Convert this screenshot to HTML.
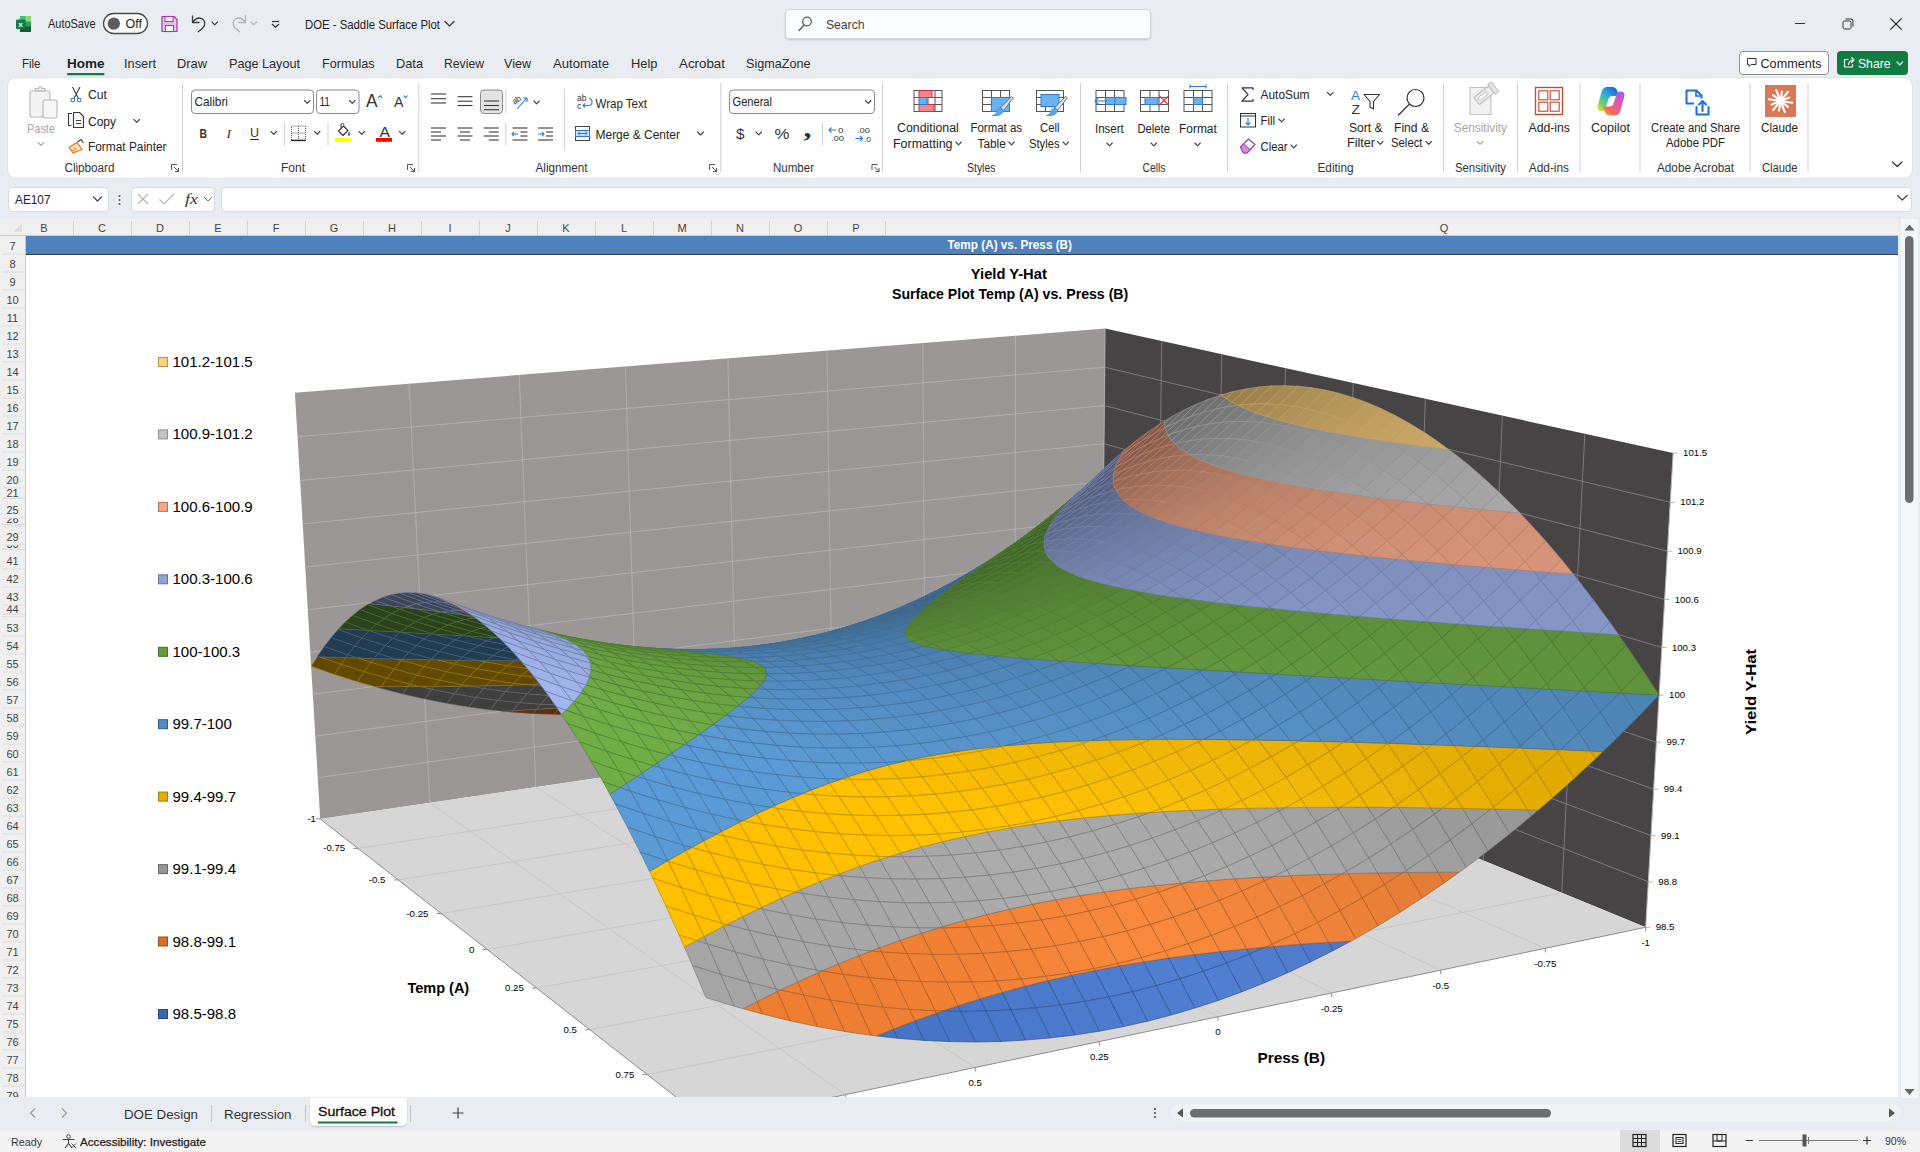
<!DOCTYPE html><html lang="en"><head><meta charset="utf-8"><title>DOE - Saddle Surface Plot - Excel</title><style>
*{box-sizing:border-box;margin:0;padding:0}
html,body{width:1920px;height:1152px;overflow:hidden}
body{background:#e9ecf1;font-family:"Liberation Sans",sans-serif;position:relative;color:#242424}
.abs{position:absolute}
#ribbon{left:8px;top:78px;width:1904px;height:100px;background:#fff;border-radius:8px;box-shadow:0 0 2px rgba(0,0,0,.12)}
#search{left:785px;top:9px;width:366px;height:30px;background:#fbfcfd;border:1px solid #d4d7db;border-radius:4px;box-shadow:0 1px 2px rgba(0,0,0,.15)}
#namebox{left:8px;top:186.5px;width:101px;height:25px;background:#fff;border:1px solid #d6d9dd;border-radius:4px}
#fxbox{left:131px;top:186.5px;width:84px;height:25px;background:#fff;border:1px solid #d6d9dd;border-radius:4px}
#formula{left:221px;top:186.5px;width:1691px;height:25px;background:#fff;border:1px solid #d6d9dd;border-radius:4px}
#colhdr{left:0;top:219px;width:1898px;height:17px;background:#f0f0f0}
#rowhdr{left:0;top:236px;width:26px;height:861px;background:#f0f0f0}
#sheet{left:26px;top:236px;width:1872px;height:861px;background:#fff;overflow:hidden}
#row7{left:26px;top:236px;width:1872px;height:18.7px;background:#4f81bd;border-bottom:1.5px solid #3b3b3b}
#vscroll{left:1898px;top:219px;width:22px;height:879px;background:#e9ecf1}
#vtrack{left:1901px;top:219px;width:17px;height:879px;background:#f5f6f7}
#tabsbar{left:0;top:1098px;width:1920px;height:31px;background:#e9ecf1}
#hscroll{left:1171px;top:1104px;width:730px;height:18px;background:#f1f2f4;border-radius:9px}
#activetab{left:310px;top:1098px;width:97px;height:28px;background:#fff;border-radius:0 0 5px 5px;box-shadow:0 1px 2px rgba(0,0,0,.18)}
#status{left:0;top:1130px;width:1920px;height:22px;background:#f3f3f3}
#viewsel{left:1620px;top:1130px;width:40px;height:22px;background:#dcdcdc}
#comments{left:1739px;top:51px;width:89.5px;height:23.5px;background:#fff;border:1px solid #8f9296;border-radius:4px}
#share{left:1837px;top:51px;width:71px;height:23.5px;background:#107c41;border-radius:4px}
svg text{font-family:"Liberation Sans",sans-serif}
svg.ov{position:absolute;left:0;top:0;pointer-events:none}
</style></head><body>
<div id="titlebar" class="abs" style="left:0;top:0;width:1920px;height:48px"></div>
<div id="search" class="abs"></div>
<div id="comments" class="abs"></div><div id="share" class="abs"></div>
<svg class="ov" width="1920" height="80" viewBox="0 0 1920 80">
<g><rect x="20" y="16" width="11" height="16" rx="1.5" fill="#21a366"/><rect x="20" y="16" width="11" height="5.5" fill="#33c481"/><rect x="20" y="26.5" width="11" height="5.5" fill="#185c37"/><rect x="25.5" y="16" width="5.5" height="5.5" fill="#9bdc6a" opacity=".9"/><rect x="16" y="19.5" width="9.5" height="9.5" rx="1.2" fill="#107c41"/>
<text x="18.3" y="27.3" font-size="8" fill="#fff" font-weight="bold">x</text></g>
<text x="48" y="28" font-size="12.3" fill="#242424" textLength="47.5" lengthAdjust="spacingAndGlyphs">AutoSave</text>
<rect x="103.5" y="13.5" width="44" height="20" rx="10" fill="#fdfdfd" stroke="#4a4a4a" stroke-width="1.3"/><circle cx="113.8" cy="23.6" r="6.2" fill="#5c5c5c"/>
<text x="125.5" y="28" font-size="12.3" fill="#242424" textLength="16.5" lengthAdjust="spacingAndGlyphs">Off</text>
<path d="M162 16.5h12l3 3v12h-15z" fill="#e8c3ea" stroke="#a03ba8" stroke-width="1.2" stroke-linejoin="round"/><rect x="165" y="16.5" width="8" height="5" fill="#fff" stroke="#a03ba8" stroke-width="1.1"/><rect x="165.5" y="25.5" width="8" height="6" fill="#fff" stroke="#a03ba8" stroke-width="1.1"/>
<path d="M192.5 16v6.5h6.5M192.8 22.3c2.5-3.8 6-5 9-3.6c3.6 1.7 4 6.5 1 9.2l-4.5 3.8" fill="none" stroke="#3a3a3a" stroke-width="1.3" stroke-linecap="round" stroke-linejoin="round"/>
<path d="M212 22l2.75 2.8l2.75 -2.8" fill="none" stroke="#3a3a3a" stroke-width="1.1" stroke-linecap="round" stroke-linejoin="round"/>
<path d="M245.5 16v6.5h-6.5M245.2 22.3c-2.5-3.8-6-5-9-3.6c-3.6 1.7-4 6.5-1 9.2l4.5 3.8" fill="none" stroke="#b3b3b3" stroke-width="1.3" stroke-linecap="round" stroke-linejoin="round"/>
<path d="M251 22l2.75 2.8l2.75 -2.8" fill="none" stroke="#b3b3b3" stroke-width="1.1" stroke-linecap="round" stroke-linejoin="round"/>
<path d="M272 21.5h7" stroke="#3a3a3a" stroke-width="1.2"/><path d="M272.3 24.3l3.2 3l3.2 -3" fill="none" stroke="#3a3a3a" stroke-width="1.2" stroke-linecap="round" stroke-linejoin="round"/>
<text x="305" y="28.5" font-size="13" fill="#242424" textLength="135" lengthAdjust="spacingAndGlyphs">DOE - Saddle Surface Plot</text>
<path d="M445 21.5l4.5 4.5l4.5 -4.5" fill="none" stroke="#3a3a3a" stroke-width="1.3" stroke-linecap="round" stroke-linejoin="round"/>
<circle cx="807" cy="21.5" r="4.3" fill="none" stroke="#555" stroke-width="1.2"/><path d="M804 25l-5 5.5" stroke="#555" stroke-width="1.3" stroke-linecap="round"/>
<text x="826" y="29" font-size="13" fill="#444" textLength="38.5" lengthAdjust="spacingAndGlyphs">Search</text>
<path d="M1795 23.5h10" stroke="#333" stroke-width="1"/>
<rect x="1843" y="21" width="8" height="8" rx="1.5" fill="none" stroke="#333" stroke-width="1"/><path d="M1845.5 19h5.5a2 2 0 0 1 2 2v5.5" fill="none" stroke="#333" stroke-width="1"/>
<path d="M1890.5 18.5l11 11m0-11l-11 11" stroke="#333" stroke-width="1.1"/>
<text x="22" y="68" font-size="13.3" fill="#2b2b2b" textLength="18.5" lengthAdjust="spacingAndGlyphs">File</text>
<text x="67" y="68" font-size="13.3" fill="#1f1f1f" textLength="37.5" lengthAdjust="spacingAndGlyphs" font-weight="bold">Home</text>
<text x="124" y="68" font-size="13.3" fill="#2b2b2b" textLength="32" lengthAdjust="spacingAndGlyphs">Insert</text>
<text x="177" y="68" font-size="13.3" fill="#2b2b2b" textLength="30" lengthAdjust="spacingAndGlyphs">Draw</text>
<text x="229" y="68" font-size="13.3" fill="#2b2b2b" textLength="71" lengthAdjust="spacingAndGlyphs">Page Layout</text>
<text x="322" y="68" font-size="13.3" fill="#2b2b2b" textLength="52.5" lengthAdjust="spacingAndGlyphs">Formulas</text>
<text x="396" y="68" font-size="13.3" fill="#2b2b2b" textLength="27" lengthAdjust="spacingAndGlyphs">Data</text>
<text x="444" y="68" font-size="13.3" fill="#2b2b2b" textLength="40" lengthAdjust="spacingAndGlyphs">Review</text>
<text x="504" y="68" font-size="13.3" fill="#2b2b2b" textLength="27" lengthAdjust="spacingAndGlyphs">View</text>
<text x="553" y="68" font-size="13.3" fill="#2b2b2b" textLength="56" lengthAdjust="spacingAndGlyphs">Automate</text>
<text x="631" y="68" font-size="13.3" fill="#2b2b2b" textLength="26.5" lengthAdjust="spacingAndGlyphs">Help</text>
<text x="679" y="68" font-size="13.3" fill="#2b2b2b" textLength="46" lengthAdjust="spacingAndGlyphs">Acrobat</text>
<text x="746" y="68" font-size="13.3" fill="#2b2b2b" textLength="64.5" lengthAdjust="spacingAndGlyphs">SigmaZone</text>
<rect x="67" y="73" width="37.5" height="2.2" rx="1" fill="#107c41"/>
<path d="M1747.5 58.5h8.5v6h-5l-2 2v-2h-1.5z" fill="none" stroke="#333" stroke-width="1" stroke-linejoin="round"/>
<text x="1760.5" y="68" font-size="12.5" fill="#1f1f1f" textLength="61" lengthAdjust="spacingAndGlyphs">Comments</text>
<path d="M1848 59.5h-3.5v7.5h8v-2.5M1848.5 64.5c.5-3 2-4.3 4.5-4.5M1851.5 57.5l2.5 2.5l-2.5 2.5" fill="none" stroke="#fff" stroke-width="1.1" stroke-linejoin="round" stroke-linecap="round"/>
<text x="1858" y="68" font-size="13" fill="#fff" textLength="32.5" lengthAdjust="spacingAndGlyphs">Share</text>
<path d="M1897 62l2.75 2.8l2.75 -2.8" fill="none" stroke="#fff" stroke-width="1.1" stroke-linecap="round" stroke-linejoin="round"/>
</svg>
<div id="ribbon" class="abs"></div>
<svg class="ov" style="top:78px" width="1920" height="106" viewBox="0 78 1920 106">
<rect x="30" y="91" width="20" height="26" rx="2" fill="#f3f3f3" stroke="#b9b9b9" stroke-width="1.2"/><path d="M35.5 91v-2.5h3a1.8 1.8 0 0 1 3.600 0h3v2.500z" fill="#e6e6e6" stroke="#b9b9b9" stroke-width="1.1"/><rect x="43" y="100" width="14" height="18" rx="1.5" fill="#f6f6f6" stroke="#b9b9b9" stroke-width="1.2"/>
<text x="27" y="133" font-size="12.3" fill="#a6a6a6" textLength="28" lengthAdjust="spacingAndGlyphs">Paste</text>
<path d="M38 142.5l3.0 3l3.0 -3" fill="none" stroke="#a6a6a6" stroke-width="1.1" stroke-linecap="round" stroke-linejoin="round"/>
<path d="M72.5 87l6 11.500M80 87l-6 11.500" stroke="#3b3b3b" stroke-width="1.1" fill="none"/><circle cx="72.800" cy="100" r="1.800" fill="none" stroke="#2b7cd3" stroke-width="1.1"/><circle cx="79.200" cy="100" r="1.800" fill="none" stroke="#2b7cd3" stroke-width="1.1"/>
<text x="88" y="99.3" font-size="12.3" fill="#242424" textLength="19" lengthAdjust="spacingAndGlyphs">Cut</text>
<path d="M72 113.500h-3.500v12h3" fill="none" stroke="#3b3b3b" stroke-width="1.100"/><path d="M73.500 112.500h6l4 4v11h-10z" fill="#fff" stroke="#3b3b3b" stroke-width="1.100" stroke-linejoin="round"/><path d="M76 120.500h5M76 123.500h5" stroke="#3b3b3b" stroke-width="1"/>
<text x="88" y="125.5" font-size="12.3" fill="#242424" textLength="28" lengthAdjust="spacingAndGlyphs">Copy</text>
<path d="M134 119.5l2.75 2.8l2.75 -2.8" fill="none" stroke="#444" stroke-width="1.1" stroke-linecap="round" stroke-linejoin="round"/>
<path d="M69 147.500l8-5l5 7l-9 3.500z" fill="#fbe3cf" stroke="#e8731c" stroke-width="1.200" stroke-linejoin="round"/><path d="M77.500 142l3.500-2.500l2.500 3.500" fill="none" stroke="#3b3b3b" stroke-width="1.100"/><path d="M71 150l4 .5M73 147.500l4 2" stroke="#e8731c" stroke-width=".9"/>
<text x="88" y="151" font-size="12.3" fill="#242424" textLength="78.5" lengthAdjust="spacingAndGlyphs">Format Painter</text>
<text x="64.5" y="171.8" font-size="12.3" fill="#333" textLength="50" lengthAdjust="spacingAndGlyphs">Clipboard</text>
<path d="M171.5 170v-5.5h5.5M174 167l4.5 4.5m0-3.5v3.5h-3.5" fill="none" stroke="#555" stroke-width="1"/>
<path d="M182.5 83L182.5 172" stroke="#d1d1d1" stroke-width="1" fill="none"/>
<rect x="191.500" y="90" width="122" height="23.500" rx="3.500" fill="#fff" stroke="#8a8a8a"/><rect x="316.500" y="90" width="42.500" height="23.500" rx="3.500" fill="#fff" stroke="#8a8a8a"/>
<text x="194.5" y="106" font-size="12.3" fill="#242424" textLength="33.5" lengthAdjust="spacingAndGlyphs">Calibri</text>
<path d="M304.5 100.5l2.75 2.8l2.75 -2.8" fill="none" stroke="#444" stroke-width="1.1" stroke-linecap="round" stroke-linejoin="round"/>
<text x="319.5" y="106" font-size="12.3" fill="#242424" textLength="10.5" lengthAdjust="spacingAndGlyphs">11</text>
<path d="M349.5 100.5l2.75 2.8l2.75 -2.8" fill="none" stroke="#444" stroke-width="1.1" stroke-linecap="round" stroke-linejoin="round"/>
<text x="366" y="107" font-size="17.5" fill="#333" textLength="11.5" lengthAdjust="spacingAndGlyphs">A</text>
<path d="M378.300 97.800l2-2.200l2 2.200" fill="none" stroke="#2b7cd3" stroke-width="1.100"/>
<text x="394" y="107" font-size="14.5" fill="#333" textLength="9.5" lengthAdjust="spacingAndGlyphs">A</text>
<path d="M403.500 95.500l2 2.200l2-2.200" fill="none" stroke="#2b7cd3" stroke-width="1.100"/>
<text x="199.5" y="138" font-size="13.5" fill="#333" textLength="7.5" lengthAdjust="spacingAndGlyphs" font-weight="bold">B</text>
<text x="226.5" y="138" font-size="13.5" fill="#333" textLength="4.5" lengthAdjust="spacingAndGlyphs" font-style="italic" style="font-family:Liberation Serif,serif">I</text>
<text x="250" y="137" font-size="12.5" fill="#333" textLength="9" lengthAdjust="spacingAndGlyphs">U</text>
<path d="M250 139.500h9" stroke="#333" stroke-width="1"/>
<path d="M271 131.5l2.75 2.8l2.75 -2.8" fill="none" stroke="#444" stroke-width="1.1" stroke-linecap="round" stroke-linejoin="round"/>
<path d="M284.5 122.5L284.5 145.5" stroke="#d1d1d1" stroke-width="1" fill="none"/>
<rect x="291.500" y="126" width="14" height="14" fill="none" stroke="#555" stroke-width="1" stroke-dasharray="1 1"/><path d="M298.500 126v14M291.500 133h14" stroke="#555" stroke-width="1" stroke-dasharray="1 1"/><path d="M291 140.500h15" stroke="#222" stroke-width="1.300"/>
<path d="M314.5 131.5l2.75 2.8l2.75 -2.8" fill="none" stroke="#444" stroke-width="1.1" stroke-linecap="round" stroke-linejoin="round"/>
<path d="M328 122.5L328 145.5" stroke="#d1d1d1" stroke-width="1" fill="none"/>
<path d="M338.500 131l5-5l4.500 4.500l-5 5z" fill="none" stroke="#333" stroke-width="1.100" stroke-linejoin="round"/><path d="M341 127.500v-2.500a1.500 1.500 0 0 1 3 0" fill="none" stroke="#333" stroke-width="1"/><path d="M349 131.500c1 1.500 1.500 2.500 1 3.500a1 1 0 0 1-2 0c-.300-1 0-2 1-3.500z" fill="#2b7cd3"/>
<rect x="335" y="138" width="16" height="3.800" fill="#ffff00"/>
<path d="M359 131.5l2.75 2.8l2.75 -2.8" fill="none" stroke="#444" stroke-width="1.1" stroke-linecap="round" stroke-linejoin="round"/>
<text x="379.5" y="136.8" font-size="14" fill="#333" textLength="10.5" lengthAdjust="spacingAndGlyphs">A</text>
<rect x="376" y="138" width="16" height="3.800" fill="#ff0000"/>
<path d="M399.5 131.5l2.75 2.8l2.75 -2.8" fill="none" stroke="#444" stroke-width="1.1" stroke-linecap="round" stroke-linejoin="round"/>
<text x="281" y="171.8" font-size="12.3" fill="#333" textLength="24" lengthAdjust="spacingAndGlyphs">Font</text>
<path d="M407.5 170v-5.5h5.5M410 167l4.5 4.5m0-3.5v3.5h-3.5" fill="none" stroke="#555" stroke-width="1"/>
<path d="M418.8 83L418.8 172" stroke="#d1d1d1" stroke-width="1" fill="none"/>
<path d="M431 94h15" stroke="#3b3b3b" stroke-width="1.1"/><path d="M431 98.7h15" stroke="#3b3b3b" stroke-width="1.1"/><path d="M431 103h15" stroke="#3b3b3b" stroke-width="1.1"/>
<path d="M457.5 96.7h15" stroke="#3b3b3b" stroke-width="1.1"/><path d="M457.5 101.2h15" stroke="#3b3b3b" stroke-width="1.1"/><path d="M457.5 105.5h15" stroke="#3b3b3b" stroke-width="1.1"/>
<rect x="480.500" y="90" width="22" height="23.500" rx="3.500" fill="#e3e3e3" stroke="#8a8a8a"/>
<path d="M484 101h15" stroke="#3b3b3b" stroke-width="1.1"/><path d="M484 105.5h15" stroke="#3b3b3b" stroke-width="1.1"/><path d="M484 109.7h15" stroke="#3b3b3b" stroke-width="1.1"/>
<path d="M505.8 90L505.8 113" stroke="#d1d1d1" stroke-width="1" fill="none"/>
<text x="512" y="103" font-size="8.5" fill="#333" textLength="9" lengthAdjust="spacingAndGlyphs" transform="rotate(-35 516 100)">ab</text>
<path d="M517 109l10-11m0 0h-4m4 0v4" fill="none" stroke="#2b7cd3" stroke-width="1.100"/>
<path d="M533.8 101l2.75 2.8l2.75 -2.8" fill="none" stroke="#444" stroke-width="1.1" stroke-linecap="round" stroke-linejoin="round"/>
<path d="M564.5 89L564.5 150.5" stroke="#d1d1d1" stroke-width="1" fill="none"/>
<text x="577" y="100.5" font-size="9.5" fill="#333" textLength="9.5" lengthAdjust="spacingAndGlyphs">ab</text>
<text x="577" y="109" font-size="9.5" fill="#333" textLength="4.5" lengthAdjust="spacingAndGlyphs">c</text>
<path d="M589 98.500c2.500 0 3 2 3 3.500s-1 3.500-3.500 3.500h-5.500m2.200-2.200l-2.200 2.200l2.200 2.200" fill="none" stroke="#2b7cd3" stroke-width="1.100"/>
<text x="595.5" y="107.5" font-size="12.3" fill="#242424" textLength="51.5" lengthAdjust="spacingAndGlyphs">Wrap Text</text>
<path d="M431 128h15" stroke="#3b3b3b" stroke-width="1.1"/><path d="M431 132h10" stroke="#3b3b3b" stroke-width="1.1"/><path d="M431 136h15" stroke="#3b3b3b" stroke-width="1.1"/><path d="M431 140h10" stroke="#3b3b3b" stroke-width="1.1"/>
<path d="M457.5 128h15" stroke="#3b3b3b" stroke-width="1.1"/><path d="M460 132h10" stroke="#3b3b3b" stroke-width="1.1"/><path d="M457.5 136h15" stroke="#3b3b3b" stroke-width="1.1"/><path d="M460 140h10" stroke="#3b3b3b" stroke-width="1.1"/>
<path d="M483.8 128h15" stroke="#3b3b3b" stroke-width="1.1"/><path d="M488.8 132h10" stroke="#3b3b3b" stroke-width="1.1"/><path d="M483.8 136h15" stroke="#3b3b3b" stroke-width="1.1"/><path d="M488.8 140h10" stroke="#3b3b3b" stroke-width="1.1"/>
<path d="M505.8 122.5L505.8 145.5" stroke="#d1d1d1" stroke-width="1" fill="none"/>
<path d="M512.5 128h15" stroke="#3b3b3b" stroke-width="1.1"/><path d="M520.5 132h7" stroke="#3b3b3b" stroke-width="1.1"/><path d="M520.5 136h7" stroke="#3b3b3b" stroke-width="1.1"/><path d="M512.5 140h15" stroke="#3b3b3b" stroke-width="1.1"/>
<path d="M518 134h-6m2-2l-2 2l2 2" fill="none" stroke="#2b7cd3" stroke-width="1.100"/>
<path d="M538 128h15" stroke="#3b3b3b" stroke-width="1.1"/><path d="M546 132h7" stroke="#3b3b3b" stroke-width="1.1"/><path d="M546 136h7" stroke="#3b3b3b" stroke-width="1.1"/><path d="M538 140h15" stroke="#3b3b3b" stroke-width="1.1"/>
<path d="M538 134h6m-2-2l2 2l-2 2" fill="none" stroke="#2b7cd3" stroke-width="1.100"/>
<rect x="575.500" y="126.500" width="14" height="14" fill="#fff" stroke="#444" stroke-width="1"/><rect x="575.500" y="130.500" width="14" height="6" fill="#cfe3f7" stroke="#2b7cd3" stroke-width="1"/><path d="M578 133.500h9m-2-2l2 2l-2 2m-5-4l-2 2l2 2" fill="none" stroke="#2b7cd3" stroke-width="1"/>
<text x="595.5" y="139.3" font-size="12.3" fill="#242424" textLength="84.5" lengthAdjust="spacingAndGlyphs">Merge &amp; Center</text>
<path d="M697.5 132l3.0 3l3.0 -3" fill="none" stroke="#444" stroke-width="1.1" stroke-linecap="round" stroke-linejoin="round"/>
<text x="535.5" y="171.8" font-size="12.3" fill="#333" textLength="52" lengthAdjust="spacingAndGlyphs">Alignment</text>
<path d="M709.5 170v-5.5h5.5M712 167l4.5 4.5m0-3.5v3.5h-3.5" fill="none" stroke="#555" stroke-width="1"/>
<path d="M720.8 83L720.8 172" stroke="#d1d1d1" stroke-width="1" fill="none"/>
<rect x="729.500" y="90" width="145" height="23.500" rx="3.500" fill="#fff" stroke="#8a8a8a"/>
<text x="732.5" y="106" font-size="12.3" fill="#242424" textLength="39.5" lengthAdjust="spacingAndGlyphs">General</text>
<path d="M865.5 100.5l2.75 2.8l2.75 -2.8" fill="none" stroke="#444" stroke-width="1.1" stroke-linecap="round" stroke-linejoin="round"/>
<text x="736" y="139" font-size="15.5" fill="#333" textLength="8.5" lengthAdjust="spacingAndGlyphs">$</text>
<path d="M756 132l2.75 2.8l2.75 -2.8" fill="none" stroke="#444" stroke-width="1.1" stroke-linecap="round" stroke-linejoin="round"/>
<text x="774.5" y="139" font-size="15.5" fill="#333" textLength="15" lengthAdjust="spacingAndGlyphs">%</text>
<text x="803.5" y="137" font-size="26" fill="#333" textLength="8" lengthAdjust="spacingAndGlyphs" font-weight="bold" style="font-family:Liberation Serif,serif">,</text>
<path d="M822.5 122.5L822.5 145.5" stroke="#d1d1d1" stroke-width="1" fill="none"/>
<path d="M836 130h-7m2.500-2.500l-2.500 2.500l2.500 2.500" fill="none" stroke="#2b7cd3" stroke-width="1.100"/><text x="838" y="133" font-size="8" fill="#333" textLength="5.5" lengthAdjust="spacingAndGlyphs">0</text><text x="831" y="141" font-size="8" fill="#333" textLength="13" lengthAdjust="spacingAndGlyphs">.00</text>
<text x="857" y="133" font-size="8" fill="#333" textLength="13" lengthAdjust="spacingAndGlyphs">.00</text><path d="M855.500 138.500h7m-2.500-2.500l2.500 2.500l-2.500 2.500" fill="none" stroke="#2b7cd3" stroke-width="1.100"/><text x="864" y="141.5" font-size="8" fill="#333" textLength="7" lengthAdjust="spacingAndGlyphs">.0</text>
<text x="773" y="171.8" font-size="12.3" fill="#333" textLength="41" lengthAdjust="spacingAndGlyphs">Number</text>
<path d="M872.0 170v-5.5h5.5M874.5 167l4.5 4.5m0-3.5v3.5h-3.5" fill="none" stroke="#555" stroke-width="1"/>
<path d="M882.5 83L882.5 172" stroke="#d1d1d1" stroke-width="1" fill="none"/>
<rect x="914" y="90.500" width="28" height="21" fill="#fff" stroke="#555"/><path d="M921 90.500v21M928 90.500v21M935 90.500v21M914 97.500h28M914 104.500h28" stroke="#555" stroke-width="1"/><rect x="919" y="90.500" width="13" height="7" fill="#f4888a" stroke="#d13438"/><rect x="919" y="104.500" width="15" height="7" fill="#f4888a" stroke="#d13438"/><rect x="919" y="97.500" width="8" height="7" fill="#6cb0ee" stroke="#2b7cd3"/>
<text x="897" y="131.8" font-size="12.3" fill="#242424" textLength="61.8" lengthAdjust="spacingAndGlyphs">Conditional</text>
<text x="893" y="148" font-size="12.3" fill="#242424" textLength="59.5" lengthAdjust="spacingAndGlyphs">Formatting</text>
<path d="M955.8 142l2.75 2.8l2.75 -2.8" fill="none" stroke="#444" stroke-width="1.1" stroke-linecap="round" stroke-linejoin="round"/>
<rect x="982.500" y="90.500" width="27" height="21" fill="#fff" stroke="#555"/><path d="M991.500 90.500v21M1000.500 90.500v21M982.500 97.500h27M982.500 104.500h27" stroke="#555" stroke-width="1"/><rect x="991.500" y="97.500" width="18" height="14" fill="#6cb0ee" stroke="#2b7cd3"/><path d="M1011.500 96.500l1.800 1.300l-9.500 12.500l-3.300-2.300z" fill="#cfe4f8" stroke="#666" stroke-width=".9" stroke-linejoin="round"/><path d="M1000.300 108l3.500 2.400c-.8 3.300-4.500 5.800-11.500 5.200c3.200-1 4.300-2.600 4.800-4.600c.4-1.600 1.400-2.600 3.200-3z" fill="#5ea6e8" stroke="#3f8edb" stroke-width=".8" stroke-linejoin="round"/>
<text x="970.5" y="131.8" font-size="12.3" fill="#242424" textLength="51.5" lengthAdjust="spacingAndGlyphs">Format as</text>
<text x="977.5" y="148" font-size="12.3" fill="#242424" textLength="28.3" lengthAdjust="spacingAndGlyphs">Table</text>
<path d="M1008.8 142l2.75 2.8l2.75 -2.8" fill="none" stroke="#444" stroke-width="1.1" stroke-linecap="round" stroke-linejoin="round"/>
<rect x="1036.500" y="90.500" width="27" height="21" fill="#fff" stroke="#555"/><path d="M1036.500 97.500h27M1036.500 104.500h27M1045.500 104.500v7M1054.500 104.500v7" stroke="#555" stroke-width="1"/><rect x="1041" y="94.500" width="18" height="12" fill="#6cb0ee" stroke="#2b7cd3"/><path d="M1065.500 96.500l1.800 1.300l-9.500 12.500l-3.300-2.300z" fill="#cfe4f8" stroke="#666" stroke-width=".9" stroke-linejoin="round"/><path d="M1054.300 108l3.500 2.400c-.8 3.300-4.500 5.800-11.500 5.200c3.200-1 4.300-2.600 4.800-4.600c.4-1.600 1.400-2.600 3.200-3z" fill="#5ea6e8" stroke="#3f8edb" stroke-width=".8" stroke-linejoin="round"/>
<text x="1040" y="131.8" font-size="12.3" fill="#242424" textLength="19.5" lengthAdjust="spacingAndGlyphs">Cell</text>
<text x="1029" y="148" font-size="12.3" fill="#242424" textLength="30.5" lengthAdjust="spacingAndGlyphs">Styles</text>
<path d="M1063 142l2.75 2.8l2.75 -2.8" fill="none" stroke="#444" stroke-width="1.1" stroke-linecap="round" stroke-linejoin="round"/>
<text x="967" y="171.8" font-size="12.3" fill="#333" textLength="28.5" lengthAdjust="spacingAndGlyphs">Styles</text>
<path d="M1080.5 83L1080.5 172" stroke="#d1d1d1" stroke-width="1" fill="none"/>
<rect x="1096" y="90.500" width="28" height="21" fill="#fff" stroke="#555"/><path d="M1105.5 90.500v21M1114.5 90.500v21M1096 97.500h28M1096 104.500h28" stroke="#555" stroke-width="1"/><rect x="1105.500" y="97.500" width="20.500" height="7" fill="#6cb0ee" stroke="#2b7cd3"/><path d="M1115 97.500v7" stroke="#2b7cd3"/><path d="M1107 101h-12m3.500-3.500l-3.500 3.500l3.500 3.500" fill="none" stroke="#2b7cd3" stroke-width="1.200"/>
<text x="1095" y="132.5" font-size="12.3" fill="#242424" textLength="28.8" lengthAdjust="spacingAndGlyphs">Insert</text>
<path d="M1106.8 143l2.75 2.8l2.75 -2.8" fill="none" stroke="#444" stroke-width="1.1" stroke-linecap="round" stroke-linejoin="round"/>
<rect x="1140.5" y="90.500" width="28" height="21" fill="#fff" stroke="#555"/><path d="M1150.0 90.500v21M1159.0 90.500v21M1140.5 97.500h28M1140.5 104.500h28" stroke="#555" stroke-width="1"/><rect x="1145" y="97.500" width="13" height="7" fill="#6cb0ee" stroke="#2b7cd3"/><path d="M1159 95.500l10 10m0-10l-10 10" stroke="#e8373d" stroke-width="1.200"/>
<text x="1137.5" y="132.5" font-size="12.3" fill="#242424" textLength="32.5" lengthAdjust="spacingAndGlyphs">Delete</text>
<path d="M1151 143l2.75 2.8l2.75 -2.8" fill="none" stroke="#444" stroke-width="1.1" stroke-linecap="round" stroke-linejoin="round"/>
<rect x="1184" y="90.500" width="28" height="21" fill="#fff" stroke="#555"/><path d="M1193.5 90.500v21M1202.5 90.500v21M1184 97.500h28M1184 104.500h28" stroke="#555" stroke-width="1"/><rect x="1193.500" y="97.500" width="9" height="7" fill="#6cb0ee" stroke="#2b7cd3"/><path d="M1190 86.500h16M1190 84.500v4M1206 84.500v4" stroke="#2b7cd3" stroke-width="1.100"/>
<text x="1179" y="132.5" font-size="12.3" fill="#242424" textLength="37.8" lengthAdjust="spacingAndGlyphs">Format</text>
<path d="M1194.8 143l2.75 2.8l2.75 -2.8" fill="none" stroke="#444" stroke-width="1.1" stroke-linecap="round" stroke-linejoin="round"/>
<text x="1142.5" y="171.8" font-size="12.3" fill="#333" textLength="23" lengthAdjust="spacingAndGlyphs">Cells</text>
<path d="M1227.5 83L1227.5 172" stroke="#d1d1d1" stroke-width="1" fill="none"/>
<path d="M1253 90v-2.200h-11l6 6.700l-6 6.700h11v-2.200" fill="none" stroke="#333" stroke-width="1.200" stroke-linejoin="round"/>
<text x="1260.5" y="99.3" font-size="12.3" fill="#242424" textLength="49" lengthAdjust="spacingAndGlyphs">AutoSum</text>
<path d="M1327.5 92.5l2.75 2.8l2.75 -2.8" fill="none" stroke="#444" stroke-width="1.1" stroke-linecap="round" stroke-linejoin="round"/>
<rect x="1240.500" y="113.500" width="15" height="13.500" fill="#fff" stroke="#333"/><path d="M1240.500 116h15" stroke="#333"/><path d="M1248 118v7m-2.500-2.500l2.500 2.500l2.500-2.500" fill="none" stroke="#2b7cd3" stroke-width="1.100"/>
<text x="1260.5" y="125" font-size="12.3" fill="#242424" textLength="14.5" lengthAdjust="spacingAndGlyphs">Fill</text>
<path d="M1278.8 119l2.75 2.8l2.75 -2.8" fill="none" stroke="#444" stroke-width="1.1" stroke-linecap="round" stroke-linejoin="round"/>
<path d="M1240.500 147l8-8l6.500 5.500l-8 8.500h-3.500z" fill="#fff" stroke="#a03ba8" stroke-width="1.200" stroke-linejoin="round"/><path d="M1240.500 147l3-3l6.500 5.500l-3 3.500h-3.500z" fill="#d68adb" stroke="#a03ba8" stroke-width="1"/>
<text x="1260.5" y="151" font-size="12.3" fill="#242424" textLength="27" lengthAdjust="spacingAndGlyphs">Clear</text>
<path d="M1291 145l2.75 2.8l2.75 -2.8" fill="none" stroke="#444" stroke-width="1.1" stroke-linecap="round" stroke-linejoin="round"/>
<text x="1351" y="100" font-size="12.5" fill="#2b7cd3" textLength="9" lengthAdjust="spacingAndGlyphs">A</text><text x="1351.5" y="113.5" font-size="12.5" fill="#333" textLength="8.5" lengthAdjust="spacingAndGlyphs">Z</text>
<path d="M1364 94.500h15.500l-6 7v7.500l-3.500-2v-5.500z" fill="none" stroke="#333" stroke-width="1.100" stroke-linejoin="round"/>
<text x="1349" y="131.8" font-size="12.3" fill="#242424" textLength="33.5" lengthAdjust="spacingAndGlyphs">Sort &amp;</text>
<text x="1347" y="147.4" font-size="12.3" fill="#242424" textLength="28" lengthAdjust="spacingAndGlyphs">Filter</text>
<path d="M1377.5 141.5l2.75 2.8l2.75 -2.8" fill="none" stroke="#444" stroke-width="1.1" stroke-linecap="round" stroke-linejoin="round"/>
<circle cx="1415.500" cy="98" r="8.500" fill="none" stroke="#333" stroke-width="1.200"/><path d="M1409.500 104l-11.500 11.500" stroke="#333" stroke-width="1.300"/>
<text x="1394" y="131.8" font-size="12.3" fill="#242424" textLength="35" lengthAdjust="spacingAndGlyphs">Find &amp;</text>
<text x="1391" y="147.4" font-size="12.3" fill="#242424" textLength="31.5" lengthAdjust="spacingAndGlyphs">Select</text>
<path d="M1426 141.5l2.75 2.8l2.75 -2.8" fill="none" stroke="#444" stroke-width="1.1" stroke-linecap="round" stroke-linejoin="round"/>
<text x="1317.5" y="171.8" font-size="12.3" fill="#333" textLength="36" lengthAdjust="spacingAndGlyphs">Editing</text>
<path d="M1443.5 83L1443.5 172" stroke="#d1d1d1" stroke-width="1" fill="none"/>
<path d="M1470 87.500h21v27h-21z" fill="#f1f1f1" stroke="#c2c2c2" stroke-width="1.100"/><g transform="rotate(-38 1485.500 94)"><rect x="1474" y="89.500" width="19" height="9" rx="1.500" fill="#ececec" stroke="#bcbcbc" stroke-width="1.100"/><rect x="1477" y="92.200" width="10" height="3.600" fill="#fff" stroke="#bcbcbc" stroke-width=".9"/><rect x="1493" y="88" width="4.500" height="12" fill="#e4e4e4" stroke="#bcbcbc" stroke-width="1"/></g>
<text x="1453.8" y="131.8" font-size="12.3" fill="#a6a6a6" textLength="53.2" lengthAdjust="spacingAndGlyphs">Sensitivity</text>
<path d="M1477.3 141.5l2.75 2.8l2.75 -2.8" fill="none" stroke="#a6a6a6" stroke-width="1.1" stroke-linecap="round" stroke-linejoin="round"/>
<text x="1455" y="171.8" font-size="12.3" fill="#333" textLength="51" lengthAdjust="spacingAndGlyphs">Sensitivity</text>
<path d="M1517.5 83L1517.5 172" stroke="#d1d1d1" stroke-width="1" fill="none"/>
<rect x="1535.500" y="87.500" width="27" height="27" fill="#fff" stroke="#c8472a" stroke-width="1.300"/><rect x="1538.800" y="90.800" width="9" height="9" fill="none" stroke="#c8472a" stroke-width="1.100"/><rect x="1550.200" y="90.800" width="9" height="9" fill="none" stroke="#c8472a" stroke-width="1.100"/><rect x="1538.800" y="102.200" width="9" height="9" fill="none" stroke="#c8472a" stroke-width="1.100"/><rect x="1550.200" y="102.200" width="9" height="9" fill="none" stroke="#c8472a" stroke-width="1.100"/>
<text x="1528.5" y="131.8" font-size="12.3" fill="#242424" textLength="41.5" lengthAdjust="spacingAndGlyphs">Add-ins</text>
<text x="1528.8" y="171.8" font-size="12.3" fill="#333" textLength="40.2" lengthAdjust="spacingAndGlyphs">Add-ins</text>
<path d="M1580 83L1580 172" stroke="#d1d1d1" stroke-width="1" fill="none"/>
<defs><linearGradient id="cp1" x1=".8" y1="0" x2=".1" y2="1"><stop offset="0" stop-color="#1b5fd0"/><stop offset=".35" stop-color="#2aa6e0"/><stop offset=".7" stop-color="#5fd07a"/><stop offset="1" stop-color="#f2d33c"/></linearGradient><linearGradient id="cp2" x1=".9" y1="0" x2=".2" y2="1"><stop offset="0" stop-color="#9b5cf0"/><stop offset=".45" stop-color="#e35bb0"/><stop offset=".8" stop-color="#f2685a"/><stop offset="1" stop-color="#f59a3c"/></linearGradient></defs>
<path d="M1603.500 87h8.500q4 0 5.300 4l1.700 5h-6.500q-3 0-4 3l-3 9q-1 3-4 3q-5 0-3.700-5.500l3.700-13.500q1.300-5 6-5z" fill="url(#cp1)"/><path d="M1618.500 115.500h-8.500q-4 0-5.300-4l-1.700-5h6.500q3 0 4-3l3-9q1-3 4-3q5 0 3.700 5.500l-3.700 13.500q-1.300 5-6 5z" fill="url(#cp2)"/>
<text x="1591" y="131.8" font-size="12.3" fill="#242424" textLength="39" lengthAdjust="spacingAndGlyphs">Copilot</text>
<path d="M1640 83L1640 172" stroke="#d1d1d1" stroke-width="1" fill="none"/>
<path d="M1694 103.500h-7.500v-13h10l5 5v3" fill="none" stroke="#1a6fe8" stroke-width="2" stroke-linejoin="round"/><path d="M1696 90.500v5.500h5.500" fill="none" stroke="#1a6fe8" stroke-width="1.600"/><path d="M1696.500 107v7.500h12v-7.500M1702.500 111v-10m-3.500 3.500l3.500-3.500l3.500 3.500" fill="none" stroke="#1a6fe8" stroke-width="2" stroke-linejoin="round" stroke-linecap="round"/>
<text x="1651" y="131.8" font-size="12.3" fill="#242424" textLength="89" lengthAdjust="spacingAndGlyphs">Create and Share</text>
<text x="1666" y="147.4" font-size="12.3" fill="#242424" textLength="59" lengthAdjust="spacingAndGlyphs">Adobe PDF</text>
<text x="1657" y="171.8" font-size="12.3" fill="#333" textLength="77" lengthAdjust="spacingAndGlyphs">Adobe Acrobat</text>
<path d="M1750 83L1750 172" stroke="#d1d1d1" stroke-width="1" fill="none"/>
<rect x="1765" y="85" width="31" height="32" fill="#d97757"/>
<path d="M1780.500 101l11.7 1.8M1780.500 101l7.4 5.9M1780.500 101l4.3 11.0M1780.500 101l-1.4 9.4M1780.500 101l-7.4 9.2M1780.500 101l-8.8 3.5M1780.500 101l-11.7 -1.8M1780.500 101l-7.4 -5.9M1780.500 101l-4.3 -11.0M1780.500 101l1.4 -9.4M1780.500 101l7.4 -9.2M1780.500 101l8.8 -3.5" stroke="#fff" stroke-width="2.100" stroke-linecap="round"/>
<text x="1761" y="131.8" font-size="12.3" fill="#242424" textLength="37" lengthAdjust="spacingAndGlyphs">Claude</text>
<text x="1762" y="171.8" font-size="12.3" fill="#333" textLength="35.5" lengthAdjust="spacingAndGlyphs">Claude</text>
<path d="M1808 83L1808 172" stroke="#d1d1d1" stroke-width="1" fill="none"/>
<path d="M1892.5 162l4.75 4.5l4.75 -4.5" fill="none" stroke="#333" stroke-width="1.2" stroke-linecap="round" stroke-linejoin="round"/>
</svg>
<div id="namebox" class="abs"></div><div id="fxbox" class="abs"></div><div id="formula" class="abs"></div>
<div id="colhdr" class="abs"></div><div id="rowhdr" class="abs"></div><div id="vscroll" class="abs"></div><div id="vtrack" class="abs"></div>
<div id="sheet" class="abs"></div><div id="row7" class="abs"></div>
<svg class="chart" width="1872" height="861" viewBox="26 236 1872 861" style="position:absolute;left:26px;top:236px">
<path d="M320.2 818.9L294.9 392.7L1105.1 328.6L1101.6 703.7Z" fill="#9b9796"/>
<path d="M1101.6 703.7L1105.1 328.6L1673.1 453.1L1645.7 927.3Z" fill="#464445"/>
<path d="M320.2 818.9L1101.6 703.7L1645.7 927.3L709.3 1123.1Z" fill="#d6d6d6"/>
<path d="M317.8 777.7L1102 667.2M315.3 736.2L1102.3 630.6M312.8 694.3L1102.6 593.7M310.3 652.2L1103 556.5M307.8 609.7L1103.3 519.1M305.3 567L1103.7 481.5M302.7 523.9L1104 443.7M300.1 480.5L1104.4 405.6M297.5 436.8L1104.8 367.2M1014.8 716.5L1015.5 335.7M925.1 729.7L922.8 343M832.6 743.4L827 350.6M736.9 757.5L727.9 358.4M638 772L625.4 366.6M535.8 787.1L519.2 375M429.9 802.8L409.1 383.7M1101.6 703.7L1105.1 328.6" stroke="#b7b5b4" stroke-width=".8" fill="none"/>
<path d="M1102 667.2L1648.3 881.7M1102.3 630.6L1651 835.6M1102.6 593.7L1653.7 789.2M1103 556.5L1656.4 742.3M1103.3 519.1L1659.1 695.1M1103.7 481.5L1661.9 647.5M1104 443.7L1664.7 599.5M1104.4 405.6L1667.5 551.2M1104.8 367.2L1670.3 502.3M1156.3 726.2L1161.8 341M1214.2 749.9L1221.8 354.2M1275.5 775.1L1285.5 368.1M1340.5 801.9L1353.2 383M1409.6 830.3L1425.4 398.8M1483.2 860.5L1502.4 415.7M1561.7 892.8L1584.8 433.8" stroke="#8a8989" stroke-width=".8" fill="none"/>
<path d="M1156.3 726.2L358 848.4M1014.8 716.5L1545.3 948.3M1214.2 749.9L398.2 879.9M925.1 729.7L1440.7 970.2M1275.5 775.1L441.2 913.5M832.6 743.4L1331.7 993M1340.5 801.9L487.2 949.5M736.9 757.5L1218 1016.8M1409.6 830.3L536.6 988.1M638 772L1099.3 1041.6M1483.2 860.5L589.7 1029.7M535.8 787.1L975.2 1067.5M1561.7 892.8L647.1 1074.6M429.9 802.8L845.3 1094.7" stroke="#c6c6c6" stroke-width=".9" fill="none"/>
<path d="M320.2 818.9L709.3 1123.1L1645.7 927.3M320.2 818.9h-4.5M1645.7 927.3v4M358 848.4h-4.5M1545.3 948.3v4M398.2 879.9h-4.5M1440.7 970.2v4M441.2 913.5h-4.5M1331.7 993v4M487.2 949.5h-4.5M1218 1016.8v4M536.6 988.1h-4.5M1099.3 1041.6v4M589.7 1029.7h-4.5M975.2 1067.5v4M647.1 1074.6h-4.5M845.3 1094.7v4M709.3 1123.1h-4.5M709.3 1123.1v4" stroke="#8c8c8c" stroke-width="1" fill="none"/>
<path d="M1645.7 927.3L1673.1 453.1M1645.7 927.3h4.5M1648.3 881.7h4.5M1651 835.6h4.5M1653.7 789.2h4.5M1656.4 742.3h4.5M1659.1 695.1h4.5M1661.9 647.5h4.5M1664.7 599.5h4.5M1667.5 551.2h4.5M1670.3 502.3h4.5M1673.1 453.1h4.5" stroke="#b5b5b5" stroke-width="1" fill="none"/>
<style>.sf path{stroke-width:.65;stroke-linejoin:round}.s0{stroke:#30518b}.s1{stroke:#a85923}.s2{stroke:#757575}.s3{stroke:#b58800}.s4{stroke:#416e97}.s5{stroke:#507b32}.s6{stroke:#7281a9}.s7{stroke:#be846c}.s8{stroke:#9a9a9a}.s9{stroke:#c8a565}.sf .k{stroke-opacity:.6}</style>
<g class="sf">
<path class="s5" fill="#2e481d" d="M1088 483.9L1086.2 485.6L1088.8 483.1Z"/>
<path class="s6" fill="#434b63" d="M1103.8 468.9L1114.9 458.5L1097.2 475.3L1088 483.9L1088.8 483.1Z"/>
<path class="s5 k" fill="#2b421b" d="M1086.2 485.6L1088 483.9L1083 488.2L1079.4 491.5L1068.5 501.7Z"/>
<path class="s6 k" fill="#3d455a" d="M1088 483.9L1097.2 475.3L1083 488.2Z"/>
<path class="s5 k" fill="#2b421b" d="M1068.5 501.7L1079.4 491.5L1061.6 507.1L1050.8 517.3Z"/>
<path class="s4 k" fill="#233b51" d="M1036.9 528.5L1033 532.2L1039.9 526.4Z"/>
<path class="s5 k" fill="#2b421b" d="M1050.8 517.3L1061.6 507.1L1043.7 522.2L1036.9 528.5L1039.9 526.4Z"/>
<path class="s4 k" fill="#233b51" d="M1033 532.2L1036.9 528.5L1031.3 532.1L1025.7 536.6L1015.1 546.6Z"/>
<path class="s5 k" fill="#2b421b" d="M1036.9 528.5L1043.7 522.2L1031.3 532.1Z"/>
<path class="s4 k" fill="#233b51" d="M1015.1 546.6L1025.7 536.6L1007.6 550.5L997.1 560.4Z"/>
<path class="s3 k" fill="#614900" d="M980.8 572.1L979.1 573.7L982.7 571Z"/>
<path class="s4 k" fill="#233b51" d="M997.1 560.4L1007.6 550.5L989.5 563.9L980.8 572.1L982.7 571Z"/>
<path class="s3 k" fill="#614900" d="M979.1 573.7L980.8 572.1L970.6 577.3L960.9 586.4Z"/>
<path class="s4 k" fill="#233b51" d="M980.8 572.1L989.5 563.9L971.2 576.6L970.6 577.3Z"/>
<path class="s3 k" fill="#614900" d="M960.9 586.4L970.6 577.3L969.6 577.7L952.9 588.8L942.7 598.5Z"/>
<path class="s4 k" fill="#233b51" d="M970.6 577.3L971.2 576.6L969.6 577.7Z"/>
<path class="s3 k" fill="#614900" d="M942.7 598.5L952.9 588.8L934.5 600.4L924.4 610Z"/>
<path class="s2 k" fill="#3f3f3f" d="M907.6 619.4L906 621L910.8 618.1Z"/>
<path class="s3 k" fill="#614900" d="M924.4 610L934.5 600.4L916 611.4L907.6 619.4L910.8 618.1Z"/>
<path class="s2 k" fill="#3f3f3f" d="M906 621L907.6 619.4L894.9 624.2L887.5 631.3Z"/>
<path class="s3 k" fill="#614900" d="M907.6 619.4L916 611.4L897.4 621.8L894.9 624.2Z"/>
<path class="s2 k" fill="#3f3f3f" d="M887.5 631.3L894.9 624.2L888.6 626.4L878.7 631.6L868.9 641.1Z"/>
<path class="s3 k" fill="#614900" d="M894.9 624.2L897.4 621.8L888.6 626.4Z"/>
<path class="s2 k" fill="#3f3f3f" d="M868.9 641.1L878.7 631.6L859.9 640.8L850.2 650.3Z"/>
<path class="s2 k" fill="#3f3f3f" d="M850.2 650.3L859.9 640.8L841 649.4L831.4 658.9Z"/>
<path class="s2 k" fill="#3f3f3f" d="M831.4 658.9L841 649.4L821.9 657.5L812.4 666.9Z"/>
<path class="s1 k" fill="#5a3013" d="M794.9 672.8L793.4 674.3L802.3 670.8Z"/>
<path class="s2 k" fill="#3f3f3f" d="M812.4 666.9L821.9 657.5L802.7 664.9L794.9 672.8L802.3 670.8Z"/>
<path class="s1 k" fill="#5a3013" d="M793.4 674.3L794.9 672.8L778.5 676.7L774.2 681.1Z"/>
<path class="s2 k" fill="#3f3f3f" d="M794.9 672.8L802.7 664.9L783.5 671.7L778.5 676.7Z"/>
<path class="s1 k" fill="#5a3013" d="M774.2 681.1L778.5 676.7L761.5 680.5L754.9 687.3Z"/>
<path class="s2 k" fill="#3f3f3f" d="M778.5 676.7L783.5 671.7L764.1 677.9L761.5 680.5Z"/>
<path class="s1 k" fill="#5a3013" d="M754.9 687.3L761.5 680.5L743.9 684.1L735.5 692.8Z"/>
<path class="s2 k" fill="#3f3f3f" d="M761.5 680.5L764.1 677.9L744.5 683.5L743.9 684.1Z"/>
<path class="s1 k" fill="#5a3013" d="M735.5 692.8L743.9 684.1L736.6 685.5L724.8 688.5L715.9 697.8Z"/>
<path class="s2 k" fill="#3f3f3f" d="M743.9 684.1L744.5 683.5L736.6 685.5Z"/>
<path class="s1 k" fill="#5a3013" d="M715.9 697.8L724.8 688.5L705 692.8L696.2 702.1Z"/>
<path class="s1 k" fill="#5a3013" d="M696.2 702.1L705 692.8L685 696.5L676.3 705.8Z"/>
<path class="s1 k" fill="#5a3013" d="M676.3 705.8L685 696.5L664.9 699.6L656.3 708.9Z"/>
<path class="s1 k" fill="#5a3013" d="M656.3 708.9L664.9 699.6L644.6 702L636.1 711.4Z"/>
<path class="s1 k" fill="#5a3013" d="M636.1 711.4L644.6 702L624.2 703.8L615.8 713.2Z"/>
<path class="s1 k" fill="#5a3013" d="M615.8 713.2L624.2 703.8L603.6 704.9L595.3 714.3Z"/>
<path class="s1 k" fill="#5a3013" d="M595.3 714.3L603.6 704.9L591.1 705.2L582.2 706L574.7 714.8Z"/>
<path class="s2 k" fill="#3f3f3f" d="M591.1 705.2L582.8 705.3L582.2 706Z"/>
<path class="s1 k" fill="#5a3013" d="M574.7 714.8L582.2 706L559.6 707.7L553.8 714.6Z"/>
<path class="s2 k" fill="#3f3f3f" d="M582.2 706L582.8 705.3L561.8 705.1L559.6 707.7Z"/>
<path class="s1 k" fill="#5a3013" d="M553.8 714.6L559.6 707.7L536.5 709.3L532.8 713.7Z"/>
<path class="s2 k" fill="#3f3f3f" d="M559.6 707.7L561.8 705.1L540.7 704.2L536.5 709.3Z"/>
<path class="s1 k" fill="#5a3013" d="M532.8 713.7L536.5 709.3L512.8 710.7L511.6 712.2Z"/>
<path class="s2 k" fill="#3f3f3f" d="M536.5 709.3L540.7 704.2L519.3 702.6L512.8 710.7Z"/>
<path class="s1 k" fill="#5a3013" d="M511.6 712.2L512.8 710.7L501.6 711.2Z"/>
<path class="s2 k" fill="#3f3f3f" d="M512.8 710.7L519.3 702.6L497.8 700.4L490.2 710L501.6 711.2Z"/>
<path class="s2 k" fill="#3f3f3f" d="M490.2 710L497.8 700.4L476.1 697.4L468.6 707.1Z"/>
<path class="s2 k" fill="#3f3f3f" d="M468.6 707.1L476.1 697.4L454.1 693.7L446.8 703.4Z"/>
<path class="s2 k" fill="#3f3f3f" d="M446.8 703.4L454.1 693.7L432 689.3L424.7 699.1Z"/>
<path class="s2 k" fill="#3f3f3f" d="M424.7 699.1L432 689.3L420.1 686.5L407.8 686.6L402.5 694Z"/>
<path class="s3 k" fill="#614900" d="M420.1 686.5L409.6 684.1L407.8 686.6Z"/>
<path class="s2 k" fill="#3f3f3f" d="M402.5 694L407.8 686.6L381.2 686.6L380 688.2Z"/>
<path class="s3 k" fill="#614900" d="M407.8 686.6L409.6 684.1L387 678.2L381.2 686.6Z"/>
<path class="s2 k" fill="#3f3f3f" d="M380 688.2L381.2 686.6L374.2 686.5Z"/>
<path class="s3 k" fill="#614900" d="M381.2 686.6L387 678.2L364.1 671.6L357.3 681.7L374.2 686.5Z"/>
<path class="s3 k" fill="#614900" d="M357.3 681.7L364.1 671.6L341 664.2L334.4 674.4Z"/>
<path class="s3 k" fill="#614900" d="M334.4 674.4L341 664.2L319.8 656.7L317.3 656.7L311.2 666.3Z"/>
<path class="s4 k" fill="#233b51" d="M319.8 656.7L317.7 656L317.3 656.7Z"/>
<path class="s6" fill="#444d65" d="M1114.9 458.5L1125.2 449.6L1124.9 449.9L1108.3 465.6L1097.2 475.3Z"/>
<path class="s7" fill="#724f41" d="M1125.2 449.6L1126.1 448.8L1124.9 449.9Z"/>
<path class="s5" fill="#304a1e" d="M1081.9 489.3L1079.4 491.5L1083 488.2Z"/>
<path class="s6" fill="#454e66" d="M1097.2 475.3L1108.3 465.6L1090.4 481.9L1081.9 489.3L1083 488.2Z"/>
<path class="s5" fill="#314b1f" d="M1079.4 491.5L1081.9 489.3L1077.4 493.3L1072.5 497.6L1061.6 507.1Z"/>
<path class="s6" fill="#464e67" d="M1081.9 489.3L1090.4 481.9L1077.4 493.3Z"/>
<path class="s5 k" fill="#2b421b" d="M1061.6 507.1L1072.5 497.6L1054.5 512.8L1043.7 522.2Z"/>
<path class="s4 k" fill="#233b51" d="M1028.9 533.8L1025.7 536.6L1031.3 532.1Z"/>
<path class="s5 k" fill="#2b421b" d="M1043.7 522.2L1054.5 512.8L1036.4 527.3L1028.9 533.8L1031.3 532.1Z"/>
<path class="s4 k" fill="#233b51" d="M1025.7 536.6L1028.9 533.8L1022.6 538L1018.2 541.3L1007.6 550.5Z"/>
<path class="s5 k" fill="#2b421b" d="M1028.9 533.8L1036.4 527.3L1022.6 538Z"/>
<path class="s4 k" fill="#233b51" d="M1007.6 550.5L1018.2 541.3L1000 554.7L989.5 563.9Z"/>
<path class="s4 k" fill="#233b51" d="M989.5 563.9L1000 554.7L981.7 567.5L971.2 576.6Z"/>
<path class="s3 k" fill="#614900" d="M960.1 582.5L952.9 588.8L969.6 577.7Z"/>
<path class="s4 k" fill="#233b51" d="M971.2 576.6L981.7 567.5L963.2 579.7L960.1 582.5L969.6 577.7Z"/>
<path class="s3 k" fill="#614900" d="M952.9 588.8L960.1 582.5L955.5 584.6L944.7 591.3L934.5 600.4Z"/>
<path class="s4 k" fill="#233b51" d="M960.1 582.5L963.2 579.7L955.5 584.6Z"/>
<path class="s3 k" fill="#614900" d="M934.5 600.4L944.7 591.3L926.1 602.4L916 611.4Z"/>
<path class="s3 k" fill="#614900" d="M916 611.4L926.1 602.4L907.4 612.9L897.4 621.8Z"/>
<path class="s2 k" fill="#3f3f3f" d="M881.7 628.9L878.7 631.6L888.6 626.4Z"/>
<path class="s3 k" fill="#614900" d="M897.4 621.8L907.4 612.9L888.6 622.7L881.7 628.9L888.6 626.4Z"/>
<path class="s2 k" fill="#3f3f3f" d="M878.7 631.6L881.7 628.9L867.9 633.6L859.9 640.8Z"/>
<path class="s3 k" fill="#614900" d="M881.7 628.9L888.6 622.7L869.7 632L867.9 633.6Z"/>
<path class="s2 k" fill="#3f3f3f" d="M859.9 640.8L867.9 633.6L862.5 635.3L850.7 640.6L841 649.4Z"/>
<path class="s3 k" fill="#614900" d="M867.9 633.6L869.7 632L862.5 635.3Z"/>
<path class="s2 k" fill="#3f3f3f" d="M841 649.4L850.7 640.6L831.5 648.7L821.9 657.5Z"/>
<path class="s2 k" fill="#3f3f3f" d="M821.9 657.5L831.5 648.7L812.3 656.2L802.7 664.9Z"/>
<path class="s2 k" fill="#3f3f3f" d="M802.7 664.9L812.3 656.2L792.9 663L783.5 671.7Z"/>
<path class="s2 k" fill="#3f3f3f" d="M783.5 671.7L792.9 663L773.3 669.2L764.1 677.9Z"/>
<path class="s2 k" fill="#3f3f3f" d="M764.1 677.9L773.3 669.2L753.7 674.8L744.5 683.5Z"/>
<path class="s1 k" fill="#5a3013" d="M725.8 687.6L724.8 688.5L736.6 685.5Z"/>
<path class="s2 k" fill="#3f3f3f" d="M744.5 683.5L753.7 674.8L733.9 679.8L725.8 687.6L736.6 685.5Z"/>
<path class="s1 k" fill="#5a3013" d="M724.8 688.5L725.8 687.6L707 690.8L705 692.8Z"/>
<path class="s2 k" fill="#3f3f3f" d="M725.8 687.6L733.9 679.8L714 684.1L707 690.8Z"/>
<path class="s1 k" fill="#5a3013" d="M705 692.8L707 690.8L687.7 693.9L685 696.5Z"/>
<path class="s2 k" fill="#3f3f3f" d="M707 690.8L714 684.1L693.9 687.8L687.7 693.9Z"/>
<path class="s1 k" fill="#5a3013" d="M685 696.5L687.7 693.9L667.7 696.8L664.9 699.6Z"/>
<path class="s2 k" fill="#3f3f3f" d="M687.7 693.9L693.9 687.8L673.6 690.9L667.7 696.8Z"/>
<path class="s1 k" fill="#5a3013" d="M664.9 699.6L667.7 696.8L647.2 699.4L644.6 702Z"/>
<path class="s2 k" fill="#3f3f3f" d="M667.7 696.8L673.6 690.9L653.2 693.3L647.2 699.4Z"/>
<path class="s1 k" fill="#5a3013" d="M644.6 702L647.2 699.4L626.1 701.8L624.2 703.8Z"/>
<path class="s2 k" fill="#3f3f3f" d="M647.2 699.4L653.2 693.3L632.7 695.1L626.1 701.8Z"/>
<path class="s1 k" fill="#5a3013" d="M624.2 703.8L626.1 701.8L604.4 704L603.6 704.9Z"/>
<path class="s2 k" fill="#3f3f3f" d="M626.1 701.8L632.7 695.1L611.9 696.1L604.4 704Z"/>
<path class="s1 k" fill="#5a3013" d="M603.6 704.9L604.4 704L591.1 705.2Z"/>
<path class="s2 k" fill="#3f3f3f" d="M604.4 704L611.9 696.1L591 696.6L582.8 705.3L591.1 705.2Z"/>
<path class="s2 k" fill="#3f3f3f" d="M582.8 705.3L591 696.6L570 696.3L561.8 705.1Z"/>
<path class="s2 k" fill="#3f3f3f" d="M561.8 705.1L570 696.3L548.7 695.4L540.7 704.2Z"/>
<path class="s2 k" fill="#3f3f3f" d="M540.7 704.2L548.7 695.4L527.2 693.8L519.3 702.6Z"/>
<path class="s2 k" fill="#3f3f3f" d="M519.3 702.6L527.2 693.8L505.6 691.4L497.8 700.4Z"/>
<path class="s2 k" fill="#3f3f3f" d="M497.8 700.4L505.6 691.4L483.7 688.4L476.1 697.4Z"/>
<path class="s2 k" fill="#3f3f3f" d="M476.1 697.4L483.7 688.4L470 686L460.3 686.2L454.1 693.7Z"/>
<path class="s3 k" fill="#614900" d="M470 686L461.6 684.6L460.3 686.2Z"/>
<path class="s2 k" fill="#3f3f3f" d="M454.1 693.7L460.3 686.2L434.2 686.5L432 689.3Z"/>
<path class="s3 k" fill="#614900" d="M460.3 686.2L461.6 684.6L439.3 680.1L434.2 686.5Z"/>
<path class="s2 k" fill="#3f3f3f" d="M432 689.3L434.2 686.5L420.1 686.5Z"/>
<path class="s3 k" fill="#614900" d="M434.2 686.5L439.3 680.1L416.8 674.9L409.6 684.1L420.1 686.5Z"/>
<path class="s3 k" fill="#614900" d="M409.6 684.1L416.8 674.9L394.1 668.9L387 678.2Z"/>
<path class="s3 k" fill="#614900" d="M387 678.2L394.1 668.9L371.1 662.2L364.1 671.6Z"/>
<path class="s3 k" fill="#614900" d="M364.1 671.6L371.1 662.2L357.6 657.8L345.8 657.6L341 664.2Z"/>
<path class="s4 k" fill="#233b51" d="M357.6 657.8L347.8 654.7L345.8 657.6Z"/>
<path class="s3 k" fill="#614900" d="M341 664.2L345.8 657.6L319.8 656.7Z"/>
<path class="s4 k" fill="#233b51" d="M345.8 657.6L347.8 654.7L324.3 646.4L317.7 656L319.8 656.7Z"/>
<path class="s6" fill="#464f68" d="M1121.8 454.5L1119.6 456.6L1108.3 465.6L1124.9 449.9Z"/>
<path class="s7" fill="#755142" d="M1126.1 448.8L1137.5 439.6L1121.8 454.5L1124.9 449.9Z"/>
<path class="s6" fill="#475069" d="M1108.3 465.6L1119.6 456.6L1101.6 473L1090.4 481.9Z"/>
<path class="s5" fill="#324d20" d="M1075.9 494.9L1072.5 497.6L1077.4 493.3Z"/>
<path class="s6" fill="#48506a" d="M1090.4 481.9L1101.6 473L1083.6 488.8L1075.9 494.9L1077.4 493.3Z"/>
<path class="s5" fill="#324e20" d="M1072.5 497.6L1075.9 494.9L1072 498.5L1065.4 504L1054.5 512.8Z"/>
<path class="s6" fill="#48516b" d="M1075.9 494.9L1083.6 488.8L1072 498.5Z"/>
<path class="s5" fill="#334f20" d="M1054.5 512.8L1065.4 504L1047.3 518.6L1036.4 527.3Z"/>
<path class="s4 k" fill="#233b51" d="M1020.7 539.3L1018.2 541.3L1022.6 538Z"/>
<path class="s5 k" fill="#2b421b" d="M1036.4 527.3L1047.3 518.6L1029 532.7L1020.7 539.3L1022.6 538Z"/>
<path class="s4 k" fill="#233b51" d="M1018.2 541.3L1020.7 539.3L1013.7 543.9L1010.7 546.1L1000 554.7Z"/>
<path class="s5 k" fill="#2b421b" d="M1020.7 539.3L1029 532.7L1013.7 543.9Z"/>
<path class="s4 k" fill="#233b51" d="M1000 554.7L1010.7 546.1L992.2 559L981.7 567.5Z"/>
<path class="s4 k" fill="#233b51" d="M981.7 567.5L992.2 559L973.7 571.3L963.2 579.7Z"/>
<path class="s3 k" fill="#614900" d="M949.3 587.7L944.7 591.3L955.5 584.6Z"/>
<path class="s4 k" fill="#233b51" d="M963.2 579.7L973.7 571.3L955.1 583L949.3 587.7L955.5 584.6Z"/>
<path class="s3 k" fill="#614900" d="M944.7 591.3L949.3 587.7L940.4 591.7L936.4 594.1L926.1 602.4Z"/>
<path class="s4 k" fill="#233b51" d="M949.3 587.7L955.1 583L940.4 591.7Z"/>
<path class="s3 k" fill="#614900" d="M926.1 602.4L936.4 594.1L917.6 604.6L907.4 612.9Z"/>
<path class="s3 k" fill="#614900" d="M907.4 612.9L917.6 604.6L898.7 614.5L888.6 622.7Z"/>
<path class="s3 k" fill="#614900" d="M888.6 622.7L898.7 614.5L879.7 623.8L869.7 632Z"/>
<path class="s2 k" fill="#3f3f3f" d="M853.7 638.1L850.7 640.6L862.5 635.3Z"/>
<path class="s3 k" fill="#614900" d="M869.7 632L879.7 623.8L860.5 632.5L853.7 638.1L862.5 635.3Z"/>
<path class="s2 k" fill="#3f3f3f" d="M850.7 640.6L853.7 638.1L838.9 642.6L831.5 648.7Z"/>
<path class="s3 k" fill="#614900" d="M853.7 638.1L860.5 632.5L841.3 640.6L838.9 642.6Z"/>
<path class="s2 k" fill="#3f3f3f" d="M831.5 648.7L838.9 642.6L829.4 645.2L821.9 648.1L812.3 656.2Z"/>
<path class="s3 k" fill="#614900" d="M838.9 642.6L841.3 640.6L829.4 645.2Z"/>
<path class="s2 k" fill="#3f3f3f" d="M812.3 656.2L821.9 648.1L802.4 655L792.9 663Z"/>
<path class="s2 k" fill="#3f3f3f" d="M792.9 663L802.4 655L782.8 661.2L773.3 669.2Z"/>
<path class="s2 k" fill="#3f3f3f" d="M773.3 669.2L782.8 661.2L763 666.8L753.7 674.8Z"/>
<path class="s2 k" fill="#3f3f3f" d="M753.7 674.8L763 666.8L743.1 671.8L733.9 679.8Z"/>
<path class="s2 k" fill="#3f3f3f" d="M733.9 679.8L743.1 671.8L723.1 676.1L714 684.1Z"/>
<path class="s2 k" fill="#3f3f3f" d="M714 684.1L723.1 676.1L702.9 679.8L693.9 687.8Z"/>
<path class="s2 k" fill="#3f3f3f" d="M693.9 687.8L702.9 679.8L682.5 682.9L673.6 690.9Z"/>
<path class="s2 k" fill="#3f3f3f" d="M673.6 690.9L682.5 682.9L662 685.3L653.2 693.3Z"/>
<path class="s2 k" fill="#3f3f3f" d="M653.2 693.3L662 685.3L641.3 687L632.7 695.1Z"/>
<path class="s2 k" fill="#3f3f3f" d="M632.7 695.1L641.3 687L620.5 688.1L611.9 696.1Z"/>
<path class="s2 k" fill="#3f3f3f" d="M611.9 696.1L620.5 688.1L599.4 688.5L591 696.6Z"/>
<path class="s2 k" fill="#3f3f3f" d="M591 696.6L599.4 688.5L578.2 688.2L570 696.3Z"/>
<path class="s2 k" fill="#3f3f3f" d="M570 696.3L578.2 688.2L556.8 687.2L548.7 695.4Z"/>
<path class="s2 k" fill="#3f3f3f" d="M548.7 695.4L556.8 687.2L535.3 685.6L527.2 693.8Z"/>
<path class="s2 k" fill="#3f3f3f" d="M527.2 693.8L535.3 685.6L526.9 684.6L511.5 685.2L505.6 691.4Z"/>
<path class="s3 k" fill="#614900" d="M526.9 684.6L513.5 683.2L511.5 685.2Z"/>
<path class="s2 k" fill="#3f3f3f" d="M505.6 691.4L511.5 685.2L486.1 685.8L483.7 688.4Z"/>
<path class="s3 k" fill="#614900" d="M511.5 685.2L513.5 683.2L491.5 680.1L486.1 685.8Z"/>
<path class="s2 k" fill="#3f3f3f" d="M483.7 688.4L486.1 685.8L470 686Z"/>
<path class="s3 k" fill="#614900" d="M486.1 685.8L491.5 680.1L469.3 676.3L461.6 684.6L470 686Z"/>
<path class="s3 k" fill="#614900" d="M461.6 684.6L469.3 676.3L446.8 671.7L439.3 680.1Z"/>
<path class="s3 k" fill="#614900" d="M439.3 680.1L446.8 671.7L424.2 666.4L416.8 674.9Z"/>
<path class="s3 k" fill="#614900" d="M416.8 674.9L424.2 666.4L401.3 660.3L394.1 668.9Z"/>
<path class="s3 k" fill="#614900" d="M394.1 668.9L401.3 660.3L396.3 658.9L374.2 658.4L371.1 662.2Z"/>
<path class="s4 k" fill="#233b51" d="M396.3 658.9L378.2 653.5L374.2 658.4Z"/>
<path class="s3 k" fill="#614900" d="M371.1 662.2L374.2 658.4L357.6 657.8Z"/>
<path class="s4 k" fill="#233b51" d="M374.2 658.4L378.2 653.5L354.8 645.9L347.8 654.7L357.6 657.8Z"/>
<path class="s4 k" fill="#233b51" d="M347.8 654.7L354.8 645.9L331.2 637.5L324.3 646.4Z"/>
<path class="s6" fill="#48516a" d="M1121.4 455.2L1119.6 456.6L1121.8 454.5Z"/>
<path class="s7" fill="#785344" d="M1137.5 439.6L1149 431.2L1131 448.2L1121.4 455.2L1121.8 454.5Z"/>
<path class="s6" fill="#49526b" d="M1119.6 456.6L1121.4 455.2L1119 459.1L1112.9 464.7L1101.6 473Z"/>
<path class="s7" fill="#795444" d="M1121.4 455.2L1131 448.2L1119 459.1Z"/>
<path class="s6" fill="#49526c" d="M1101.6 473L1112.9 464.7L1094.8 480.6L1083.6 488.8Z"/>
<path class="s5" fill="#345021" d="M1070 500.6L1065.4 504L1072 498.5Z"/>
<path class="s6" fill="#4a536d" d="M1083.6 488.8L1094.8 480.6L1076.6 495.9L1070 500.6L1072 498.5Z"/>
<path class="s5" fill="#345021" d="M1065.4 504L1070 500.6L1066.8 503.7L1058.3 510.6L1047.3 518.6Z"/>
<path class="s6" fill="#4b546f" d="M1070 500.6L1076.6 495.9L1066.8 503.7Z"/>
<path class="s5" fill="#355121" d="M1047.3 518.6L1058.3 510.6L1039.9 524.7L1029 532.7Z"/>
<path class="s4" fill="#2b4a65" d="M1012.4 544.9L1010.7 546.1L1013.7 543.9Z"/>
<path class="s5" fill="#355222" d="M1029 532.7L1039.9 524.7L1021.5 538.3L1012.4 544.9L1013.7 543.9Z"/>
<path class="s4 k" fill="#233b51" d="M1010.7 546.1L1012.4 544.9L1004.7 549.9L1002.9 551.2L992.2 559Z"/>
<path class="s5 k" fill="#2b421b" d="M1012.4 544.9L1021.5 538.3L1004.7 549.9Z"/>
<path class="s4 k" fill="#233b51" d="M992.2 559L1002.9 551.2L984.3 563.6L973.7 571.3Z"/>
<path class="s4 k" fill="#233b51" d="M973.7 571.3L984.3 563.6L965.6 575.3L955.1 583Z"/>
<path class="s3 k" fill="#614900" d="M938.1 592.9L936.4 594.1L940.4 591.7Z"/>
<path class="s4 k" fill="#233b51" d="M955.1 583L965.6 575.3L946.8 586.5L938.1 592.9L940.4 591.7Z"/>
<path class="s3 k" fill="#614900" d="M936.4 594.1L938.1 592.9L926.5 598.1L917.6 604.6Z"/>
<path class="s4 k" fill="#233b51" d="M938.1 592.9L946.8 586.5L927.9 597L926.5 598.1Z"/>
<path class="s3 k" fill="#614900" d="M917.6 604.6L926.5 598.1L923.9 599.1L908.9 607L898.7 614.5Z"/>
<path class="s4 k" fill="#233b51" d="M926.5 598.1L927.9 597L923.9 599.1Z"/>
<path class="s3 k" fill="#614900" d="M898.7 614.5L908.9 607L889.8 616.3L879.7 623.8Z"/>
<path class="s3 k" fill="#614900" d="M879.7 623.8L889.8 616.3L870.5 625.1L860.5 632.5Z"/>
<path class="s3 k" fill="#614900" d="M860.5 632.5L870.5 625.1L851.2 633.2L841.3 640.6Z"/>
<path class="s2 k" fill="#3f3f3f" d="M823.5 646.9L821.9 648.1L829.4 645.2Z"/>
<path class="s3 k" fill="#614900" d="M841.3 640.6L851.2 633.2L831.7 640.7L823.5 646.9L829.4 645.2Z"/>
<path class="s2 k" fill="#3f3f3f" d="M821.9 648.1L823.5 646.9L807.5 651.1L802.4 655Z"/>
<path class="s3 k" fill="#614900" d="M823.5 646.9L831.7 640.7L812.1 647.6L807.5 651.1Z"/>
<path class="s2 k" fill="#3f3f3f" d="M802.4 655L807.5 651.1L790.8 655.1L782.8 661.2Z"/>
<path class="s3 k" fill="#614900" d="M807.5 651.1L812.1 647.6L792.4 653.9L790.8 655.1Z"/>
<path class="s2 k" fill="#3f3f3f" d="M782.8 661.2L790.8 655.1L779.6 657.5L772.5 659.5L763 666.8Z"/>
<path class="s3 k" fill="#614900" d="M790.8 655.1L792.4 653.9L779.6 657.5Z"/>
<path class="s2 k" fill="#3f3f3f" d="M763 666.8L772.5 659.5L752.5 664.5L743.1 671.8Z"/>
<path class="s2 k" fill="#3f3f3f" d="M743.1 671.8L752.5 664.5L732.3 668.8L723.1 676.1Z"/>
<path class="s2 k" fill="#3f3f3f" d="M723.1 676.1L732.3 668.8L712 672.5L702.9 679.8Z"/>
<path class="s2 k" fill="#3f3f3f" d="M702.9 679.8L712 672.5L691.5 675.6L682.5 682.9Z"/>
<path class="s2 k" fill="#3f3f3f" d="M682.5 682.9L691.5 675.6L670.9 678L662 685.3Z"/>
<path class="s2 k" fill="#3f3f3f" d="M662 685.3L670.9 678L650.1 679.7L641.3 687Z"/>
<path class="s2 k" fill="#3f3f3f" d="M641.3 687L650.1 679.7L629.1 680.8L620.5 688.1Z"/>
<path class="s2 k" fill="#3f3f3f" d="M620.5 688.1L629.1 680.8L608 681.1L599.4 688.5Z"/>
<path class="s2 k" fill="#3f3f3f" d="M599.4 688.5L608 681.1L600.4 681L585.3 682L578.2 688.2Z"/>
<path class="s3 k" fill="#614900" d="M600.4 681L586.7 680.8L585.3 682Z"/>
<path class="s2 k" fill="#3f3f3f" d="M578.2 688.2L585.3 682L561.2 683.3L556.8 687.2Z"/>
<path class="s3 k" fill="#614900" d="M585.3 682L586.7 680.8L565.2 679.8L561.2 683.3Z"/>
<path class="s2 k" fill="#3f3f3f" d="M556.8 687.2L561.2 683.3L536.6 684.3L535.3 685.6Z"/>
<path class="s3 k" fill="#614900" d="M561.2 683.3L565.2 679.8L543.4 678.1L536.6 684.3Z"/>
<path class="s2 k" fill="#3f3f3f" d="M535.3 685.6L536.6 684.3L526.9 684.6Z"/>
<path class="s3 k" fill="#614900" d="M536.6 684.3L543.4 678.1L521.5 675.7L513.5 683.2L526.9 684.6Z"/>
<path class="s3 k" fill="#614900" d="M513.5 683.2L521.5 675.7L499.4 672.5L491.5 680.1Z"/>
<path class="s3 k" fill="#614900" d="M491.5 680.1L499.4 672.5L477.1 668.6L469.3 676.3Z"/>
<path class="s3 k" fill="#614900" d="M469.3 676.3L477.1 668.6L454.5 664L446.8 671.7Z"/>
<path class="s3 k" fill="#614900" d="M446.8 671.7L454.5 664L436.5 659.7L430.7 659.7L424.2 666.4Z"/>
<path class="s4 k" fill="#233b51" d="M436.5 659.7L431.7 658.6L430.7 659.7Z"/>
<path class="s3 k" fill="#614900" d="M424.2 666.4L430.7 659.7L402.5 659.1L401.3 660.3Z"/>
<path class="s4 k" fill="#233b51" d="M430.7 659.7L431.7 658.6L408.7 652.5L402.5 659.1Z"/>
<path class="s3 k" fill="#614900" d="M401.3 660.3L402.5 659.1L396.3 658.9Z"/>
<path class="s4 k" fill="#233b51" d="M402.5 659.1L408.7 652.5L385.4 645.6L378.2 653.5L396.3 658.9Z"/>
<path class="s4 k" fill="#233b51" d="M378.2 653.5L385.4 645.6L361.9 637.9L354.8 645.9Z"/>
<path class="s4 k" fill="#233b51" d="M354.8 645.9L361.9 637.9L338.1 629.4L331.2 637.5Z"/>
<path class="s7" fill="#7a5545" d="M1149 431.2L1160.6 423.4L1142.5 440.5L1131 448.2Z"/>
<path class="s6" fill="#4a546e" d="M1118.1 461.2L1112.9 464.7L1119 459.1Z"/>
<path class="s7" fill="#7c5646" d="M1131 448.2L1142.5 440.5L1124.3 457.1L1118.1 461.2L1119 459.1Z"/>
<path class="s6" fill="#4b546f" d="M1112.9 464.7L1118.1 461.2L1116.7 463.8L1106.1 473.1L1094.8 480.6Z"/>
<path class="s7" fill="#7d5747" d="M1118.1 461.2L1124.3 457.1L1116.7 463.8Z"/>
<path class="s6" fill="#4c5570" d="M1094.8 480.6L1106.1 473.1L1087.8 488.4L1076.6 495.9Z"/>
<path class="s5" fill="#355222" d="M1064.4 506.6L1058.3 510.6L1066.8 503.7Z"/>
<path class="s6" fill="#4d5671" d="M1076.6 495.9L1087.8 488.4L1069.4 503.2L1064.4 506.6L1066.8 503.7Z"/>
<path class="s5" fill="#365322" d="M1058.3 510.6L1064.4 506.6L1062 509L1051 517.4L1039.9 524.7Z"/>
<path class="s6" fill="#4e5773" d="M1064.4 506.6L1069.4 503.2L1062 509Z"/>
<path class="s5" fill="#375423" d="M1039.9 524.7L1051 517.4L1032.4 531.1L1021.5 538.3Z"/>
<path class="s4" fill="#2d4c69" d="M1004 550.5L1002.9 551.2L1004.7 549.9Z"/>
<path class="s5" fill="#375523" d="M1021.5 538.3L1032.4 531.1L1013.8 544.1L1004 550.5L1004.7 549.9Z"/>
<path class="s4" fill="#2d4d6a" d="M1002.9 551.2L1004 550.5L995.7 556.1L995.1 556.5L984.3 563.6Z"/>
<path class="s5" fill="#385623" d="M1004 550.5L1013.8 544.1L995.7 556.1Z"/>
<path class="s4 k" fill="#233b51" d="M984.3 563.6L995.1 556.5L976.3 568.3L965.6 575.3Z"/>
<path class="s4 k" fill="#233b51" d="M965.6 575.3L976.3 568.3L957.4 579.5L946.8 586.5Z"/>
<path class="s4 k" fill="#233b51" d="M946.8 586.5L957.4 579.5L938.4 590.1L927.9 597Z"/>
<path class="s3 k" fill="#614900" d="M914.6 603.3L908.9 607L923.9 599.1Z"/>
<path class="s4 k" fill="#233b51" d="M927.9 597L938.4 590.1L919.2 600.2L914.6 603.3L923.9 599.1Z"/>
<path class="s3 k" fill="#614900" d="M908.9 607L914.6 603.3L905.5 606.9L900 609.5L889.8 616.3Z"/>
<path class="s4 k" fill="#233b51" d="M914.6 603.3L919.2 600.2L905.5 606.9Z"/>
<path class="s3 k" fill="#614900" d="M889.8 616.3L900 609.5L880.7 618.3L870.5 625.1Z"/>
<path class="s3 k" fill="#614900" d="M870.5 625.1L880.7 618.3L861.2 626.5L851.2 633.2Z"/>
<path class="s3 k" fill="#614900" d="M851.2 633.2L861.2 626.5L841.6 634L831.7 640.7Z"/>
<path class="s3 k" fill="#614900" d="M831.7 640.7L841.6 634L821.9 640.9L812.1 647.6Z"/>
<path class="s3 k" fill="#614900" d="M812.1 647.6L821.9 640.9L802.1 647.2L792.4 653.9Z"/>
<path class="s2 k" fill="#3f3f3f" d="M773.4 658.9L772.5 659.5L779.6 657.5Z"/>
<path class="s3 k" fill="#614900" d="M792.4 653.9L802.1 647.2L782.1 652.9L773.4 658.9L779.6 657.5Z"/>
<path class="s2 k" fill="#3f3f3f" d="M772.5 659.5L773.4 658.9L755.4 662.5L752.5 664.5Z"/>
<path class="s3 k" fill="#614900" d="M773.4 658.9L782.1 652.9L762 657.9L755.4 662.5Z"/>
<path class="s2 k" fill="#3f3f3f" d="M752.5 664.5L755.4 662.5L736.6 665.8L732.3 668.8Z"/>
<path class="s3 k" fill="#614900" d="M755.4 662.5L762 657.9L741.7 662.2L736.6 665.8Z"/>
<path class="s2 k" fill="#3f3f3f" d="M732.3 668.8L736.6 665.8L717.1 668.9L712 672.5Z"/>
<path class="s3 k" fill="#614900" d="M736.6 665.8L741.7 662.2L721.3 666L717.1 668.9Z"/>
<path class="s2 k" fill="#3f3f3f" d="M712 672.5L717.1 668.9L696.8 671.8L691.5 675.6Z"/>
<path class="s3 k" fill="#614900" d="M717.1 668.9L721.3 666L700.7 669L696.8 671.8Z"/>
<path class="s2 k" fill="#3f3f3f" d="M691.5 675.6L696.8 671.8L675.9 674.4L670.9 678Z"/>
<path class="s3 k" fill="#614900" d="M696.8 671.8L700.7 669L680 671.4L675.9 674.4Z"/>
<path class="s2 k" fill="#3f3f3f" d="M670.9 678L675.9 674.4L654.2 676.7L650.1 679.7Z"/>
<path class="s3 k" fill="#614900" d="M675.9 674.4L680 671.4L659.1 673.1L654.2 676.7Z"/>
<path class="s2 k" fill="#3f3f3f" d="M650.1 679.7L654.2 676.7L631.8 678.7L629.1 680.8Z"/>
<path class="s3 k" fill="#614900" d="M654.2 676.7L659.1 673.1L638 674.1L631.8 678.7Z"/>
<path class="s2 k" fill="#3f3f3f" d="M629.1 680.8L631.8 678.7L608.8 680.5L608 681.1Z"/>
<path class="s3 k" fill="#614900" d="M631.8 678.7L638 674.1L616.7 674.5L608.8 680.5Z"/>
<path class="s2 k" fill="#3f3f3f" d="M608 681.1L608.8 680.5L600.4 681Z"/>
<path class="s3 k" fill="#614900" d="M608.8 680.5L616.7 674.5L595.3 674.1L586.7 680.8L600.4 681Z"/>
<path class="s3 k" fill="#614900" d="M586.7 680.8L595.3 674.1L573.6 673.1L565.2 679.8Z"/>
<path class="s3 k" fill="#614900" d="M565.2 679.8L573.6 673.1L551.8 671.3L543.4 678.1Z"/>
<path class="s3 k" fill="#614900" d="M543.4 678.1L551.8 671.3L529.7 668.9L521.5 675.7Z"/>
<path class="s3 k" fill="#614900" d="M521.5 675.7L529.7 668.9L507.5 665.7L499.4 672.5Z"/>
<path class="s3 k" fill="#614900" d="M499.4 672.5L507.5 665.7L485 661.7L477.1 668.6Z"/>
<path class="s3 k" fill="#614900" d="M477.1 668.6L485 661.7L478.6 660.4L458.8 660.2L454.5 664Z"/>
<path class="s4 k" fill="#233b51" d="M478.6 660.4L462.3 657L458.8 660.2Z"/>
<path class="s3 k" fill="#614900" d="M454.5 664L458.8 660.2L436.5 659.7Z"/>
<path class="s4 k" fill="#233b51" d="M458.8 660.2L462.3 657L439.4 651.6L431.7 658.6L436.5 659.7Z"/>
<path class="s4 k" fill="#233b51" d="M431.7 658.6L439.4 651.6L416.2 645.4L408.7 652.5Z"/>
<path class="s4 k" fill="#233b51" d="M408.7 652.5L416.2 645.4L392.8 638.4L385.4 645.6Z"/>
<path class="s4 k" fill="#233b51" d="M385.4 645.6L392.8 638.4L369.2 630.6L361.9 637.9Z"/>
<path class="s4 k" fill="#233b51" d="M361.9 637.9L369.2 630.6L368.4 630.3L338.8 628.7L338.1 629.4Z"/>
<path class="s5 k" fill="#2b421b" d="M368.4 630.3L345.2 622L338.8 628.7Z"/>
<path class="s7" fill="#7d5747" d="M1160.6 423.4L1164.4 421.1L1164.4 423.9L1154.2 433.5L1142.5 440.5Z"/>
<path class="s8" fill="#666666" d="M1164.4 421.1L1172.4 416.3L1164.4 423.9Z"/>
<path class="s7" fill="#7f5848" d="M1142.5 440.5L1154.2 433.5L1135.9 450.2L1124.3 457.1Z"/>
<path class="s6" fill="#4d5772" d="M1115.4 467.5L1106.1 473.1L1116.7 463.8Z"/>
<path class="s7" fill="#805949" d="M1124.3 457.1L1135.9 450.2L1117.6 466.2L1115.4 467.5L1116.7 463.8Z"/>
<path class="s6" fill="#4e5773" d="M1106.1 473.1L1115.4 467.5L1115 468.4L1099.2 481.7L1087.8 488.4Z"/>
<path class="s7" fill="#815a49" d="M1115.4 467.5L1117.6 466.2L1115 468.4Z"/>
<path class="s6" fill="#4f5874" d="M1087.8 488.4L1099.2 481.7L1080.7 496.6L1069.4 503.2Z"/>
<path class="s5" fill="#375523" d="M1059 512.8L1051 517.4L1062 509Z"/>
<path class="s6" fill="#505976" d="M1069.4 503.2L1080.7 496.6L1062.2 510.9L1059 512.8L1062 509Z"/>
<path class="s5" fill="#385623" d="M1051 517.4L1059 512.8L1057.5 514.3L1043.5 524.6L1032.4 531.1Z"/>
<path class="s6" fill="#505a77" d="M1059 512.8L1062.2 510.9L1057.5 514.3Z"/>
<path class="s5" fill="#395724" d="M1032.4 531.1L1043.5 524.6L1024.8 537.7L1013.8 544.1Z"/>
<path class="s4" fill="#2f4f6d" d="M995.4 556.3L995.1 556.5L995.7 556.1Z"/>
<path class="s5" fill="#395824" d="M1013.8 544.1L1024.8 537.7L1006 550.1L995.4 556.3L995.7 556.1Z"/>
<path class="s4" fill="#2f506e" d="M995.1 556.5L995.4 556.3L986.8 562.2L976.3 568.3Z"/>
<path class="s5" fill="#3a5a25" d="M995.4 556.3L1006 550.1L987.1 562L986.8 562.2Z"/>
<path class="s4" fill="#305170" d="M976.3 568.3L986.8 562.2L986.5 562.4L968.1 573.3L957.4 579.5Z"/>
<path class="s5" fill="#3b5b25" d="M986.8 562.2L987.1 562L986.5 562.4Z"/>
<path class="s4 k" fill="#233b51" d="M957.4 579.5L968.1 573.3L949 584L938.4 590.1Z"/>
<path class="s4 k" fill="#233b51" d="M938.4 590.1L949 584L929.8 594L919.2 600.2Z"/>
<path class="s3 k" fill="#614900" d="M902 608.4L900 609.5L905.5 606.9Z"/>
<path class="s4 k" fill="#233b51" d="M919.2 600.2L929.8 594L910.4 603.5L902 608.4L905.5 606.9Z"/>
<path class="s3 k" fill="#614900" d="M900 609.5L902 608.4L889 613.4L880.7 618.3Z"/>
<path class="s4 k" fill="#233b51" d="M902 608.4L910.4 603.5L891 612.3L889 613.4Z"/>
<path class="s3 k" fill="#614900" d="M880.7 618.3L889 613.4L884.3 615.1L871.4 620.5L861.2 626.5Z"/>
<path class="s4 k" fill="#233b51" d="M889 613.4L891 612.3L884.3 615.1Z"/>
<path class="s3 k" fill="#614900" d="M861.2 626.5L871.4 620.5L851.7 628.1L841.6 634Z"/>
<path class="s3 k" fill="#614900" d="M841.6 634L851.7 628.1L831.9 635L821.9 640.9Z"/>
<path class="s3 k" fill="#614900" d="M821.9 640.9L831.9 635L812 641.3L802.1 647.2Z"/>
<path class="s3 k" fill="#614900" d="M802.1 647.2L812 641.3L791.9 647L782.1 652.9Z"/>
<path class="s3 k" fill="#614900" d="M782.1 652.9L791.9 647L771.6 652L762 657.9Z"/>
<path class="s3 k" fill="#614900" d="M762 657.9L771.6 652L751.3 656.4L741.7 662.2Z"/>
<path class="s3 k" fill="#614900" d="M741.7 662.2L751.3 656.4L730.7 660.1L721.3 666Z"/>
<path class="s3 k" fill="#614900" d="M721.3 666L730.7 660.1L710 663.1L700.7 669Z"/>
<path class="s3 k" fill="#614900" d="M700.7 669L710 663.1L689.2 665.5L680 671.4Z"/>
<path class="s3 k" fill="#614900" d="M680 671.4L689.2 665.5L668.2 667.2L659.1 673.1Z"/>
<path class="s3 k" fill="#614900" d="M659.1 673.1L668.2 667.2L647 668.3L638 674.1Z"/>
<path class="s3 k" fill="#614900" d="M638 674.1L647 668.3L625.6 668.6L616.7 674.5Z"/>
<path class="s3 k" fill="#614900" d="M616.7 674.5L625.6 668.6L604 668.2L595.3 674.1Z"/>
<path class="s3 k" fill="#614900" d="M595.3 674.1L604 668.2L582.2 667.1L573.6 673.1Z"/>
<path class="s3 k" fill="#614900" d="M573.6 673.1L582.2 667.1L560.3 665.3L551.8 671.3Z"/>
<path class="s3 k" fill="#614900" d="M551.8 671.3L560.3 665.3L538.1 662.8L529.7 668.9Z"/>
<path class="s3 k" fill="#614900" d="M529.7 668.9L538.1 662.8L523.4 660.7L514.2 660.7L507.5 665.7Z"/>
<path class="s4 k" fill="#233b51" d="M523.4 660.7L515.7 659.6L514.2 660.7Z"/>
<path class="s3 k" fill="#614900" d="M507.5 665.7L514.2 660.7L486.6 660.5L485 661.7Z"/>
<path class="s4 k" fill="#233b51" d="M514.2 660.7L515.7 659.6L493.1 655.6L486.6 660.5Z"/>
<path class="s3 k" fill="#614900" d="M485 661.7L486.6 660.5L478.6 660.4Z"/>
<path class="s4 k" fill="#233b51" d="M486.6 660.5L493.1 655.6L470.3 650.8L462.3 657L478.6 660.4Z"/>
<path class="s4 k" fill="#233b51" d="M462.3 657L470.3 650.8L447.2 645.3L439.4 651.6Z"/>
<path class="s4 k" fill="#233b51" d="M439.4 651.6L447.2 645.3L423.9 639L416.2 645.4Z"/>
<path class="s4 k" fill="#233b51" d="M416.2 645.4L423.9 639L401.1 632.2L400.2 632.1L392.8 638.4Z"/>
<path class="s5 k" fill="#2b421b" d="M401.1 632.2L400.4 631.9L400.2 632.1Z"/>
<path class="s4 k" fill="#233b51" d="M392.8 638.4L400.2 632.1L369.4 630.4L369.2 630.6Z"/>
<path class="s5 k" fill="#2b421b" d="M400.2 632.1L400.4 631.9L376.6 624.1L369.4 630.4Z"/>
<path class="s4 k" fill="#233b51" d="M369.2 630.6L369.4 630.4L368.4 630.3Z"/>
<path class="s5 k" fill="#2b421b" d="M369.4 630.4L376.6 624.1L352.5 615.4L345.2 622L368.4 630.3Z"/>
<path class="s7" fill="#805949" d="M1165.1 427.7L1154.2 433.5L1164.4 423.9Z"/>
<path class="s8" fill="#686868" d="M1172.4 416.3L1184.3 409.9L1166 427.2L1165.1 427.7L1164.4 423.9Z"/>
<path class="s7" fill="#825a4a" d="M1154.2 433.5L1165.1 427.7L1165.1 428L1147.7 444L1135.9 450.2Z"/>
<path class="s8" fill="#696969" d="M1165.1 427.7L1166 427.2L1165.1 428Z"/>
<path class="s7" fill="#835b4a" d="M1135.9 450.2L1147.7 444L1129.3 460.1L1117.6 466.2Z"/>
<path class="s6" fill="#505a76" d="M1113.8 473.1L1110.8 475.7L1099.2 481.7L1115 468.4Z"/>
<path class="s7" fill="#855c4b" d="M1117.6 466.2L1129.3 460.1L1113.8 473.1L1115 468.4Z"/>
<path class="s6" fill="#515b77" d="M1099.2 481.7L1110.8 475.7L1092.2 490.6L1080.7 496.6Z"/>
<path class="s6" fill="#525c79" d="M1080.7 496.6L1092.2 490.6L1073.5 505L1062.2 510.9Z"/>
<path class="s5" fill="#395924" d="M1053.9 519.2L1043.5 524.6L1057.5 514.3Z"/>
<path class="s6" fill="#525d7a" d="M1062.2 510.9L1073.5 505L1054.8 518.8L1053.9 519.2L1057.5 514.3Z"/>
<path class="s5" fill="#3a5a25" d="M1043.5 524.6L1053.9 519.2L1053.5 519.7L1036 531.9L1024.8 537.7Z"/>
<path class="s6" fill="#535e7b" d="M1053.9 519.2L1054.8 518.8L1053.5 519.7Z"/>
<path class="s5" fill="#3b5b25" d="M1024.8 537.7L1036 531.9L1017.1 544.5L1006 550.1Z"/>
<path class="s5" fill="#3b5c26" d="M1006 550.1L1017.1 544.5L998.1 556.4L987.1 562Z"/>
<path class="s4" fill="#315372" d="M978.1 568.2L968.1 573.3L986.5 562.4Z"/>
<path class="s5" fill="#3c5d26" d="M987.1 562L998.1 556.4L978.9 567.8L978.1 568.2L986.5 562.4Z"/>
<path class="s4" fill="#315474" d="M968.1 573.3L978.1 568.2L977.3 568.7L959.7 578.5L949 584Z"/>
<path class="s5" fill="#3d5e27" d="M978.1 568.2L978.9 567.8L977.3 568.7Z"/>
<path class="s4" fill="#325575" d="M949 584L959.7 578.5L940.4 588.6L929.8 594Z"/>
<path class="s4 k" fill="#233b51" d="M929.8 594L940.4 588.6L921 598.1L910.4 603.5Z"/>
<path class="s4 k" fill="#233b51" d="M910.4 603.5L921 598.1L901.4 607L891 612.3Z"/>
<path class="s3 k" fill="#614900" d="M875.5 618.4L871.4 620.5L884.3 615.1Z"/>
<path class="s4 k" fill="#233b51" d="M891 612.3L901.4 607L881.8 615.2L875.5 618.4L884.3 615.1Z"/>
<path class="s3 k" fill="#614900" d="M871.4 620.5L875.5 618.4L861.2 623.3L851.7 628.1Z"/>
<path class="s4 k" fill="#233b51" d="M875.5 618.4L881.8 615.2L862 622.8L861.2 623.3Z"/>
<path class="s3 k" fill="#614900" d="M851.7 628.1L861.2 623.3L858.6 624L842.1 629.8L831.9 635Z"/>
<path class="s4 k" fill="#233b51" d="M861.2 623.3L862 622.8L858.6 624Z"/>
<path class="s3 k" fill="#614900" d="M831.9 635L842.1 629.8L822 636.2L812 641.3Z"/>
<path class="s3 k" fill="#614900" d="M812 641.3L822 636.2L801.8 641.8L791.9 647Z"/>
<path class="s3 k" fill="#614900" d="M791.9 647L801.8 641.8L781.5 646.9L771.6 652Z"/>
<path class="s3 k" fill="#614900" d="M771.6 652L781.5 646.9L761 651.3L751.3 656.4Z"/>
<path class="s3 k" fill="#614900" d="M751.3 656.4L761 651.3L740.3 655L730.7 660.1Z"/>
<path class="s3 k" fill="#614900" d="M730.7 660.1L740.3 655L719.5 658L710 663.1Z"/>
<path class="s3 k" fill="#614900" d="M710 663.1L719.5 658L698.6 660.4L689.2 665.5Z"/>
<path class="s3 k" fill="#614900" d="M689.2 665.5L698.6 660.4L677.4 662.1L668.2 667.2Z"/>
<path class="s3 k" fill="#614900" d="M668.2 667.2L677.4 662.1L656.1 663.1L647 668.3Z"/>
<path class="s3 k" fill="#614900" d="M647 668.3L656.1 663.1L634.6 663.4L625.6 668.6Z"/>
<path class="s3 k" fill="#614900" d="M625.6 668.6L634.6 663.4L612.9 663L604 668.2Z"/>
<path class="s3 k" fill="#614900" d="M604 668.2L612.9 663L591 661.9L582.2 667.1Z"/>
<path class="s3 k" fill="#614900" d="M582.2 667.1L591 661.9L572.7 660.4L568.3 660.5L560.3 665.3Z"/>
<path class="s4 k" fill="#233b51" d="M572.7 660.4L568.9 660.1L568.3 660.5Z"/>
<path class="s3 k" fill="#614900" d="M560.3 665.3L568.3 660.5L541.5 660.8L538.1 662.8Z"/>
<path class="s4 k" fill="#233b51" d="M568.3 660.5L568.9 660.1L546.6 657.6L541.5 660.8Z"/>
<path class="s3 k" fill="#614900" d="M538.1 662.8L541.5 660.8L523.4 660.7Z"/>
<path class="s4 k" fill="#233b51" d="M541.5 660.8L546.6 657.6L524.1 654.3L515.7 659.6L523.4 660.7Z"/>
<path class="s4 k" fill="#233b51" d="M515.7 659.6L524.1 654.3L501.4 650.2L493.1 655.6Z"/>
<path class="s4 k" fill="#233b51" d="M493.1 655.6L501.4 650.2L478.4 645.4L470.3 650.8Z"/>
<path class="s4 k" fill="#233b51" d="M470.3 650.8L478.4 645.4L455.3 639.8L447.2 645.3Z"/>
<path class="s4 k" fill="#233b51" d="M447.2 645.3L455.3 639.8L433.9 634L431.2 633.9L423.9 639Z"/>
<path class="s5 k" fill="#2b421b" d="M433.9 634L431.8 633.5L431.2 633.9Z"/>
<path class="s4 k" fill="#233b51" d="M423.9 639L431.2 633.9L401.1 632.2Z"/>
<path class="s5 k" fill="#2b421b" d="M431.2 633.9L431.8 633.5L408.1 626.3L400.4 631.9L401.1 632.2Z"/>
<path class="s5 k" fill="#2b421b" d="M400.4 631.9L408.1 626.3L384.2 618.3L376.6 624.1Z"/>
<path class="s5 k" fill="#2b421b" d="M376.6 624.1L384.2 618.3L360 609.6L352.5 615.4Z"/>
<path class="s8" fill="#6b6b6b" d="M1184.3 409.9L1196.4 404.2L1178 421.6L1166 427.2Z"/>
<path class="s7" fill="#855c4b" d="M1166.5 432.2L1159.6 438.5L1147.7 444L1165.1 428Z"/>
<path class="s8" fill="#6c6c6c" d="M1166 427.2L1178 421.6L1166.5 432.2L1165.1 428Z"/>
<path class="s7" fill="#865d4c" d="M1147.7 444L1159.6 438.5L1141.1 454.7L1129.3 460.1Z"/>
<path class="s6" fill="#525c79" d="M1113.8 474.3L1110.8 475.7L1113.8 473.1Z"/>
<path class="s7" fill="#885e4d" d="M1129.3 460.1L1141.1 454.7L1122.5 470.4L1113.8 474.3L1113.8 473.1Z"/>
<path class="s6" fill="#535d7a" d="M1110.8 475.7L1113.8 474.3L1113.3 477.8L1103.8 485.4L1092.2 490.6Z"/>
<path class="s7" fill="#8a5f4e" d="M1113.8 474.3L1122.5 470.4L1113.3 477.8Z"/>
<path class="s6" fill="#545e7c" d="M1092.2 490.6L1103.8 485.4L1085 499.9L1073.5 505Z"/>
<path class="s6" fill="#555f7d" d="M1073.5 505L1085 499.9L1066.2 513.7L1054.8 518.8Z"/>
<path class="s5" fill="#3c5c26" d="M1050 525L1047.3 527L1036 531.9L1053.5 519.7Z"/>
<path class="s6" fill="#56607e" d="M1054.8 518.8L1066.2 513.7L1050 525L1053.5 519.7Z"/>
<path class="s5" fill="#3c5d26" d="M1036 531.9L1047.3 527L1028.3 539.6L1017.1 544.5Z"/>
<path class="s5" fill="#3d5e27" d="M1017.1 544.5L1028.3 539.6L1009.2 551.6L998.1 556.4Z"/>
<path class="s5" fill="#3e5f27" d="M998.1 556.4L1009.2 551.6L989.9 563L978.9 567.8Z"/>
<path class="s4" fill="#335677" d="M969.3 574.4L959.7 578.5L977.3 568.7Z"/>
<path class="s5" fill="#3e6028" d="M978.9 567.8L989.9 563L970.6 573.8L969.3 574.4L977.3 568.7Z"/>
<path class="s4" fill="#335778" d="M959.7 578.5L969.3 574.4L967.9 575.2L951.2 584L940.4 588.6Z"/>
<path class="s5" fill="#3f6228" d="M969.3 574.4L970.6 573.8L967.9 575.2Z"/>
<path class="s4" fill="#34597a" d="M940.4 588.6L951.2 584L931.7 593.5L921 598.1Z"/>
<path class="s4" fill="#355a7b" d="M921 598.1L931.7 593.5L912 602.4L901.4 607Z"/>
<path class="s4 k" fill="#233b51" d="M901.4 607L912 602.4L892.3 610.7L881.8 615.2Z"/>
<path class="s4 k" fill="#233b51" d="M881.8 615.2L892.3 610.7L872.4 618.4L862 622.8Z"/>
<path class="s3 k" fill="#614900" d="M846.3 628L842.1 629.8L858.6 624Z"/>
<path class="s4 k" fill="#233b51" d="M862 622.8L872.4 618.4L852.3 625.4L846.3 628L858.6 624Z"/>
<path class="s3 k" fill="#614900" d="M842.1 629.8L846.3 628L830.5 632.5L822 636.2Z"/>
<path class="s4 k" fill="#233b51" d="M846.3 628L852.3 625.4L832.2 631.7L830.5 632.5Z"/>
<path class="s3 k" fill="#614900" d="M822 636.2L830.5 632.5L822.7 634.4L811.9 637.5L801.8 641.8Z"/>
<path class="s4 k" fill="#233b51" d="M830.5 632.5L832.2 631.7L822.7 634.4Z"/>
<path class="s3 k" fill="#614900" d="M801.8 641.8L811.9 637.5L791.4 642.5L781.5 646.9Z"/>
<path class="s3 k" fill="#614900" d="M781.5 646.9L791.4 642.5L770.8 646.9L761 651.3Z"/>
<path class="s3 k" fill="#614900" d="M761 651.3L770.8 646.9L750.1 650.6L740.3 655Z"/>
<path class="s3 k" fill="#614900" d="M740.3 655L750.1 650.6L729.2 653.7L719.5 658Z"/>
<path class="s3 k" fill="#614900" d="M719.5 658L729.2 653.7L708.1 656.1L698.6 660.4Z"/>
<path class="s3 k" fill="#614900" d="M698.6 660.4L708.1 656.1L686.8 657.8L677.4 662.1Z"/>
<path class="s3 k" fill="#614900" d="M677.4 662.1L686.8 657.8L665.4 658.8L656.1 663.1Z"/>
<path class="s3 k" fill="#614900" d="M656.1 663.1L665.4 658.8L643.8 659.1L634.6 663.4Z"/>
<path class="s3 k" fill="#614900" d="M634.6 663.4L643.8 659.1L632.2 658.9L620.5 659.4L612.9 663Z"/>
<path class="s4 k" fill="#233b51" d="M632.2 658.9L622 658.7L620.5 659.4Z"/>
<path class="s3 k" fill="#614900" d="M612.9 663L620.5 659.4L594.7 660.1L591 661.9Z"/>
<path class="s4 k" fill="#233b51" d="M620.5 659.4L622 658.7L600 657.5L594.7 660.1Z"/>
<path class="s3 k" fill="#614900" d="M591 661.9L594.7 660.1L572.7 660.4Z"/>
<path class="s4 k" fill="#233b51" d="M594.7 660.1L600 657.5L577.7 655.7L568.9 660.1L572.7 660.4Z"/>
<path class="s4 k" fill="#233b51" d="M568.9 660.1L577.7 655.7L555.3 653.1L546.6 657.6Z"/>
<path class="s4 k" fill="#233b51" d="M546.6 657.6L555.3 653.1L532.7 649.7L524.1 654.3Z"/>
<path class="s4 k" fill="#233b51" d="M524.1 654.3L532.7 649.7L509.8 645.6L501.4 650.2Z"/>
<path class="s4 k" fill="#233b51" d="M501.4 650.2L509.8 645.6L486.7 640.8L478.4 645.4Z"/>
<path class="s4 k" fill="#233b51" d="M478.4 645.4L486.7 640.8L466.7 635.9L462.4 635.7L455.3 639.8Z"/>
<path class="s5 k" fill="#2b421b" d="M466.7 635.9L463.4 635.1L462.4 635.7Z"/>
<path class="s4 k" fill="#233b51" d="M455.3 639.8L462.4 635.7L433.9 634Z"/>
<path class="s5 k" fill="#2b421b" d="M462.4 635.7L463.4 635.1L439.8 628.7L431.8 633.5L433.9 634Z"/>
<path class="s5 k" fill="#2b421b" d="M431.8 633.5L439.8 628.7L416 621.5L408.1 626.3Z"/>
<path class="s5 k" fill="#2b421b" d="M408.1 626.3L416 621.5L391.9 613.4L384.2 618.3Z"/>
<path class="s5 k" fill="#2b421b" d="M384.2 618.3L391.9 613.4L367.6 604.5L360 609.6Z"/>
<path class="s8" fill="#6d6d6d" d="M1196.4 404.2L1208.6 399.2L1190.2 416.8L1178 421.6Z"/>
<path class="s7" fill="#885f4d" d="M1168.1 435.1L1159.6 438.5L1166.5 432.2Z"/>
<path class="s8" fill="#6e6e6e" d="M1178 421.6L1190.2 416.8L1171.6 433.7L1168.1 435.1L1166.5 432.2Z"/>
<path class="s7" fill="#8a604e" d="M1159.6 438.5L1168.1 435.1L1168.7 436.3L1153 450.1L1141.1 454.7Z"/>
<path class="s8" fill="#707070" d="M1168.1 435.1L1171.6 433.7L1168.7 436.3Z"/>
<path class="s7" fill="#8b614f" d="M1141.1 454.7L1153 450.1L1134.3 465.8L1122.5 470.4Z"/>
<path class="s6" fill="#555f7d" d="M1113.6 481.7L1103.8 485.4L1113.3 477.8Z"/>
<path class="s7" fill="#8d6250" d="M1122.5 470.4L1134.3 465.8L1115.5 481L1113.6 481.7L1113.3 477.8Z"/>
<path class="s6" fill="#56607f" d="M1103.8 485.4L1113.6 481.7L1113.6 482.4L1096.7 495.5L1085 499.9Z"/>
<path class="s7" fill="#8f6351" d="M1113.6 481.7L1115.5 481L1113.6 482.4Z"/>
<path class="s6" fill="#576180" d="M1085 499.9L1096.7 495.5L1077.8 509.4L1066.2 513.7Z"/>
<path class="s5" fill="#3d5e27" d="M1049.6 526.1L1047.3 527L1050 525Z"/>
<path class="s6" fill="#586382" d="M1066.2 513.7L1077.8 509.4L1058.7 522.7L1049.6 526.1L1050 525Z"/>
<path class="s5" fill="#3e5f27" d="M1047.3 527L1049.6 526.1L1047.2 530.4L1039.6 535.4L1028.3 539.6Z"/>
<path class="s6" fill="#596483" d="M1049.6 526.1L1058.7 522.7L1047.2 530.4Z"/>
<path class="s5" fill="#3f6128" d="M1028.3 539.6L1039.6 535.4L1020.4 547.5L1009.2 551.6Z"/>
<path class="s5" fill="#3f6228" d="M1009.2 551.6L1020.4 547.5L1001.1 559L989.9 563Z"/>
<path class="s5" fill="#406329" d="M989.9 563L1001.1 559L981.7 569.8L970.6 573.8Z"/>
<path class="s4" fill="#355a7b" d="M960.4 580.7L951.2 584L967.9 575.2Z"/>
<path class="s5" fill="#416429" d="M970.6 573.8L981.7 569.8L962.2 580.1L960.4 580.7L967.9 575.2Z"/>
<path class="s4" fill="#355b7d" d="M951.2 584L960.4 580.7L958.6 581.8L942.5 589.7L931.7 593.5Z"/>
<path class="s5" fill="#42652a" d="M960.4 580.7L962.2 580.1L958.6 581.8Z"/>
<path class="s4" fill="#365c7e" d="M931.7 593.5L942.5 589.7L922.8 598.6L912 602.4Z"/>
<path class="s4" fill="#375d80" d="M912 602.4L922.8 598.6L902.9 607L892.3 610.7Z"/>
<path class="s4" fill="#375e81" d="M892.3 610.7L902.9 607L882.9 614.6L872.4 618.4Z"/>
<path class="s4 k" fill="#233b51" d="M872.4 618.4L882.9 614.6L862.8 621.7L852.3 625.4Z"/>
<path class="s4 k" fill="#233b51" d="M852.3 625.4L862.8 621.7L842.5 628.1L832.2 631.7Z"/>
<path class="s3 k" fill="#614900" d="M813.9 636.7L811.9 637.5L822.7 634.4Z"/>
<path class="s4 k" fill="#233b51" d="M832.2 631.7L842.5 628.1L822.1 633.8L813.9 636.7L822.7 634.4Z"/>
<path class="s3 k" fill="#614900" d="M811.9 637.5L813.9 636.7L796.5 640.7L791.4 642.5Z"/>
<path class="s4 k" fill="#233b51" d="M813.9 636.7L822.1 633.8L801.5 638.9L796.5 640.7Z"/>
<path class="s3 k" fill="#614900" d="M791.4 642.5L796.5 640.7L777.9 644.4L770.8 646.9Z"/>
<path class="s4 k" fill="#233b51" d="M796.5 640.7L801.5 638.9L780.8 643.3L777.9 644.4Z"/>
<path class="s3 k" fill="#614900" d="M770.8 646.9L777.9 644.4L758.4 647.7L750.1 650.6Z"/>
<path class="s4 k" fill="#233b51" d="M777.9 644.4L780.8 643.3L760 647.1L758.4 647.7Z"/>
<path class="s3 k" fill="#614900" d="M750.1 650.6L758.4 647.7L737.8 650.6L729.2 653.7Z"/>
<path class="s4 k" fill="#233b51" d="M758.4 647.7L760 647.1L738.9 650.2L737.8 650.6Z"/>
<path class="s3 k" fill="#614900" d="M729.2 653.7L737.8 650.6L716.2 653.1L708.1 656.1Z"/>
<path class="s4 k" fill="#233b51" d="M737.8 650.6L738.9 650.2L717.8 652.5L716.2 653.1Z"/>
<path class="s3 k" fill="#614900" d="M708.1 656.1L716.2 653.1L693.6 655.3L686.8 657.8Z"/>
<path class="s4 k" fill="#233b51" d="M716.2 653.1L717.8 652.5L696.4 654.2L693.6 655.3Z"/>
<path class="s3 k" fill="#614900" d="M686.8 657.8L693.6 655.3L670.1 657L665.4 658.8Z"/>
<path class="s4 k" fill="#233b51" d="M693.6 655.3L696.4 654.2L674.8 655.2L670.1 657Z"/>
<path class="s3 k" fill="#614900" d="M665.4 658.8L670.1 657L645.7 658.4L643.8 659.1Z"/>
<path class="s4 k" fill="#233b51" d="M670.1 657L674.8 655.2L653.1 655.5L645.7 658.4Z"/>
<path class="s3 k" fill="#614900" d="M643.8 659.1L645.7 658.4L632.2 658.9Z"/>
<path class="s4 k" fill="#233b51" d="M645.7 658.4L653.1 655.5L631.2 655.1L622 658.7L632.2 658.9Z"/>
<path class="s4 k" fill="#233b51" d="M622 658.7L631.2 655.1L609 653.9L600 657.5Z"/>
<path class="s4 k" fill="#233b51" d="M600 657.5L609 653.9L586.7 652L577.7 655.7Z"/>
<path class="s4 k" fill="#233b51" d="M577.7 655.7L586.7 652L564.2 649.4L555.3 653.1Z"/>
<path class="s4 k" fill="#233b51" d="M555.3 653.1L564.2 649.4L541.4 646L532.7 649.7Z"/>
<path class="s4 k" fill="#233b51" d="M532.7 649.7L541.4 646L518.4 641.9L509.8 645.6Z"/>
<path class="s4 k" fill="#233b51" d="M509.8 645.6L518.4 641.9L499.4 637.9L493.8 637.6L486.7 640.8Z"/>
<path class="s5 k" fill="#2b421b" d="M499.4 637.9L495.2 637L493.8 637.6Z"/>
<path class="s4 k" fill="#233b51" d="M486.7 640.8L493.8 637.6L466.7 635.9Z"/>
<path class="s5 k" fill="#2b421b" d="M493.8 637.6L495.2 637L471.7 631.3L463.4 635.1L466.7 635.9Z"/>
<path class="s5 k" fill="#2b421b" d="M463.4 635.1L471.7 631.3L448 624.8L439.8 628.7Z"/>
<path class="s5 k" fill="#2b421b" d="M439.8 628.7L448 624.8L424.1 617.5L416 621.5Z"/>
<path class="s5 k" fill="#2b421b" d="M416 621.5L424.1 617.5L399.8 609.3L391.9 613.4Z"/>
<path class="s5 k" fill="#2b421b" d="M391.9 613.4L399.8 609.3L390.2 605.8L369.1 603.7L367.6 604.5Z"/>
<path class="s6 k" fill="#3d455a" d="M390.2 605.8L375.3 600.4L369.1 603.7Z"/>
<path class="s8" fill="#707070" d="M1208.6 399.2L1221 395L1202.4 412.6L1190.2 416.8Z"/>
<path class="s9" fill="#917849" d="M1221 395L1221 395L1221 395Z"/>
<path class="s8" fill="#717171" d="M1190.2 416.8L1202.4 412.6L1183.8 429.7L1171.6 433.7Z"/>
<path class="s7" fill="#8d6250" d="M1171.6 440.4L1165.1 446.2L1153 450.1L1168.7 436.3Z"/>
<path class="s8" fill="#727272" d="M1171.6 433.7L1183.8 429.7L1171.6 440.4L1168.7 436.3Z"/>
<path class="s7" fill="#8f6351" d="M1153 450.1L1165.1 446.2L1146.3 462L1134.3 465.8Z"/>
<path class="s7" fill="#906452" d="M1134.3 465.8L1146.3 462L1127.4 477.2L1115.5 481Z"/>
<path class="s6" fill="#586382" d="M1114.6 487.1L1108.5 491.9L1096.7 495.5L1113.6 482.4Z"/>
<path class="s7" fill="#926553" d="M1115.5 481L1127.4 477.2L1114.6 487.1L1113.6 482.4Z"/>
<path class="s6" fill="#596483" d="M1096.7 495.5L1108.5 491.9L1089.4 505.9L1077.8 509.4Z"/>
<path class="s6" fill="#5a6585" d="M1077.8 509.4L1089.4 505.9L1070.3 519.3L1058.7 522.7Z"/>
<path class="s5" fill="#3f6228" d="M1046.2 533.5L1039.6 535.4L1047.2 530.4Z"/>
<path class="s6" fill="#5b6687" d="M1058.7 522.7L1070.3 519.3L1051.1 532L1046.2 533.5L1047.2 530.4Z"/>
<path class="s5" fill="#406329" d="M1039.6 535.4L1046.2 533.5L1045.1 535.8L1031.8 544.2L1020.4 547.5Z"/>
<path class="s6" fill="#5c6888" d="M1046.2 533.5L1051.1 532L1045.1 535.8Z"/>
<path class="s5" fill="#416429" d="M1020.4 547.5L1031.8 544.2L1012.4 555.7L1001.1 559Z"/>
<path class="s5" fill="#42652a" d="M1001.1 559L1012.4 555.7L992.9 566.7L981.7 569.8Z"/>
<path class="s5" fill="#42672a" d="M981.7 569.8L992.9 566.7L973.3 576.9L962.2 580.1Z"/>
<path class="s4" fill="#375d80" d="M951.5 587.2L942.5 589.7L958.6 581.8Z"/>
<path class="s5" fill="#43682b" d="M962.2 580.1L973.3 576.9L953.5 586.6L951.5 587.2L958.6 581.8Z"/>
<path class="s4" fill="#375e82" d="M942.5 589.7L951.5 587.2L949.4 588.5L933.7 595.6L922.8 598.6Z"/>
<path class="s5" fill="#44692b" d="M951.5 587.2L953.5 586.6L949.4 588.5Z"/>
<path class="s4" fill="#385f83" d="M922.8 598.6L933.7 595.6L913.7 604L902.9 607Z"/>
<path class="s4" fill="#396185" d="M902.9 607L913.7 604L893.6 611.7L882.9 614.6Z"/>
<path class="s4" fill="#396286" d="M882.9 614.6L893.6 611.7L873.4 618.8L862.8 621.7Z"/>
<path class="s4" fill="#3a6388" d="M862.8 621.7L873.4 618.8L853 625.2L842.5 628.1Z"/>
<path class="s4" fill="#3b648a" d="M842.5 628.1L853 625.2L832.5 631L822.1 633.8Z"/>
<path class="s4 k" fill="#233b51" d="M822.1 633.8L832.5 631L811.8 636.1L801.5 638.9Z"/>
<path class="s4 k" fill="#233b51" d="M801.5 638.9L811.8 636.1L791 640.6L780.8 643.3Z"/>
<path class="s4 k" fill="#233b51" d="M780.8 643.3L791 640.6L770 644.3L760 647.1Z"/>
<path class="s4 k" fill="#233b51" d="M760 647.1L770 644.3L748.9 647.4L738.9 650.2Z"/>
<path class="s4 k" fill="#233b51" d="M738.9 650.2L748.9 647.4L727.6 649.8L717.8 652.5Z"/>
<path class="s4 k" fill="#233b51" d="M717.8 652.5L727.6 649.8L706.1 651.5L696.4 654.2Z"/>
<path class="s4 k" fill="#233b51" d="M696.4 654.2L706.1 651.5L684.4 652.5L674.8 655.2Z"/>
<path class="s4 k" fill="#233b51" d="M674.8 655.2L684.4 652.5L662.6 652.7L653.1 655.5Z"/>
<path class="s4 k" fill="#233b51" d="M653.1 655.5L662.6 652.7L640.5 652.3L631.2 655.1Z"/>
<path class="s4 k" fill="#233b51" d="M631.2 655.1L640.5 652.3L618.3 651.1L609 653.9Z"/>
<path class="s4 k" fill="#233b51" d="M609 653.9L618.3 651.1L595.8 649.2L586.7 652Z"/>
<path class="s4 k" fill="#233b51" d="M586.7 652L595.8 649.2L573.2 646.6L564.2 649.4Z"/>
<path class="s4 k" fill="#233b51" d="M564.2 649.4L573.2 646.6L550.3 643.1L541.4 646Z"/>
<path class="s4 k" fill="#233b51" d="M541.4 646L550.3 643.1L532.1 639.8L525.5 639.5L518.4 641.9Z"/>
<path class="s5 k" fill="#2b421b" d="M532.1 639.8L527.2 639L525.5 639.5Z"/>
<path class="s4 k" fill="#233b51" d="M518.4 641.9L525.5 639.5L499.4 637.9Z"/>
<path class="s5 k" fill="#2b421b" d="M525.5 639.5L527.2 639L503.8 634L495.2 637L499.4 637.9Z"/>
<path class="s5 k" fill="#2b421b" d="M495.2 637L503.8 634L480.2 628.2L471.7 631.3Z"/>
<path class="s5 k" fill="#2b421b" d="M471.7 631.3L480.2 628.2L456.4 621.7L448 624.8Z"/>
<path class="s5 k" fill="#2b421b" d="M448 624.8L456.4 621.7L432.3 614.3L424.1 617.5Z"/>
<path class="s5 k" fill="#2b421b" d="M424.1 617.5L432.3 614.3L415.5 608.7L404.5 607.5L399.8 609.3Z"/>
<path class="s6 k" fill="#3d455a" d="M415.5 608.7L407.9 606.1L404.5 607.5Z"/>
<path class="s5 k" fill="#2b421b" d="M399.8 609.3L404.5 607.5L390.2 605.8Z"/>
<path class="s6 k" fill="#3d455a" d="M404.5 607.5L407.9 606.1L383.2 597.1L375.3 600.4L390.2 605.8Z"/>
<path class="s8" fill="#727272" d="M1221 395L1221 395L1226.1 398.6L1214.9 409.3L1202.4 412.6Z"/>
<path class="s9" fill="#957b4b" d="M1221 395L1233.5 391.5L1226.1 398.6L1221 395Z"/>
<path class="s8" fill="#747474" d="M1202.4 412.6L1214.9 409.3L1196.1 426.5L1183.8 429.7Z"/>
<path class="s7" fill="#916452" d="M1174.8 443.7L1165.1 446.2L1171.6 440.4Z"/>
<path class="s8" fill="#757575" d="M1183.8 429.7L1196.1 426.5L1177.3 443L1174.8 443.7L1171.6 440.4Z"/>
<path class="s7" fill="#926553" d="M1165.1 446.2L1174.8 443.7L1175.6 444.5L1158.4 459L1146.3 462Z"/>
<path class="s8" fill="#767676" d="M1174.8 443.7L1177.3 443L1175.6 444.5Z"/>
<path class="s7" fill="#946754" d="M1146.3 462L1158.4 459L1139.5 474.3L1127.4 477.2Z"/>
<path class="s6" fill="#5a6585" d="M1116.1 490L1108.5 491.9L1114.6 487.1Z"/>
<path class="s7" fill="#966855" d="M1127.4 477.2L1139.5 474.3L1120.4 489L1116.1 490L1114.6 487.1Z"/>
<path class="s6" fill="#5b6687" d="M1108.5 491.9L1116.1 490L1116.7 491.7L1101.3 503.1L1089.4 505.9Z"/>
<path class="s7" fill="#986956" d="M1116.1 490L1120.4 489L1116.7 491.7Z"/>
<path class="s6" fill="#5c6888" d="M1089.4 505.9L1101.3 503.1L1082.1 516.6L1070.3 519.3Z"/>
<path class="s6" fill="#5d698a" d="M1070.3 519.3L1082.1 516.6L1062.8 529.4L1051.1 532Z"/>
<path class="s5" fill="#42652a" d="M1044.2 541.2L1043.4 541.7L1031.8 544.2L1045.1 535.8Z"/>
<path class="s6" fill="#5e6a8c" d="M1051.1 532L1062.8 529.4L1044.2 541.2L1045.1 535.8Z"/>
<path class="s5" fill="#42672a" d="M1031.8 544.2L1043.4 541.7L1023.9 553.3L1012.4 555.7Z"/>
<path class="s5" fill="#43682b" d="M1012.4 555.7L1023.9 553.3L1004.3 564.3L992.9 566.7Z"/>
<path class="s5" fill="#44692b" d="M992.9 566.7L1004.3 564.3L984.5 574.6L973.3 576.9Z"/>
<path class="s5" fill="#456b2c" d="M973.3 576.9L984.5 574.6L964.7 584.3L953.5 586.6Z"/>
<path class="s4" fill="#396185" d="M942.5 593.8L933.7 595.6L949.4 588.5Z"/>
<path class="s5" fill="#466c2c" d="M953.5 586.6L964.7 584.3L944.7 593.4L942.5 593.8L949.4 588.5Z"/>
<path class="s4" fill="#396286" d="M933.7 595.6L942.5 593.8L940.3 595.3L924.7 601.8L913.7 604Z"/>
<path class="s5" fill="#476d2d" d="M942.5 593.8L944.7 593.4L940.3 595.3Z"/>
<path class="s4" fill="#3a6388" d="M913.7 604L924.7 601.8L904.5 609.6L893.6 611.7Z"/>
<path class="s4" fill="#3b648a" d="M893.6 611.7L904.5 609.6L884.1 616.7L873.4 618.8Z"/>
<path class="s4" fill="#3c658b" d="M873.4 618.8L884.1 616.7L863.6 623.2L853 625.2Z"/>
<path class="s4" fill="#3c678d" d="M853 625.2L863.6 623.2L843 629L832.5 631Z"/>
<path class="s4" fill="#3d688f" d="M832.5 631L843 629L822.3 634.1L811.8 636.1Z"/>
<path class="s4" fill="#3e6990" d="M811.8 636.1L822.3 634.1L801.3 638.6L791 640.6Z"/>
<path class="s4 k" fill="#233b51" d="M791 640.6L801.3 638.6L780.3 642.4L770 644.3Z"/>
<path class="s4 k" fill="#233b51" d="M770 644.3L780.3 642.4L759 645.5L748.9 647.4Z"/>
<path class="s4 k" fill="#233b51" d="M748.9 647.4L759 645.5L737.6 647.9L727.6 649.8Z"/>
<path class="s4 k" fill="#233b51" d="M727.6 649.8L737.6 647.9L716 649.6L706.1 651.5Z"/>
<path class="s4 k" fill="#233b51" d="M706.1 651.5L716 649.6L694.2 650.6L684.4 652.5Z"/>
<path class="s4 k" fill="#233b51" d="M684.4 652.5L694.2 650.6L672.2 650.8L662.6 652.7Z"/>
<path class="s4 k" fill="#233b51" d="M662.6 652.7L672.2 650.8L650.1 650.4L640.5 652.3Z"/>
<path class="s4 k" fill="#233b51" d="M640.5 652.3L650.1 650.4L627.7 649.2L618.3 651.1Z"/>
<path class="s4 k" fill="#233b51" d="M618.3 651.1L627.7 649.2L605.1 647.2L595.8 649.2Z"/>
<path class="s4 k" fill="#233b51" d="M595.8 649.2L605.1 647.2L582.3 644.6L573.2 646.6Z"/>
<path class="s4 k" fill="#233b51" d="M573.2 646.6L582.3 644.6L564.5 641.9L557.5 641.5L550.3 643.1Z"/>
<path class="s5 k" fill="#2b421b" d="M564.5 641.9L559.3 641.1L557.5 641.5Z"/>
<path class="s4 k" fill="#233b51" d="M550.3 643.1L557.5 641.5L532.1 639.8Z"/>
<path class="s5 k" fill="#2b421b" d="M557.5 641.5L559.3 641.1L536.1 636.9L527.2 639L532.1 639.8Z"/>
<path class="s5 k" fill="#2b421b" d="M527.2 639L536.1 636.9L512.6 631.9L503.8 634Z"/>
<path class="s5 k" fill="#2b421b" d="M503.8 634L512.6 631.9L488.9 626.1L480.2 628.2Z"/>
<path class="s5 k" fill="#2b421b" d="M480.2 628.2L488.9 626.1L464.9 619.4L456.4 621.7Z"/>
<path class="s5 k" fill="#2b421b" d="M456.4 621.7L464.9 619.4L440.7 612L432.3 614.3Z"/>
<path class="s5 k" fill="#2b421b" d="M432.3 614.3L440.7 612L439.6 611.7L415.5 608.7Z"/>
<path class="s6 k" fill="#3d455a" d="M439.6 611.7L416.1 603.7L407.9 606.1L415.5 608.7Z"/>
<path class="s6 k" fill="#3d455a" d="M407.9 606.1L416.1 603.7L391.3 594.6L383.2 597.1Z"/>
<path class="s8" fill="#757575" d="M1232.1 402.2L1227.4 406.7L1214.9 409.3L1226.1 398.6Z"/>
<path class="s9" fill="#987e4d" d="M1233.5 391.5L1246.2 388.9L1232.1 402.2L1226.1 398.6Z"/>
<path class="s8" fill="#767676" d="M1214.9 409.3L1227.4 406.7L1208.6 424L1196.1 426.5Z"/>
<path class="s8" fill="#787878" d="M1196.1 426.5L1208.6 424L1189.7 440.7L1177.3 443Z"/>
<path class="s7" fill="#966855" d="M1180.3 448.6L1170.7 456.7L1158.4 459L1175.6 444.5Z"/>
<path class="s8" fill="#797979" d="M1177.3 443L1189.7 440.7L1180.3 448.6L1175.6 444.5Z"/>
<path class="s7" fill="#986956" d="M1158.4 459L1170.7 456.7L1151.6 472.1L1139.5 474.3Z"/>
<path class="s7" fill="#996a57" d="M1139.5 474.3L1151.6 472.1L1132.5 486.9L1120.4 489Z"/>
<path class="s6" fill="#5d698a" d="M1119.8 496.3L1113.3 501.1L1101.3 503.1L1116.7 491.7Z"/>
<path class="s7" fill="#9b6c58" d="M1120.4 489L1132.5 486.9L1119.8 496.3L1116.7 491.7Z"/>
<path class="s6" fill="#5e6a8c" d="M1101.3 503.1L1113.3 501.1L1094 514.7L1082.1 516.6Z"/>
<path class="s6" fill="#606b8d" d="M1082.1 516.6L1094 514.7L1074.6 527.6L1062.8 529.4Z"/>
<path class="s5" fill="#43682b" d="M1044.2 541.5L1043.4 541.7L1044.2 541.2Z"/>
<path class="s6" fill="#616d8f" d="M1062.8 529.4L1074.6 527.6L1055.1 539.9L1044.2 541.5L1044.2 541.2Z"/>
<path class="s5" fill="#44692b" d="M1043.4 541.7L1044.2 541.5L1044.1 546.5L1035.5 551.6L1023.9 553.3Z"/>
<path class="s6" fill="#626e91" d="M1044.2 541.5L1055.1 539.9L1044.1 546.5Z"/>
<path class="s5" fill="#456b2c" d="M1023.9 553.3L1035.5 551.6L1015.8 562.7L1004.3 564.3Z"/>
<path class="s5" fill="#466c2c" d="M1004.3 564.3L1015.8 562.7L995.9 573.1L984.5 574.6Z"/>
<path class="s5" fill="#476d2d" d="M984.5 574.6L995.9 573.1L976 582.8L964.7 584.3Z"/>
<path class="s5" fill="#486f2d" d="M964.7 584.3L976 582.8L956 592L944.7 593.4Z"/>
<path class="s4" fill="#3b648a" d="M933.6 600.7L924.7 601.8L940.3 595.3Z"/>
<path class="s5" fill="#48702e" d="M944.7 593.4L956 592L935.8 600.4L933.6 600.7L940.3 595.3Z"/>
<path class="s4" fill="#3c668c" d="M924.7 601.8L933.6 600.7L931.5 602.1L915.5 608.3L904.5 609.6Z"/>
<path class="s5" fill="#49712f" d="M933.6 600.7L935.8 600.4L931.5 602.1Z"/>
<path class="s4" fill="#3c678d" d="M904.5 609.6L915.5 608.3L895 615.4L884.1 616.7Z"/>
<path class="s4" fill="#3d688f" d="M884.1 616.7L895 615.4L874.4 622L863.6 623.2Z"/>
<path class="s4" fill="#3e6991" d="M863.6 623.2L874.4 622L853.7 627.8L843 629Z"/>
<path class="s4" fill="#3e6a92" d="M843 629L853.7 627.8L832.8 633L822.3 634.1Z"/>
<path class="s4" fill="#3f6c94" d="M822.3 634.1L832.8 633L811.8 637.5L801.3 638.6Z"/>
<path class="s4" fill="#406d95" d="M801.3 638.6L811.8 637.5L790.6 641.3L780.3 642.4Z"/>
<path class="s4" fill="#406e97" d="M780.3 642.4L790.6 641.3L769.3 644.4L759 645.5Z"/>
<path class="s4" fill="#416f99" d="M759 645.5L769.3 644.4L747.7 646.8L737.6 647.9Z"/>
<path class="s4 k" fill="#233b51" d="M737.6 647.9L747.7 646.8L726 648.5L716 649.6Z"/>
<path class="s4 k" fill="#233b51" d="M716 649.6L726 648.5L704.1 649.5L694.2 650.6Z"/>
<path class="s4 k" fill="#233b51" d="M694.2 650.6L704.1 649.5L682.1 649.7L672.2 650.8Z"/>
<path class="s4 k" fill="#233b51" d="M672.2 650.8L682.1 649.7L659.8 649.3L650.1 650.4Z"/>
<path class="s4 k" fill="#233b51" d="M650.1 650.4L659.8 649.3L637.3 648.1L627.7 649.2Z"/>
<path class="s4 k" fill="#233b51" d="M627.7 649.2L637.3 648.1L614.6 646.1L605.1 647.2Z"/>
<path class="s4 k" fill="#233b51" d="M605.1 647.2L614.6 646.1L596.6 644L589.9 643.6L582.3 644.6Z"/>
<path class="s5 k" fill="#2b421b" d="M596.6 644L591.7 643.4L589.9 643.6Z"/>
<path class="s4 k" fill="#233b51" d="M582.3 644.6L589.9 643.6L564.5 641.9Z"/>
<path class="s5 k" fill="#2b421b" d="M589.9 643.6L591.7 643.4L568.5 639.9L559.3 641.1L564.5 641.9Z"/>
<path class="s5 k" fill="#2b421b" d="M559.3 641.1L568.5 639.9L545.2 635.7L536.1 636.9Z"/>
<path class="s5 k" fill="#2b421b" d="M536.1 636.9L545.2 635.7L521.6 630.6L512.6 631.9Z"/>
<path class="s5 k" fill="#2b421b" d="M512.6 631.9L521.6 630.6L497.7 624.8L488.9 626.1Z"/>
<path class="s5 k" fill="#2b421b" d="M488.9 626.1L497.7 624.8L473.6 618.1L464.9 619.4Z"/>
<path class="s5 k" fill="#2b421b" d="M464.9 619.4L473.6 618.1L463 614.8L441.3 611.9L440.7 612Z"/>
<path class="s6 k" fill="#3d455a" d="M463 614.8L449.2 610.6L441.3 611.9Z"/>
<path class="s5 k" fill="#2b421b" d="M440.7 612L441.3 611.9L439.6 611.7Z"/>
<path class="s6 k" fill="#3d455a" d="M441.3 611.9L449.2 610.6L424.6 602.3L416.1 603.7L439.6 611.7Z"/>
<path class="s6 k" fill="#3d455a" d="M416.1 603.7L424.6 602.3L399.6 593L391.3 594.6Z"/>
<path class="s8" fill="#787878" d="M1238.1 405.3L1227.4 406.7L1232.1 402.2Z"/>
<path class="s9" fill="#9c814e" d="M1246.2 388.9L1259 387L1240.1 405L1238.1 405.3L1232.1 402.2Z"/>
<path class="s8" fill="#797979" d="M1227.4 406.7L1238.1 405.3L1239.2 405.8L1221.2 422.4L1208.6 424Z"/>
<path class="s9" fill="#9e824f" d="M1238.1 405.3L1240.1 405L1239.2 405.8Z"/>
<path class="s8" fill="#7b7b7b" d="M1208.6 424L1221.2 422.4L1202.2 439.1L1189.7 440.7Z"/>
<path class="s7" fill="#996a57" d="M1186.3 452.6L1183.1 455.3L1170.7 456.7L1180.3 448.6Z"/>
<path class="s8" fill="#7c7c7c" d="M1189.7 440.7L1202.2 439.1L1186.3 452.6L1180.3 448.6Z"/>
<path class="s7" fill="#9b6c58" d="M1170.7 456.7L1183.1 455.3L1164 470.8L1151.6 472.1Z"/>
<path class="s7" fill="#9d6d59" d="M1151.6 472.1L1164 470.8L1144.8 485.7L1132.5 486.9Z"/>
<path class="s6" fill="#5f6b8d" d="M1123.5 500.1L1113.3 501.1L1119.8 496.3Z"/>
<path class="s7" fill="#9f6e5a" d="M1132.5 486.9L1144.8 485.7L1125.4 499.9L1123.5 500.1L1119.8 496.3Z"/>
<path class="s6" fill="#616d8f" d="M1113.3 501.1L1123.5 500.1L1124.1 500.9L1106 513.6L1094 514.7Z"/>
<path class="s7" fill="#a1705b" d="M1123.5 500.1L1125.4 499.9L1124.1 500.9Z"/>
<path class="s6" fill="#626e91" d="M1094 514.7L1106 513.6L1086.5 526.6L1074.6 527.6Z"/>
<path class="s6" fill="#636f93" d="M1074.6 527.6L1086.5 526.6L1066.9 539L1055.1 539.9Z"/>
<path class="s5" fill="#466c2c" d="M1045.4 550.9L1035.5 551.6L1044.1 546.5Z"/>
<path class="s6" fill="#647194" d="M1055.1 539.9L1066.9 539L1047.2 550.8L1045.4 550.9L1044.1 546.5Z"/>
<path class="s5" fill="#476d2d" d="M1035.5 551.6L1045.4 550.9L1045.5 551.7L1027.4 561.9L1015.8 562.7Z"/>
<path class="s6" fill="#667296" d="M1045.4 550.9L1047.2 550.8L1045.5 551.7Z"/>
<path class="s5" fill="#486f2d" d="M1015.8 562.7L1027.4 561.9L1007.5 572.4L995.9 573.1Z"/>
<path class="s5" fill="#48702e" d="M995.9 573.1L1007.5 572.4L987.5 582.2L976 582.8Z"/>
<path class="s5" fill="#49712f" d="M976 582.8L987.5 582.2L967.3 591.4L956 592Z"/>
<path class="s5" fill="#4a732f" d="M956 592L967.3 591.4L947 599.9L935.8 600.4Z"/>
<path class="s4" fill="#3d688f" d="M924.9 607.9L915.5 608.3L931.5 602.1Z"/>
<path class="s5" fill="#4b7430" d="M935.8 600.4L947 599.9L926.6 607.8L924.9 607.9L931.5 602.1Z"/>
<path class="s4" fill="#3e6991" d="M915.5 608.3L924.9 607.9L923.2 609L906.1 615L895 615.4Z"/>
<path class="s5" fill="#4c7530" d="M924.9 607.9L926.6 607.8L923.2 609Z"/>
<path class="s4" fill="#3f6a92" d="M895 615.4L906.1 615L885.4 621.6L874.4 622Z"/>
<path class="s4" fill="#3f6c94" d="M874.4 622L885.4 621.6L864.6 627.4L853.7 627.8Z"/>
<path class="s4" fill="#406d96" d="M853.7 627.8L864.6 627.4L843.6 632.6L832.8 633Z"/>
<path class="s4" fill="#416e97" d="M832.8 633L843.6 632.6L822.5 637.2L811.8 637.5Z"/>
<path class="s4" fill="#416f99" d="M811.8 637.5L822.5 637.2L801.2 641L790.6 641.3Z"/>
<path class="s4" fill="#42709b" d="M790.6 641.3L801.2 641L779.7 644.1L769.3 644.4Z"/>
<path class="s4" fill="#43729c" d="M769.3 644.4L779.7 644.1L758.1 646.6L747.7 646.8Z"/>
<path class="s4" fill="#43739e" d="M747.7 646.8L758.1 646.6L736.2 648.3L726 648.5Z"/>
<path class="s4" fill="#44749f" d="M726 648.5L736.2 648.3L714.2 649.3L704.1 649.5Z"/>
<path class="s4 k" fill="#233b51" d="M704.1 649.5L714.2 649.3L692 649.5L682.1 649.7Z"/>
<path class="s4 k" fill="#233b51" d="M682.1 649.7L692 649.5L669.6 649.1L659.8 649.3Z"/>
<path class="s4 k" fill="#233b51" d="M659.8 649.3L669.6 649.1L647 647.9L637.3 648.1Z"/>
<path class="s4 k" fill="#233b51" d="M637.3 648.1L647 647.9L628.1 646.2L622.7 645.9L614.6 646.1Z"/>
<path class="s5 k" fill="#2b421b" d="M628.1 646.2L624.2 645.9L622.7 645.9Z"/>
<path class="s4 k" fill="#233b51" d="M614.6 646.1L622.7 645.9L596.6 644Z"/>
<path class="s5 k" fill="#2b421b" d="M622.7 645.9L624.2 645.9L601.2 643.2L591.7 643.4L596.6 644Z"/>
<path class="s5 k" fill="#2b421b" d="M591.7 643.4L601.2 643.2L577.9 639.7L568.5 639.9Z"/>
<path class="s5 k" fill="#2b421b" d="M568.5 639.9L577.9 639.7L554.4 635.4L545.2 635.7Z"/>
<path class="s5 k" fill="#2b421b" d="M545.2 635.7L554.4 635.4L530.7 630.3L521.6 630.6Z"/>
<path class="s5 k" fill="#2b421b" d="M521.6 630.6L530.7 630.3L506.7 624.4L497.7 624.8Z"/>
<path class="s5 k" fill="#2b421b" d="M497.7 624.8L506.7 624.4L484.6 618.2L481 617.7L473.6 618.1Z"/>
<path class="s6 k" fill="#3d455a" d="M484.6 618.2L482.4 617.6L481 617.7Z"/>
<path class="s5 k" fill="#2b421b" d="M473.6 618.1L481 617.7L463 614.8Z"/>
<path class="s6 k" fill="#3d455a" d="M481 617.7L482.4 617.6L457.9 610.1L449.2 610.6L463 614.8Z"/>
<path class="s6 k" fill="#3d455a" d="M449.2 610.6L457.9 610.1L433.1 601.7L424.6 602.3Z"/>
<path class="s6 k" fill="#3d455a" d="M424.6 602.3L433.1 601.7L408.1 592.4L399.6 593Z"/>
<path class="s9" fill="#9f8450" d="M1259 387L1272 385.9L1253 404L1240.1 405Z"/>
<path class="s8" fill="#7c7c7c" d="M1247.2 409.4L1234 421.5L1221.2 422.4L1239.2 405.8Z"/>
<path class="s9" fill="#a18551" d="M1240.1 405L1253 404L1247.2 409.4L1239.2 405.8Z"/>
<path class="s8" fill="#7e7e7e" d="M1221.2 422.4L1234 421.5L1214.9 438.4L1202.2 439.1Z"/>
<path class="s7" fill="#9d6d59" d="M1190.5 454.9L1183.1 455.3L1186.3 452.6Z"/>
<path class="s8" fill="#7f7f7f" d="M1202.2 439.1L1214.9 438.4L1195.7 454.6L1190.5 454.9L1186.3 452.6Z"/>
<path class="s7" fill="#9f6e5a" d="M1183.1 455.3L1190.5 454.9L1193.3 456.5L1176.5 470.2L1164 470.8Z"/>
<path class="s8" fill="#818181" d="M1190.5 454.9L1195.7 454.6L1193.3 456.5Z"/>
<path class="s7" fill="#a1705b" d="M1164 470.8L1176.5 470.2L1157.1 485.2L1144.8 485.7Z"/>
<path class="s7" fill="#a3715c" d="M1144.8 485.7L1157.1 485.2L1137.7 499.6L1125.4 499.9Z"/>
<path class="s6" fill="#636f92" d="M1129.6 505.3L1118.2 513.3L1106 513.6L1124.1 500.9Z"/>
<path class="s7" fill="#a5725d" d="M1125.4 499.9L1137.7 499.6L1129.6 505.3L1124.1 500.9Z"/>
<path class="s6" fill="#647194" d="M1106 513.6L1118.2 513.3L1098.6 526.4L1086.5 526.6Z"/>
<path class="s6" fill="#657296" d="M1086.5 526.6L1098.6 526.4L1078.9 538.9L1066.9 539Z"/>
<path class="s6" fill="#677498" d="M1066.9 539L1078.9 538.9L1059.1 550.7L1047.2 550.8Z"/>
<path class="s5" fill="#48702e" d="M1048.2 556.9L1039.2 561.9L1027.4 561.9L1045.5 551.7Z"/>
<path class="s6" fill="#68759a" d="M1047.2 550.8L1059.1 550.7L1048.2 556.9L1045.5 551.7Z"/>
<path class="s5" fill="#49712e" d="M1027.4 561.9L1039.2 561.9L1019.2 572.5L1007.5 572.4Z"/>
<path class="s5" fill="#4a732f" d="M1007.5 572.4L1019.2 572.5L999.1 582.4L987.5 582.2Z"/>
<path class="s5" fill="#4b7430" d="M987.5 582.2L999.1 582.4L978.8 591.6L967.3 591.4Z"/>
<path class="s5" fill="#4c7530" d="M967.3 591.4L978.8 591.6L958.5 600.2L947 599.9Z"/>
<path class="s5" fill="#4d7731" d="M947 599.9L958.5 600.2L937.9 608.2L926.6 607.8Z"/>
<path class="s4" fill="#3f6c94" d="M916.5 615.4L906.1 615L923.2 609Z"/>
<path class="s5" fill="#4e7831" d="M926.6 607.8L937.9 608.2L917.3 615.4L916.5 615.4L923.2 609Z"/>
<path class="s4" fill="#406d96" d="M906.1 615L916.5 615.4L915.8 615.9L896.5 622L885.4 621.6Z"/>
<path class="s5" fill="#4f7a32" d="M916.5 615.4L917.3 615.4L915.8 615.9Z"/>
<path class="s4" fill="#416e98" d="M885.4 621.6L896.5 622L875.6 627.9L864.6 627.4Z"/>
<path class="s4" fill="#417099" d="M864.6 627.4L875.6 627.9L854.5 633.2L843.6 632.6Z"/>
<path class="s4" fill="#42719b" d="M843.6 632.6L854.5 633.2L833.3 637.7L822.5 637.2Z"/>
<path class="s4" fill="#43729d" d="M822.5 637.2L833.3 637.7L811.9 641.6L801.2 641Z"/>
<path class="s4" fill="#44739e" d="M801.2 641L811.9 641.6L790.3 644.7L779.7 644.1Z"/>
<path class="s4" fill="#4474a0" d="M779.7 644.1L790.3 644.7L768.5 647.2L758.1 646.6Z"/>
<path class="s4" fill="#4575a1" d="M758.1 646.6L768.5 647.2L746.6 648.9L736.2 648.3Z"/>
<path class="s4" fill="#4676a3" d="M736.2 648.3L746.6 648.9L724.5 649.9L714.2 649.3Z"/>
<path class="s4" fill="#4677a4" d="M714.2 649.3L724.5 649.9L702.2 650.2L692 649.5Z"/>
<path class="s4" fill="#4778a5" d="M692 649.5L702.2 650.2L679.7 649.7L669.6 649.1Z"/>
<path class="s4" fill="#4779a7" d="M669.6 649.1L679.7 649.7L658.6 648.6L656.2 648.5L647 647.9Z"/>
<path class="s5" fill="#588738" d="M658.6 648.6L656.9 648.5L656.2 648.5Z"/>
<path class="s4 k" fill="#233b51" d="M647 647.9L656.2 648.5L628.1 646.2Z"/>
<path class="s5 k" fill="#2b421b" d="M656.2 648.5L656.9 648.5L634 646.6L624.2 645.9L628.1 646.2Z"/>
<path class="s5 k" fill="#2b421b" d="M624.2 645.9L634 646.6L610.8 643.8L601.2 643.2Z"/>
<path class="s5 k" fill="#2b421b" d="M601.2 643.2L610.8 643.8L587.5 640.3L577.9 639.7Z"/>
<path class="s5 k" fill="#2b421b" d="M577.9 639.7L587.5 640.3L563.8 636L554.4 635.4Z"/>
<path class="s5 k" fill="#2b421b" d="M554.4 635.4L563.8 636L540 630.8L530.7 630.3Z"/>
<path class="s5 k" fill="#2b421b" d="M530.7 630.3L540 630.8L515.9 624.9L506.7 624.4Z"/>
<path class="s5 k" fill="#2b421b" d="M506.7 624.4L515.9 624.9L505 621.9L484.6 618.2Z"/>
<path class="s6 k" fill="#3d455a" d="M505 621.9L491.5 618.1L482.4 617.6L484.6 618.2Z"/>
<path class="s6 k" fill="#3d455a" d="M482.4 617.6L491.5 618.1L466.8 610.5L457.9 610.1Z"/>
<path class="s6 k" fill="#3d455a" d="M457.9 610.1L466.8 610.5L441.9 602L433.1 601.7Z"/>
<path class="s6 k" fill="#3d455a" d="M433.1 601.7L441.9 602L416.7 592.7L408.1 592.4Z"/>
<path class="s9" fill="#a38752" d="M1272 385.9L1285.1 385.7L1266 403.9L1253 404Z"/>
<path class="s8" fill="#7f7f7f" d="M1256.2 412.9L1246.9 421.5L1234 421.5L1247.2 409.4Z"/>
<path class="s9" fill="#a58853" d="M1253 404L1266 403.9L1256.2 412.9L1247.2 409.4Z"/>
<path class="s8" fill="#808080" d="M1234 421.5L1246.9 421.5L1227.7 438.5L1214.9 438.4Z"/>
<path class="s8" fill="#828282" d="M1214.9 438.4L1227.7 438.5L1208.4 454.8L1195.7 454.6Z"/>
<path class="s7" fill="#a2715c" d="M1201.5 460.5L1189.1 470.5L1176.5 470.2L1193.3 456.5Z"/>
<path class="s8" fill="#848484" d="M1195.7 454.6L1208.4 454.8L1201.5 460.5L1193.3 456.5Z"/>
<path class="s7" fill="#a4725d" d="M1176.5 470.2L1189.1 470.5L1169.7 485.6L1157.1 485.2Z"/>
<path class="s7" fill="#a7745e" d="M1157.1 485.2L1169.7 485.6L1150.2 500.1L1137.7 499.6Z"/>
<path class="s6" fill="#657296" d="M1136.5 509.7L1130.6 513.9L1118.2 513.3L1129.6 505.3Z"/>
<path class="s7" fill="#a97560" d="M1137.7 499.6L1150.2 500.1L1136.5 509.7L1129.6 505.3Z"/>
<path class="s6" fill="#677398" d="M1118.2 513.3L1130.6 513.9L1110.9 527.1L1098.6 526.4Z"/>
<path class="s6" fill="#68759a" d="M1098.6 526.4L1110.9 527.1L1091.1 539.7L1078.9 538.9Z"/>
<path class="s6" fill="#69769b" d="M1078.9 538.9L1091.1 539.7L1071.2 551.6L1059.1 550.7Z"/>
<path class="s5" fill="#4a722f" d="M1052.8 561.9L1051.2 562.8L1039.2 561.9L1048.2 556.9Z"/>
<path class="s6" fill="#6a789d" d="M1059.1 550.7L1071.2 551.6L1052.8 561.9L1048.2 556.9Z"/>
<path class="s5" fill="#4b7430" d="M1039.2 561.9L1051.2 562.8L1031.1 573.5L1019.2 572.5Z"/>
<path class="s5" fill="#4c7530" d="M1019.2 572.5L1031.1 573.5L1010.9 583.4L999.1 582.4Z"/>
<path class="s5" fill="#4d7731" d="M999.1 582.4L1010.9 583.4L990.5 592.8L978.8 591.6Z"/>
<path class="s5" fill="#4e7831" d="M978.8 591.6L990.5 592.8L970 601.4L958.5 600.2Z"/>
<path class="s5" fill="#4f7a32" d="M958.5 600.2L970 601.4L949.4 609.4L937.9 608.2Z"/>
<path class="s5" fill="#507b33" d="M937.9 608.2L949.4 609.4L928.7 616.7L917.3 615.4Z"/>
<path class="s4" fill="#427099" d="M909.7 622.8L907.8 623.4L896.5 622L915.8 615.9Z"/>
<path class="s5" fill="#517d33" d="M917.3 615.4L928.7 616.7L909.7 622.8L915.8 615.9Z"/>
<path class="s4" fill="#42719b" d="M896.5 622L907.8 623.4L886.8 629.3L875.6 627.9Z"/>
<path class="s4" fill="#43729d" d="M875.6 627.9L886.8 629.3L865.6 634.6L854.5 633.2Z"/>
<path class="s4" fill="#44739e" d="M854.5 633.2L865.6 634.6L844.2 639.2L833.3 637.7Z"/>
<path class="s4" fill="#4475a0" d="M833.3 637.7L844.2 639.2L822.7 643.1L811.9 641.6Z"/>
<path class="s4" fill="#4576a2" d="M811.9 641.6L822.7 643.1L801 646.3L790.3 644.7Z"/>
<path class="s4" fill="#4677a3" d="M790.3 644.7L801 646.3L779.2 648.7L768.5 647.2Z"/>
<path class="s4" fill="#4678a5" d="M768.5 647.2L779.2 648.7L757.1 650.5L746.6 648.9Z"/>
<path class="s4" fill="#4779a6" d="M746.6 648.9L757.1 650.5L734.9 651.5L724.5 649.9Z"/>
<path class="s4" fill="#487aa8" d="M724.5 649.9L734.9 651.5L712.5 651.8L702.2 650.2Z"/>
<path class="s4" fill="#487ba9" d="M702.2 650.2L712.5 651.8L689.8 651.3L679.7 649.7Z"/>
<path class="s4" fill="#497caa" d="M679.7 649.7L689.8 651.3L687.8 651.2L658.6 648.6Z"/>
<path class="s5" fill="#5a8a39" d="M687.8 651.2L667 650.1L656.9 648.5L658.6 648.6Z"/>
<path class="s5" fill="#5a8b39" d="M656.9 648.5L667 650.1L644 648.1L634 646.6Z"/>
<path class="s5" fill="#5b8c3a" d="M634 646.6L644 648.1L620.7 645.4L610.8 643.8Z"/>
<path class="s5" fill="#5b8d3a" d="M610.8 643.8L620.7 645.4L597.2 641.8L587.5 640.3Z"/>
<path class="s5 k" fill="#2b421b" d="M587.5 640.3L597.2 641.8L573.4 637.5L563.8 636Z"/>
<path class="s5 k" fill="#2b421b" d="M563.8 636L573.4 637.5L549.4 632.3L540 630.8Z"/>
<path class="s5 k" fill="#2b421b" d="M540 630.8L549.4 632.3L525.2 626.3L515.9 624.9Z"/>
<path class="s5 k" fill="#2b421b" d="M515.9 624.9L525.2 626.3L523.2 625.8L505 621.9Z"/>
<path class="s6 k" fill="#3d455a" d="M523.2 625.8L500.7 619.5L491.5 618.1L505 621.9Z"/>
<path class="s6 k" fill="#3d455a" d="M491.5 618.1L500.7 619.5L475.9 611.9L466.8 610.5Z"/>
<path class="s6 k" fill="#3d455a" d="M466.8 610.5L475.9 611.9L450.8 603.3L441.9 602Z"/>
<path class="s6 k" fill="#3d455a" d="M441.9 602L450.8 603.3L425.5 593.9L416.7 592.7Z"/>
<path class="s9" fill="#a78a54" d="M1285.1 385.7L1298.3 386.3L1279.2 404.6L1266 403.9Z"/>
<path class="s8" fill="#828282" d="M1266.5 416.3L1260 422.3L1246.9 421.5L1256.2 412.9Z"/>
<path class="s9" fill="#a98b55" d="M1266 403.9L1279.2 404.6L1266.5 416.3L1256.2 412.9Z"/>
<path class="s8" fill="#838383" d="M1246.9 421.5L1260 422.3L1240.7 439.4L1227.7 438.5Z"/>
<path class="s8" fill="#858585" d="M1227.7 438.5L1240.7 439.4L1221.3 455.9L1208.4 454.8Z"/>
<path class="s7" fill="#a6735e" d="M1211 464.3L1201.9 471.7L1189.1 470.5L1201.5 460.5Z"/>
<path class="s8" fill="#878787" d="M1208.4 454.8L1221.3 455.9L1211 464.3L1201.5 460.5Z"/>
<path class="s7" fill="#a8755f" d="M1189.1 470.5L1201.9 471.7L1182.4 486.9L1169.7 485.6Z"/>
<path class="s7" fill="#aa7661" d="M1169.7 485.6L1182.4 486.9L1162.8 501.4L1150.2 500.1Z"/>
<path class="s6" fill="#687499" d="M1145 514L1143.1 515.4L1130.6 513.9L1136.5 509.7Z"/>
<path class="s7" fill="#ac7862" d="M1150.2 500.1L1162.8 501.4L1145 514L1136.5 509.7Z"/>
<path class="s6" fill="#69769b" d="M1130.6 513.9L1143.1 515.4L1123.3 528.6L1110.9 527.1Z"/>
<path class="s6" fill="#6a779d" d="M1110.9 527.1L1123.3 528.6L1103.4 541.3L1091.1 539.7Z"/>
<path class="s6" fill="#6c799f" d="M1091.1 539.7L1103.4 541.3L1083.4 553.3L1071.2 551.6Z"/>
<path class="s5" fill="#4c7530" d="M1054.8 563.4L1051.2 562.8L1052.8 561.9Z"/>
<path class="s6" fill="#6d7aa1" d="M1071.2 551.6L1083.4 553.3L1063.3 564.6L1054.8 563.4L1052.8 561.9Z"/>
<path class="s5" fill="#4d7731" d="M1051.2 562.8L1054.8 563.4L1059.1 566.9L1043.1 575.3L1031.1 573.5Z"/>
<path class="s6" fill="#6e7ca3" d="M1054.8 563.4L1063.3 564.6L1059.1 566.9Z"/>
<path class="s5" fill="#4e7831" d="M1031.1 573.5L1043.1 575.3L1022.8 585.4L1010.9 583.4Z"/>
<path class="s5" fill="#4f7932" d="M1010.9 583.4L1022.8 585.4L1002.3 594.7L990.5 592.8Z"/>
<path class="s5" fill="#507b32" d="M990.5 592.8L1002.3 594.7L981.8 603.5L970 601.4Z"/>
<path class="s5" fill="#517c33" d="M970 601.4L981.8 603.5L961.1 611.5L949.4 609.4Z"/>
<path class="s5" fill="#527e34" d="M949.4 609.4L961.1 611.5L940.2 618.9L928.7 616.7Z"/>
<path class="s4" fill="#43729d" d="M909.5 623.7L907.8 623.4L909.7 622.8Z"/>
<path class="s5" fill="#527f34" d="M928.7 616.7L940.2 618.9L919.2 625.6L909.5 623.7L909.7 622.8Z"/>
<path class="s4" fill="#44739f" d="M907.8 623.4L909.5 623.7L905.6 629.5L898.1 631.6L886.8 629.3Z"/>
<path class="s5" fill="#538135" d="M909.5 623.7L919.2 625.6L905.6 629.5Z"/>
<path class="s4" fill="#4475a0" d="M886.8 629.3L898.1 631.6L876.8 636.9L865.6 634.6Z"/>
<path class="s4" fill="#4576a2" d="M865.6 634.6L876.8 636.9L855.3 641.6L844.2 639.2Z"/>
<path class="s4" fill="#4677a4" d="M844.2 639.2L855.3 641.6L833.7 645.5L822.7 643.1Z"/>
<path class="s4" fill="#4778a5" d="M822.7 643.1L833.7 645.5L811.9 648.7L801 646.3Z"/>
<path class="s4" fill="#4779a7" d="M801 646.3L811.9 648.7L790 651.2L779.2 648.7Z"/>
<path class="s4" fill="#487ba8" d="M779.2 648.7L790 651.2L767.8 653L757.1 650.5Z"/>
<path class="s4" fill="#497caa" d="M757.1 650.5L767.8 653L745.5 654L734.9 651.5Z"/>
<path class="s4" fill="#497dab" d="M734.9 651.5L745.5 654L722.9 654.3L712.5 651.8Z"/>
<path class="s4" fill="#4a7ead" d="M712.5 651.8L722.9 654.3L714.9 654.1L691.4 651.7L689.8 651.3Z"/>
<path class="s5" fill="#5b8c3a" d="M714.9 654.1L700.2 653.8L691.4 651.7Z"/>
<path class="s4" fill="#4a7fae" d="M689.8 651.3L691.4 651.7L687.8 651.2Z"/>
<path class="s5" fill="#5b8d3a" d="M691.4 651.7L700.2 653.8L677.2 652.6L667 650.1L687.8 651.2Z"/>
<path class="s5" fill="#5c8e3a" d="M667 650.1L677.2 652.6L654.1 650.6L644 648.1Z"/>
<path class="s5" fill="#5d8f3b" d="M644 648.1L654.1 650.6L630.7 647.9L620.7 645.4Z"/>
<path class="s5" fill="#5d903b" d="M620.7 645.4L630.7 647.9L607.1 644.3L597.2 641.8Z"/>
<path class="s5" fill="#5e913b" d="M597.2 641.8L607.1 644.3L583.2 639.9L573.4 637.5Z"/>
<path class="s5" fill="#5e923c" d="M573.4 637.5L583.2 639.9L559.1 634.8L549.4 632.3Z"/>
<path class="s5" fill="#5f923c" d="M549.4 632.3L559.1 634.8L539.8 630L528 627L525.2 626.3Z"/>
<path class="s6" fill="#8899c9" d="M539.8 630L534.7 628.8L528 627Z"/>
<path class="s5 k" fill="#2b421b" d="M525.2 626.3L528 627L523.2 625.8Z"/>
<path class="s6 k" fill="#3d455a" d="M528 627L534.7 628.8L510 621.9L500.7 619.5L523.2 625.8Z"/>
<path class="s6 k" fill="#3d455a" d="M500.7 619.5L510 621.9L485.1 614.2L475.9 611.9Z"/>
<path class="s6 k" fill="#3d455a" d="M475.9 611.9L485.1 614.2L459.9 605.6L450.8 603.3Z"/>
<path class="s6 k" fill="#3d455a" d="M450.8 603.3L459.9 605.6L434.4 596.2L425.5 593.9Z"/>
<path class="s9" fill="#aa8d56" d="M1298.3 386.3L1311.7 387.7L1292.5 406.2L1279.2 404.6Z"/>
<path class="s8" fill="#858585" d="M1277.8 419.8L1273.2 424L1260 422.3L1266.5 416.3Z"/>
<path class="s9" fill="#ac8e57" d="M1279.2 404.6L1292.5 406.2L1277.8 419.8L1266.5 416.3Z"/>
<path class="s8" fill="#868686" d="M1260 422.3L1273.2 424L1253.8 441.2L1240.7 439.4Z"/>
<path class="s8" fill="#888888" d="M1240.7 439.4L1253.8 441.2L1234.3 457.8L1221.3 455.9Z"/>
<path class="s7" fill="#aa7660" d="M1221.7 468.1L1214.8 473.7L1201.9 471.7L1211 464.3Z"/>
<path class="s8" fill="#898989" d="M1221.3 455.9L1234.3 457.8L1221.7 468.1L1211 464.3Z"/>
<path class="s7" fill="#ac7762" d="M1201.9 471.7L1214.8 473.7L1195.2 489L1182.4 486.9Z"/>
<path class="s7" fill="#ae7963" d="M1182.4 486.9L1195.2 489L1175.5 503.7L1162.8 501.4Z"/>
<path class="s6" fill="#6a779d" d="M1152.3 517.1L1143.1 515.4L1145 514Z"/>
<path class="s7" fill="#b07a64" d="M1162.8 501.4L1175.5 503.7L1155.7 517.7L1152.3 517.1L1145 514Z"/>
<path class="s6" fill="#6b799f" d="M1143.1 515.4L1152.3 517.1L1155 518.2L1135.9 531.1L1123.3 528.6Z"/>
<path class="s7" fill="#b37c65" d="M1152.3 517.1L1155.7 517.7L1155 518.2Z"/>
<path class="s6" fill="#6d7aa1" d="M1123.3 528.6L1135.9 531.1L1115.9 543.8L1103.4 541.3Z"/>
<path class="s6" fill="#6e7ca3" d="M1103.4 541.3L1115.9 543.8L1095.8 555.9L1083.4 553.3Z"/>
<path class="s6" fill="#6f7da5" d="M1083.4 553.3L1095.8 555.9L1075.6 567.3L1063.3 564.6Z"/>
<path class="s5" fill="#4e7932" d="M1067.5 571.6L1055.3 578.1L1043.1 575.3L1059.1 566.9Z"/>
<path class="s6" fill="#717fa7" d="M1063.3 564.6L1075.6 567.3L1067.5 571.6L1059.1 566.9Z"/>
<path class="s5" fill="#4f7b32" d="M1043.1 575.3L1055.3 578.1L1034.9 588.2L1022.8 585.4Z"/>
<path class="s5" fill="#507c33" d="M1022.8 585.4L1034.9 588.2L1014.3 597.6L1002.3 594.7Z"/>
<path class="s5" fill="#517e34" d="M1002.3 594.7L1014.3 597.6L993.6 606.4L981.8 603.5Z"/>
<path class="s5" fill="#527f34" d="M981.8 603.5L993.6 606.4L972.8 614.5L961.1 611.5Z"/>
<path class="s5" fill="#538135" d="M961.1 611.5L972.8 614.5L951.9 622L940.2 618.9Z"/>
<path class="s5" fill="#548235" d="M940.2 618.9L951.9 622L930.8 628.7L919.2 625.6Z"/>
<path class="s4" fill="#4576a2" d="M906.4 633.9L898.1 631.6L905.6 629.5Z"/>
<path class="s5" fill="#558436" d="M919.2 625.6L930.8 628.7L909.6 634.8L906.4 633.9L905.6 629.5Z"/>
<path class="s4" fill="#4677a4" d="M898.1 631.6L906.4 633.9L905.9 635.7L888.2 640.2L876.8 636.9Z"/>
<path class="s5" fill="#568537" d="M906.4 633.9L909.6 634.8L905.9 635.7Z"/>
<path class="s4" fill="#4778a6" d="M876.8 636.9L888.2 640.2L866.6 644.8L855.3 641.6Z"/>
<path class="s4" fill="#477aa7" d="M855.3 641.6L866.6 644.8L844.9 648.8L833.7 645.5Z"/>
<path class="s4" fill="#487ba9" d="M833.7 645.5L844.9 648.8L823 652L811.9 648.7Z"/>
<path class="s4" fill="#497caa" d="M811.9 648.7L823 652L800.9 654.6L790 651.2Z"/>
<path class="s4" fill="#497dac" d="M790 651.2L800.9 654.6L778.7 656.4L767.8 653Z"/>
<path class="s4" fill="#4a7ead" d="M767.8 653L778.7 656.4L756.2 657.4L745.5 654Z"/>
<path class="s4" fill="#4b7faf" d="M745.5 654L756.2 657.4L737.5 657.7L730.7 656.8L722.9 654.3Z"/>
<path class="s5" fill="#5c8e3a" d="M737.5 657.7L733.6 657.7L730.7 656.8Z"/>
<path class="s4" fill="#4b80b0" d="M722.9 654.3L730.7 656.8L714.9 654.1Z"/>
<path class="s5" fill="#5d8f3b" d="M730.7 656.8L733.6 657.7L710.7 657.3L700.2 653.8L714.9 654.1Z"/>
<path class="s5" fill="#5d903b" d="M700.2 653.8L710.7 657.3L687.7 656.1L677.2 652.6Z"/>
<path class="s5" fill="#5e913c" d="M677.2 652.6L687.7 656.1L664.4 654.1L654.1 650.6Z"/>
<path class="s5" fill="#5f923c" d="M654.1 650.6L664.4 654.1L640.9 651.3L630.7 647.9Z"/>
<path class="s5" fill="#5f933c" d="M630.7 647.9L640.9 651.3L617.1 647.8L607.1 644.3Z"/>
<path class="s5" fill="#60943d" d="M607.1 644.3L617.1 647.8L593.1 643.4L583.2 639.9Z"/>
<path class="s5" fill="#60943d" d="M583.2 639.9L593.1 643.4L568.9 638.2L559.1 634.8Z"/>
<path class="s5" fill="#60953d" d="M559.1 634.8L568.9 638.2L554.2 634.6L539.8 630Z"/>
<path class="s6" fill="#8b9ccd" d="M554.2 634.6L544.4 632.1L534.7 628.8L539.8 630Z"/>
<path class="s6" fill="#8b9dce" d="M534.7 628.8L544.4 632.1L519.6 625.3L510 621.9Z"/>
<path class="s6" fill="#8c9dcf" d="M510 621.9L519.6 625.3L494.5 617.5L485.1 614.2Z"/>
<path class="s6" fill="#8c9ecf" d="M485.1 614.2L494.5 617.5L469.2 608.9L459.9 605.6Z"/>
<path class="s6 k" fill="#3d455a" d="M459.9 605.6L469.2 608.9L444.6 599.8L441.1 598.5L434.4 596.2Z"/>
<path class="s7 k" fill="#66473a" d="M444.6 599.8L443.6 599.4L441.1 598.5Z"/>
<path class="s9" fill="#ae9058" d="M1311.7 387.7L1325.3 390.1L1305.9 408.7L1292.5 406.2Z"/>
<path class="s8" fill="#878787" d="M1290.3 423.1L1286.5 426.6L1273.2 424L1277.8 419.8Z"/>
<path class="s9" fill="#b09159" d="M1292.5 406.2L1305.9 408.7L1290.3 423.1L1277.8 419.8Z"/>
<path class="s8" fill="#898989" d="M1273.2 424L1286.5 426.6L1267.1 443.9L1253.8 441.2Z"/>
<path class="s8" fill="#8b8b8b" d="M1253.8 441.2L1267.1 443.9L1247.5 460.6L1234.3 457.8Z"/>
<path class="s7" fill="#ad7862" d="M1233.8 471.8L1227.9 476.6L1214.8 473.7L1221.7 468.1Z"/>
<path class="s8" fill="#8c8c8c" d="M1234.3 457.8L1247.5 460.6L1233.8 471.8L1221.7 468.1Z"/>
<path class="s7" fill="#b07a64" d="M1214.8 473.7L1227.9 476.6L1208.2 492L1195.2 489Z"/>
<path class="s7" fill="#b27b65" d="M1195.2 489L1208.2 492L1188.4 506.8L1175.5 503.7Z"/>
<path class="s7" fill="#b47d66" d="M1175.5 503.7L1188.4 506.8L1168.5 520.9L1155.7 517.7Z"/>
<path class="s6" fill="#6e7ba2" d="M1166.5 522.3L1148.6 534.4L1135.9 531.1L1155 518.2Z"/>
<path class="s7" fill="#b67f67" d="M1155.7 517.7L1168.5 520.9L1166.5 522.3L1155 518.2Z"/>
<path class="s6" fill="#6f7da4" d="M1135.9 531.1L1148.6 534.4L1128.5 547.2L1115.9 543.8Z"/>
<path class="s6" fill="#707ea6" d="M1115.9 543.8L1128.5 547.2L1108.3 559.4L1095.8 555.9Z"/>
<path class="s6" fill="#7280a8" d="M1095.8 555.9L1108.3 559.4L1088 570.9L1075.6 567.3Z"/>
<path class="s5" fill="#507c33" d="M1078.1 576.2L1067.6 581.7L1055.3 578.1L1067.5 571.6Z"/>
<path class="s6" fill="#7381aa" d="M1075.6 567.3L1088 570.9L1078.1 576.2L1067.5 571.6Z"/>
<path class="s5" fill="#517d33" d="M1055.3 578.1L1067.6 581.7L1047.1 591.9L1034.9 588.2Z"/>
<path class="s5" fill="#527f34" d="M1034.9 588.2L1047.1 591.9L1026.5 601.4L1014.3 597.6Z"/>
<path class="s5" fill="#538035" d="M1014.3 597.6L1026.5 601.4L1005.7 610.3L993.6 606.4Z"/>
<path class="s5" fill="#548235" d="M993.6 606.4L1005.7 610.3L984.8 618.5L972.8 614.5Z"/>
<path class="s5" fill="#558336" d="M972.8 614.5L984.8 618.5L963.7 626L951.9 622Z"/>
<path class="s5" fill="#568537" d="M951.9 622L963.7 626L942.6 632.8L930.8 628.7Z"/>
<path class="s5" fill="#578637" d="M930.8 628.7L942.6 632.8L921.2 638.9L909.6 634.8Z"/>
<path class="s4" fill="#477aa7" d="M911.4 641.4L899.7 644.3L888.2 640.2L905.9 635.7Z"/>
<path class="s5" fill="#588838" d="M909.6 634.8L921.2 638.9L911.4 641.4L905.9 635.7Z"/>
<path class="s4" fill="#487ba9" d="M888.2 640.2L899.7 644.3L878.1 649.1L866.6 644.8Z"/>
<path class="s4" fill="#497cab" d="M866.6 644.8L878.1 649.1L856.2 653.1L844.9 648.8Z"/>
<path class="s4" fill="#4a7dac" d="M844.9 648.8L856.2 653.1L834.2 656.3L823 652Z"/>
<path class="s4" fill="#4a7fae" d="M823 652L834.2 656.3L812.1 658.9L800.9 654.6Z"/>
<path class="s4" fill="#4b80af" d="M800.9 654.6L812.1 658.9L789.7 660.7L778.7 656.4Z"/>
<path class="s4" fill="#4c81b1" d="M778.7 656.4L789.7 660.7L767.1 661.8L756.2 657.4Z"/>
<path class="s4" fill="#4c82b2" d="M756.2 657.4L767.1 661.8L754.8 662L737.5 657.7Z"/>
<path class="s5" fill="#5e913b" d="M754.8 662L744.4 662.1L733.6 657.7L737.5 657.7Z"/>
<path class="s5" fill="#5e923c" d="M733.6 657.7L744.4 662.1L721.4 661.7L710.7 657.3Z"/>
<path class="s5" fill="#5f933c" d="M710.7 657.3L721.4 661.7L698.2 660.5L687.7 656.1Z"/>
<path class="s5" fill="#60943d" d="M687.7 656.1L698.2 660.5L674.8 658.5L664.4 654.1Z"/>
<path class="s5" fill="#60953d" d="M664.4 654.1L674.8 658.5L651.2 655.8L640.9 651.3Z"/>
<path class="s5" fill="#61963d" d="M640.9 651.3L651.2 655.8L627.3 652.2L617.1 647.8Z"/>
<path class="s5" fill="#61963e" d="M617.1 647.8L627.3 652.2L603.2 647.8L593.1 643.4Z"/>
<path class="s5" fill="#62973e" d="M593.1 643.4L603.2 647.8L578.8 642.6L568.9 638.2Z"/>
<path class="s5" fill="#62983e" d="M568.9 638.2L578.8 642.6L566.2 639.5L554.2 634.6Z"/>
<path class="s6" fill="#8d9fd1" d="M566.2 639.5L554.2 636.5L544.4 632.1L554.2 634.6Z"/>
<path class="s6" fill="#8e9fd1" d="M544.4 632.1L554.2 636.5L529.3 629.6L519.6 625.3Z"/>
<path class="s6" fill="#8ea0d2" d="M519.6 625.3L529.3 629.6L504.1 621.8L494.5 617.5Z"/>
<path class="s6" fill="#8fa0d3" d="M494.5 617.5L504.1 621.8L478.7 613.2L469.2 608.9Z"/>
<path class="s6" fill="#8fa1d3" d="M469.2 608.9L478.7 613.2L455.6 604.6L444.6 599.8Z"/>
<path class="s7" fill="#eea587" d="M455.6 604.6L452.9 603.6L443.6 599.4L444.6 599.8Z"/>
<path class="s9" fill="#b19359" d="M1325.3 390.1L1338.9 393.3L1319.5 412L1305.9 408.7Z"/>
<path class="s8" fill="#8a8a8a" d="M1304 426.4L1300 430.1L1286.5 426.6L1290.3 423.1Z"/>
<path class="s9" fill="#b4945a" d="M1305.9 408.7L1319.5 412L1304 426.4L1290.3 423.1Z"/>
<path class="s8" fill="#8c8c8c" d="M1286.5 426.6L1300 430.1L1280.5 447.5L1267.1 443.9Z"/>
<path class="s8" fill="#8e8e8e" d="M1267.1 443.9L1280.5 447.5L1260.8 464.3L1247.5 460.6Z"/>
<path class="s7" fill="#b17b64" d="M1247.3 475.4L1241.1 480.5L1227.9 476.6L1233.8 471.8Z"/>
<path class="s8" fill="#8f8f8f" d="M1247.5 460.6L1260.8 464.3L1247.3 475.4L1233.8 471.8Z"/>
<path class="s7" fill="#b37c66" d="M1227.9 476.6L1241.1 480.5L1221.3 496L1208.2 492Z"/>
<path class="s7" fill="#b67e67" d="M1208.2 492L1221.3 496L1201.5 510.8L1188.4 506.8Z"/>
<path class="s7" fill="#b88068" d="M1188.4 506.8L1201.5 510.8L1181.5 525L1168.5 520.9Z"/>
<path class="s6" fill="#707ea5" d="M1179.7 526.3L1161.4 538.6L1148.6 534.4L1166.5 522.3Z"/>
<path class="s7" fill="#ba816a" d="M1168.5 520.9L1181.5 525L1179.7 526.3L1166.5 522.3Z"/>
<path class="s6" fill="#717fa7" d="M1148.6 534.4L1161.4 538.6L1141.3 551.5L1128.5 547.2Z"/>
<path class="s6" fill="#7381aa" d="M1128.5 547.2L1141.3 551.5L1121 563.8L1108.3 559.4Z"/>
<path class="s6" fill="#7483ac" d="M1108.3 559.4L1121 563.8L1100.6 575.4L1088 570.9Z"/>
<path class="s5" fill="#527e34" d="M1091 580.5L1080.1 586.3L1067.6 581.7L1078.1 576.2Z"/>
<path class="s6" fill="#7684ae" d="M1088 570.9L1100.6 575.4L1091 580.5L1078.1 576.2Z"/>
<path class="s5" fill="#538035" d="M1067.6 581.7L1080.1 586.3L1059.5 596.6L1047.1 591.9Z"/>
<path class="s5" fill="#548135" d="M1047.1 591.9L1059.5 596.6L1038.8 606.2L1026.5 601.4Z"/>
<path class="s5" fill="#558336" d="M1026.5 601.4L1038.8 606.2L1017.9 615.1L1005.7 610.3Z"/>
<path class="s5" fill="#568536" d="M1005.7 610.3L1017.9 615.1L996.9 623.4L984.8 618.5Z"/>
<path class="s5" fill="#578637" d="M984.8 618.5L996.9 623.4L975.8 630.9L963.7 626Z"/>
<path class="s5" fill="#588838" d="M963.7 626L975.8 630.9L954.5 637.8L942.6 632.8Z"/>
<path class="s5" fill="#598938" d="M942.6 632.8L954.5 637.8L933 644L921.2 638.9Z"/>
<path class="s4" fill="#497cab" d="M924.4 646.2L911.4 649.5L899.7 644.3L911.4 641.4Z"/>
<path class="s5" fill="#5a8b39" d="M921.2 638.9L933 644L924.4 646.2L911.4 641.4Z"/>
<path class="s4" fill="#4a7dac" d="M899.7 644.3L911.4 649.5L889.7 654.2L878.1 649.1Z"/>
<path class="s4" fill="#4a7fae" d="M878.1 649.1L889.7 654.2L867.7 658.3L856.2 653.1Z"/>
<path class="s4" fill="#4b80b0" d="M856.2 653.1L867.7 658.3L845.6 661.6L834.2 656.3Z"/>
<path class="s4" fill="#4c81b1" d="M834.2 656.3L845.6 661.6L823.4 664.2L812.1 658.9Z"/>
<path class="s4" fill="#4c82b3" d="M812.1 658.9L823.4 664.2L800.9 666.1L789.7 660.7Z"/>
<path class="s4" fill="#4d83b4" d="M789.7 660.7L800.9 666.1L778.2 667.2L767.1 661.8Z"/>
<path class="s4" fill="#4e84b6" d="M767.1 661.8L778.2 667.2L764.5 667.4L754.8 662Z"/>
<path class="s5" fill="#60943d" d="M764.5 667.4L755.3 667.5L744.4 662.1L754.8 662Z"/>
<path class="s5" fill="#60953d" d="M744.4 662.1L755.3 667.5L732.3 667.1L721.4 661.7Z"/>
<path class="s5" fill="#61963d" d="M721.4 661.7L732.3 667.1L709 665.9L698.2 660.5Z"/>
<path class="s5" fill="#61973e" d="M698.2 660.5L709 665.9L685.5 664L674.8 658.5Z"/>
<path class="s5" fill="#62973e" d="M674.8 658.5L685.5 664L661.7 661.2L651.2 655.8Z"/>
<path class="s5" fill="#63983e" d="M651.2 655.8L661.7 661.2L637.7 657.6L627.3 652.2Z"/>
<path class="s5" fill="#63993f" d="M627.3 652.2L637.7 657.6L613.5 653.2L603.2 647.8Z"/>
<path class="s5" fill="#639a3f" d="M603.2 647.8L613.5 653.2L589 648L578.8 642.6Z"/>
<path class="s5" fill="#649a3f" d="M578.8 642.6L589 648L575.9 644.8L566.2 639.5Z"/>
<path class="s6" fill="#90a1d4" d="M575.9 644.8L564.2 641.9L554.2 636.5L566.2 639.5Z"/>
<path class="s6" fill="#90a2d5" d="M554.2 636.5L564.2 641.9L539.2 635L529.3 629.6Z"/>
<path class="s6" fill="#91a3d6" d="M529.3 629.6L539.2 635L513.9 627.2L504.1 621.8Z"/>
<path class="s6" fill="#91a3d6" d="M504.1 621.8L513.9 627.2L488.3 618.5L478.7 613.2Z"/>
<path class="s6" fill="#91a3d7" d="M478.7 613.2L488.3 618.5L464.7 609.8L455.6 604.6Z"/>
<path class="s7" fill="#f2a889" d="M464.7 609.8L462.4 608.9L452.9 603.6L455.6 604.6Z"/>
<path class="s9" fill="#b5965b" d="M1338.9 393.3L1352.8 397.5L1333.3 416.3L1319.5 412Z"/>
<path class="s8" fill="#8d8d8d" d="M1318.9 429.6L1313.7 434.5L1300 430.1L1304 426.4Z"/>
<path class="s9" fill="#b7975c" d="M1319.5 412L1333.3 416.3L1318.9 429.6L1304 426.4Z"/>
<path class="s8" fill="#8f8f8f" d="M1300 430.1L1313.7 434.5L1294 452L1280.5 447.5Z"/>
<path class="s8" fill="#909090" d="M1280.5 447.5L1294 452L1274.3 468.9L1260.8 464.3Z"/>
<path class="s7" fill="#b57d66" d="M1262.1 478.9L1254.5 485.2L1241.1 480.5L1247.3 475.4Z"/>
<path class="s8" fill="#929292" d="M1260.8 464.3L1274.3 468.9L1262.1 478.9L1247.3 475.4Z"/>
<path class="s7" fill="#b77f68" d="M1241.1 480.5L1254.5 485.2L1234.6 500.8L1221.3 496Z"/>
<path class="s7" fill="#b98169" d="M1221.3 496L1234.6 500.8L1214.7 515.8L1201.5 510.8Z"/>
<path class="s6" fill="#717fa7" d="M1194.6 530.1L1194.6 530.1L1194.6 530.1Z"/>
<path class="s7" fill="#bc826a" d="M1201.5 510.8L1214.7 515.8L1194.6 530.1L1181.5 525Z"/>
<path class="s6" fill="#7280a9" d="M1194.6 530.1L1194.6 530.1L1174.4 543.8L1161.4 538.6L1179.7 526.3Z"/>
<path class="s7" fill="#be846c" d="M1181.5 525L1194.6 530.1L1194.6 530.1L1179.7 526.3Z"/>
<path class="s6" fill="#7482ab" d="M1161.4 538.6L1174.4 543.8L1154.2 556.8L1141.3 551.5Z"/>
<path class="s6" fill="#7584ad" d="M1141.3 551.5L1154.2 556.8L1133.8 569.1L1121 563.8Z"/>
<path class="s6" fill="#7785af" d="M1121 563.8L1133.8 569.1L1113.3 580.8L1100.6 575.4Z"/>
<path class="s5" fill="#538135" d="M1106.2 584.6L1092.8 591.8L1080.1 586.3L1091 580.5Z"/>
<path class="s6" fill="#7887b1" d="M1100.6 575.4L1113.3 580.8L1106.2 584.6L1091 580.5Z"/>
<path class="s5" fill="#548336" d="M1080.1 586.3L1092.8 591.8L1072 602.2L1059.5 596.6Z"/>
<path class="s5" fill="#568436" d="M1059.5 596.6L1072 602.2L1051.2 611.9L1038.8 606.2Z"/>
<path class="s5" fill="#578637" d="M1038.8 606.2L1051.2 611.9L1030.3 620.9L1017.9 615.1Z"/>
<path class="s5" fill="#588738" d="M1017.9 615.1L1030.3 620.9L1009.2 629.2L996.9 623.4Z"/>
<path class="s5" fill="#598938" d="M996.9 623.4L1009.2 629.2L987.9 636.8L975.8 630.9Z"/>
<path class="s5" fill="#5a8a39" d="M975.8 630.9L987.9 636.8L966.5 643.8L954.5 637.8Z"/>
<path class="s4" fill="#4a7dac" d="M945 650L945 650L945 650Z"/>
<path class="s5" fill="#5b8c39" d="M954.5 637.8L966.5 643.8L945 650L933 644Z"/>
<path class="s4" fill="#4a7fae" d="M945 650L945 650L923.3 655.5L911.4 649.5L924.4 646.2Z"/>
<path class="s5" fill="#5b8d3a" d="M933 644L945 650L945 650L924.4 646.2Z"/>
<path class="s4" fill="#4b80b0" d="M911.4 649.5L923.3 655.5L901.4 660.4L889.7 654.2Z"/>
<path class="s4" fill="#4c81b1" d="M889.7 654.2L901.4 660.4L879.4 664.5L867.7 658.3Z"/>
<path class="s4" fill="#4c82b3" d="M867.7 658.3L879.4 664.5L857.2 667.8L845.6 661.6Z"/>
<path class="s4" fill="#4d83b5" d="M845.6 661.6L857.2 667.8L834.8 670.5L823.4 664.2Z"/>
<path class="s4" fill="#4e85b6" d="M823.4 664.2L834.8 670.5L812.2 672.4L800.9 666.1Z"/>
<path class="s4" fill="#4e86b8" d="M800.9 666.1L812.2 672.4L789.5 673.5L778.2 667.2Z"/>
<path class="s4" fill="#4f87b9" d="M778.2 667.2L789.5 673.5L766.5 673.9L766.5 673.9L764.5 667.4Z"/>
<path class="s5" fill="#61963e" d="M766.5 673.9L766.5 673.9L755.3 667.5L764.5 667.4Z"/>
<path class="s4" fill="#5088ba" d="M766.5 673.9L766.5 673.9L766.5 673.9Z"/>
<path class="s5" fill="#62973e" d="M755.3 667.5L766.5 673.9L743.3 673.5L732.3 667.1Z"/>
<path class="s5" fill="#63983e" d="M732.3 667.1L743.3 673.5L719.9 672.4L709 665.9Z"/>
<path class="s5" fill="#63993f" d="M709 665.9L719.9 672.4L696.3 670.4L685.5 664Z"/>
<path class="s5" fill="#649a3f" d="M685.5 664L696.3 670.4L672.4 667.6L661.7 661.2Z"/>
<path class="s5" fill="#649b40" d="M661.7 661.2L672.4 667.6L648.3 664.1L637.7 657.6Z"/>
<path class="s5" fill="#659c40" d="M637.7 657.6L648.3 664.1L623.9 659.7L613.5 653.2Z"/>
<path class="s5" fill="#659c40" d="M613.5 653.2L623.9 659.7L599.3 654.5L589 648Z"/>
<path class="s5" fill="#669d40" d="M589 648L599.3 654.5L583.1 650.5L575.9 644.8Z"/>
<path class="s6" fill="#92a4d8" d="M583.1 650.5L574.4 648.4L564.2 641.9L575.9 644.8Z"/>
<path class="s6" fill="#92a5d8" d="M564.2 641.9L574.4 648.4L549.3 641.4L539.2 635Z"/>
<path class="s6" fill="#93a5d9" d="M539.2 635L549.3 641.4L523.9 633.6L513.9 627.2Z"/>
<path class="s6" fill="#93a6da" d="M513.9 627.2L523.9 633.6L498.1 624.9L488.3 618.5Z"/>
<path class="s6" fill="#94a6da" d="M488.3 618.5L498.1 624.9L472.1 615.2L472.1 615.2L464.7 609.8Z"/>
<path class="s7" fill="#f6ab8b" d="M472.1 615.2L472.1 615.2L462.4 608.9L464.7 609.8Z"/>
<path class="s9" fill="#b9985d" d="M1352.8 397.5L1366.8 402.5L1347.2 421.5L1333.3 416.3Z"/>
<path class="s8" fill="#909090" d="M1335 432.8L1327.5 439.8L1313.7 434.5L1318.9 429.6Z"/>
<path class="s9" fill="#bb9a5e" d="M1333.3 416.3L1347.2 421.5L1335 432.8L1318.9 429.6Z"/>
<path class="s8" fill="#929292" d="M1313.7 434.5L1327.5 439.8L1307.7 457.5L1294 452Z"/>
<path class="s8" fill="#939393" d="M1294 452L1307.7 457.5L1287.9 474.5L1274.3 468.9Z"/>
<path class="s7" fill="#b88068" d="M1278.4 482.4L1268 490.9L1254.5 485.2L1262.1 478.9Z"/>
<path class="s8" fill="#959595" d="M1274.3 468.9L1287.9 474.5L1278.4 482.4L1262.1 478.9Z"/>
<path class="s7" fill="#bb816a" d="M1254.5 485.2L1268 490.9L1248.1 506.6L1234.6 500.8Z"/>
<path class="s7" fill="#bd836b" d="M1234.6 500.8L1248.1 506.6L1228 521.7L1214.7 515.8Z"/>
<path class="s6" fill="#7381aa" d="M1211 533.8L1207.9 536.1L1194.6 530.1L1194.6 530.1Z"/>
<path class="s7" fill="#bf856c" d="M1214.7 515.8L1228 521.7L1211 533.8L1194.6 530.1L1194.6 530.1Z"/>
<path class="s6" fill="#7483ac" d="M1194.6 530.1L1207.9 536.1L1187.6 549.9L1174.4 543.8Z"/>
<path class="s7" fill="#c2866e" d="M1194.6 530.1L1194.6 530.1L1194.6 530.1Z"/>
<path class="s6" fill="#7684ae" d="M1174.4 543.8L1187.6 549.9L1167.3 563L1154.2 556.8Z"/>
<path class="s6" fill="#7786b0" d="M1154.2 556.8L1167.3 563L1146.8 575.4L1133.8 569.1Z"/>
<path class="s6" fill="#7988b3" d="M1133.8 569.1L1146.8 575.4L1126.2 587.2L1113.3 580.8Z"/>
<path class="s5" fill="#558336" d="M1123.7 588.5L1105.6 598.3L1092.8 591.8L1106.2 584.6Z"/>
<path class="s6" fill="#7a8ab5" d="M1113.3 580.8L1126.2 587.2L1123.7 588.5L1106.2 584.6Z"/>
<path class="s5" fill="#568537" d="M1092.8 591.8L1105.6 598.3L1084.8 608.8L1072 602.2Z"/>
<path class="s5" fill="#578737" d="M1072 602.2L1084.8 608.8L1063.8 618.5L1051.2 611.9Z"/>
<path class="s5" fill="#588838" d="M1051.2 611.9L1063.8 618.5L1042.8 627.6L1030.3 620.9Z"/>
<path class="s5" fill="#598a39" d="M1030.3 620.9L1042.8 627.6L1021.6 636L1009.2 629.2Z"/>
<path class="s5" fill="#5a8b39" d="M1009.2 629.2L1021.6 636L1000.2 643.7L987.9 636.8Z"/>
<path class="s5" fill="#5b8d3a" d="M987.9 636.8L1000.2 643.7L978.8 650.7L966.5 643.8Z"/>
<path class="s4" fill="#4b80af" d="M969.6 653.4L957.1 657L945 650L945 650Z"/>
<path class="s5" fill="#5c8e3b" d="M966.5 643.8L978.8 650.7L969.6 653.4L945 650L945 650Z"/>
<path class="s4" fill="#4c81b1" d="M945 650L957.1 657L935.3 662.6L923.3 655.5Z"/>
<path class="s5" fill="#5d903b" d="M945 650L945 650L945 650Z"/>
<path class="s4" fill="#4c82b3" d="M923.3 655.5L935.3 662.6L913.4 667.5L901.4 660.4Z"/>
<path class="s4" fill="#4d83b5" d="M901.4 660.4L913.4 667.5L891.2 671.7L879.4 664.5Z"/>
<path class="s4" fill="#4e85b6" d="M879.4 664.5L891.2 671.7L868.9 675.1L857.2 667.8Z"/>
<path class="s4" fill="#4f86b8" d="M857.2 667.8L868.9 675.1L846.4 677.8L834.8 670.5Z"/>
<path class="s4" fill="#4f87b9" d="M834.8 670.5L846.4 677.8L823.8 679.7L812.2 672.4Z"/>
<path class="s4" fill="#5088bb" d="M812.2 672.4L823.8 679.7L800.9 680.9L789.5 673.5Z"/>
<path class="s4" fill="#5089bc" d="M789.5 673.5L800.9 680.9L777.8 681.3L766.5 673.9Z"/>
<path class="s5" fill="#63993f" d="M766.5 673.9L766.5 673.9L766.5 673.9Z"/>
<path class="s4" fill="#518abd" d="M766.5 673.9L777.8 681.3L764.4 681.1L766.5 673.9Z"/>
<path class="s5" fill="#649a3f" d="M766.5 673.9L766.5 673.9L764.4 681.1L754.5 681L743.3 673.5Z"/>
<path class="s5" fill="#649b40" d="M743.3 673.5L754.5 681L731 679.8L719.9 672.4Z"/>
<path class="s5" fill="#659c40" d="M719.9 672.4L731 679.8L707.2 677.9L696.3 670.4Z"/>
<path class="s5" fill="#659d40" d="M696.3 670.4L707.2 677.9L683.3 675.1L672.4 667.6Z"/>
<path class="s5" fill="#669d41" d="M672.4 667.6L683.3 675.1L659 671.6L648.3 664.1Z"/>
<path class="s5" fill="#669e41" d="M648.3 664.1L659 671.6L634.6 667.2L623.9 659.7Z"/>
<path class="s5" fill="#679f41" d="M623.9 659.7L634.6 667.2L609.8 662L599.3 654.5Z"/>
<path class="s5" fill="#679f41" d="M599.3 654.5L609.8 662L587.9 656.6L583.1 650.5Z"/>
<path class="s6" fill="#94a7db" d="M587.9 656.6L584.8 655.9L574.4 648.4L583.1 650.5Z"/>
<path class="s6" fill="#95a7dc" d="M574.4 648.4L584.8 655.9L559.6 648.9L549.3 641.4Z"/>
<path class="s6" fill="#95a8dc" d="M549.3 641.4L559.6 648.9L534 641.1L523.9 633.6Z"/>
<path class="s6" fill="#95a8dd" d="M523.9 633.6L534 641.1L508.1 632.3L498.1 624.9Z"/>
<path class="s6" fill="#96a8dd" d="M498.1 624.9L508.1 632.3L481.9 622.7L472.1 615.2Z"/>
<path class="s7" fill="#f9ad8d" d="M472.1 615.2L472.1 615.2L472.1 615.2Z"/>
<path class="s9" fill="#bc9b5f" d="M1366.8 402.5L1380.9 408.5L1361.2 427.6L1347.2 421.5Z"/>
<path class="s8" fill="#929292" d="M1352.3 435.9L1341.4 446L1327.5 439.8L1335 432.8Z"/>
<path class="s9" fill="#be9d60" d="M1347.2 421.5L1361.2 427.6L1352.3 435.9L1335 432.8Z"/>
<path class="s8" fill="#949494" d="M1327.5 439.8L1341.4 446L1321.6 463.8L1307.7 457.5Z"/>
<path class="s8" fill="#969696" d="M1307.7 457.5L1321.6 463.8L1301.7 481L1287.9 474.5Z"/>
<path class="s7" fill="#bc826a" d="M1296 485.7L1281.7 497.5L1268 490.9L1278.4 482.4Z"/>
<path class="s8" fill="#989898" d="M1287.9 474.5L1301.7 481L1296 485.7L1278.4 482.4Z"/>
<path class="s7" fill="#be846c" d="M1268 490.9L1281.7 497.5L1261.7 513.3L1248.1 506.6Z"/>
<path class="s7" fill="#c0866d" d="M1248.1 506.6L1261.7 513.3L1241.5 528.5L1228 521.7Z"/>
<path class="s6" fill="#7584ad" d="M1229.1 537.4L1221.3 543L1207.9 536.1L1211 533.8Z"/>
<path class="s7" fill="#c3876f" d="M1228 521.7L1241.5 528.5L1229.1 537.4L1211 533.8Z"/>
<path class="s6" fill="#7785af" d="M1207.9 536.1L1221.3 543L1200.9 556.9L1187.6 549.9Z"/>
<path class="s6" fill="#7887b1" d="M1187.6 549.9L1200.9 556.9L1180.5 570.1L1167.3 563Z"/>
<path class="s6" fill="#7a89b4" d="M1167.3 563L1180.5 570.1L1159.9 582.7L1146.8 575.4Z"/>
<path class="s5" fill="#568436" d="M1143.3 592.3L1139.3 594.6L1131 589.9Z"/>
<path class="s6" fill="#7b8ab6" d="M1146.8 575.4L1159.9 582.7L1143.3 592.3L1131 589.9L1126.2 587.2Z"/>
<path class="s5" fill="#578637" d="M1131 589.9L1139.3 594.6L1118.5 605.8L1105.6 598.3L1123.7 588.5Z"/>
<path class="s6" fill="#7d8cb8" d="M1126.2 587.2L1131 589.9L1123.7 588.5Z"/>
<path class="s5" fill="#588838" d="M1105.6 598.3L1118.5 605.8L1097.6 616.3L1084.8 608.8Z"/>
<path class="s5" fill="#598938" d="M1084.8 608.8L1097.6 616.3L1076.6 626.2L1063.8 618.5Z"/>
<path class="s5" fill="#5a8b39" d="M1063.8 618.5L1076.6 626.2L1055.4 635.3L1042.8 627.6Z"/>
<path class="s5" fill="#5b8c3a" d="M1042.8 627.6L1055.4 635.3L1034.2 643.8L1021.6 636Z"/>
<path class="s5" fill="#5c8e3a" d="M1021.6 636L1034.2 643.8L1012.7 651.6L1000.2 643.7Z"/>
<path class="s4" fill="#4c81b1" d="M998.6 656.2L991.2 658.7L984.9 654.7Z"/>
<path class="s5" fill="#5d8f3b" d="M1000.2 643.7L1012.7 651.6L998.6 656.2L984.9 654.7L978.8 650.7Z"/>
<path class="s4" fill="#4c82b2" d="M984.9 654.7L991.2 658.7L969.4 665L957.1 657L969.6 653.4Z"/>
<path class="s5" fill="#5e913c" d="M978.8 650.7L984.9 654.7L969.6 653.4Z"/>
<path class="s4" fill="#4d83b4" d="M957.1 657L969.4 665L947.5 670.7L935.3 662.6Z"/>
<path class="s4" fill="#4e85b6" d="M935.3 662.6L947.5 670.7L925.5 675.6L913.4 667.5Z"/>
<path class="s4" fill="#4f86b8" d="M913.4 667.5L925.5 675.6L903.2 679.9L891.2 671.7Z"/>
<path class="s4" fill="#4f87b9" d="M891.2 671.7L903.2 679.9L880.8 683.3L868.9 675.1Z"/>
<path class="s4" fill="#5088bb" d="M868.9 675.1L880.8 683.3L858.2 686.1L846.4 677.8Z"/>
<path class="s4" fill="#5189bc" d="M846.4 677.8L858.2 686.1L835.5 688.1L823.8 679.7Z"/>
<path class="s4" fill="#518abe" d="M823.8 679.7L835.5 688.1L812.5 689.3L800.9 680.9Z"/>
<path class="s4" fill="#528bbf" d="M800.9 680.9L812.5 689.3L789.3 689.7L777.8 681.3Z"/>
<path class="s4" fill="#528cc0" d="M777.8 681.3L789.3 689.7L765.9 689.4L760.2 685.2L764.4 681.1Z"/>
<path class="s5" fill="#659c40" d="M760.2 685.2L754.5 681L764.4 681.1Z"/>
<path class="s4" fill="#538dc2" d="M760.2 685.2L765.9 689.4L757.7 689Z"/>
<path class="s5" fill="#669d41" d="M754.5 681L760.2 685.2L757.7 689L742.3 688.3L731 679.8Z"/>
<path class="s5" fill="#669e41" d="M731 679.8L742.3 688.3L718.4 686.4L707.2 677.9Z"/>
<path class="s5" fill="#679f41" d="M707.2 677.9L718.4 686.4L694.3 683.7L683.3 675.1Z"/>
<path class="s5" fill="#67a042" d="M683.3 675.1L694.3 683.7L670 680.1L659 671.6Z"/>
<path class="s5" fill="#68a042" d="M659 671.6L670 680.1L645.4 675.8L634.6 667.2Z"/>
<path class="s5" fill="#68a142" d="M634.6 667.2L645.4 675.8L620.5 670.5L609.8 662Z"/>
<path class="s5" fill="#69a242" d="M609.8 662L620.5 670.5L595.4 664.4L588.7 659L587.9 656.6Z"/>
<path class="s6" fill="#96a9de" d="M588.7 659L584.8 655.9L587.9 656.6Z"/>
<path class="s5" fill="#69a243" d="M588.7 659L595.4 664.4L590.5 663.1Z"/>
<path class="s6" fill="#97aadf" d="M584.8 655.9L588.7 659L590.5 663.1L570 657.5L559.6 648.9Z"/>
<path class="s6" fill="#97aae0" d="M559.6 648.9L570 657.5L544.3 649.6L534 641.1Z"/>
<path class="s6" fill="#98aae0" d="M534 641.1L544.3 649.6L518.3 640.9L508.1 632.3Z"/>
<path class="s6" fill="#98abe0" d="M508.1 632.3L518.3 640.9L492 631.2L481.9 622.7Z"/>
<path class="s9" fill="#bf9e60" d="M1380.9 408.5L1395.2 415.5L1375.4 434.7L1361.2 427.6Z"/>
<path class="s8" fill="#959595" d="M1370.9 438.9L1355.5 453.3L1341.4 446L1352.3 435.9Z"/>
<path class="s9" fill="#c2a062" d="M1361.2 427.6L1375.4 434.7L1370.9 438.9L1352.3 435.9Z"/>
<path class="s8" fill="#979797" d="M1341.4 446L1355.5 453.3L1335.6 471.2L1321.6 463.8Z"/>
<path class="s8" fill="#999999" d="M1321.6 463.8L1335.6 471.2L1315.6 488.4L1301.7 481Z"/>
<path class="s7" fill="#bf856c" d="M1315 489L1295.6 505.1L1281.7 497.5L1296 485.7Z"/>
<path class="s8" fill="#9b9b9b" d="M1301.7 481L1315.6 488.4L1315 489L1296 485.7Z"/>
<path class="s7" fill="#c2866e" d="M1281.7 497.5L1295.6 505.1L1275.4 521L1261.7 513.3Z"/>
<path class="s7" fill="#c4886f" d="M1261.7 513.3L1275.4 521L1255.2 536.3L1241.5 528.5Z"/>
<path class="s6" fill="#7786b0" d="M1248.9 540.8L1234.8 551L1221.3 543L1229.1 537.4Z"/>
<path class="s7" fill="#c68a71" d="M1241.5 528.5L1255.2 536.3L1248.9 540.8L1229.1 537.4Z"/>
<path class="s6" fill="#7988b2" d="M1221.3 543L1234.8 551L1214.4 565L1200.9 556.9Z"/>
<path class="s6" fill="#7a89b5" d="M1200.9 556.9L1214.4 565L1193.9 578.3L1180.5 570.1Z"/>
<path class="s6" fill="#7c8bb7" d="M1180.5 570.1L1193.9 578.3L1173.2 590.9L1159.9 582.7Z"/>
<path class="s5" fill="#578737" d="M1164.8 595.8L1152.5 602.9L1139.3 594.6L1143.3 592.3Z"/>
<path class="s6" fill="#7d8db9" d="M1159.9 582.7L1173.2 590.9L1164.8 595.8L1143.3 592.3Z"/>
<path class="s5" fill="#588838" d="M1139.3 594.6L1152.5 602.9L1131.6 614.2L1118.5 605.8Z"/>
<path class="s5" fill="#598a39" d="M1118.5 605.8L1131.6 614.2L1110.6 624.8L1097.6 616.3Z"/>
<path class="s5" fill="#5b8c39" d="M1097.6 616.3L1110.6 624.8L1089.5 634.8L1076.6 626.2Z"/>
<path class="s5" fill="#5c8d3a" d="M1076.6 626.2L1089.5 634.8L1068.3 644L1055.4 635.3Z"/>
<path class="s5" fill="#5d8f3b" d="M1055.4 635.3L1068.3 644L1046.9 652.6L1034.2 643.8Z"/>
<path class="s4" fill="#4c81b2" d="M1030 658.8L1025.4 660.5L1021.8 658Z"/>
<path class="s5" fill="#5e903b" d="M1034.2 643.8L1046.9 652.6L1030 658.8L1021.8 658L1012.7 651.6Z"/>
<path class="s4" fill="#4d83b4" d="M1021.8 658L1025.4 660.5L1003.7 667.6L991.2 658.7L998.6 656.2Z"/>
<path class="s5" fill="#5f923c" d="M1012.7 651.6L1021.8 658L998.6 656.2Z"/>
<path class="s4" fill="#4e84b6" d="M991.2 658.7L1003.7 667.6L981.9 674.1L969.4 665Z"/>
<path class="s4" fill="#4f86b7" d="M969.4 665L981.9 674.1L959.9 679.8L947.5 670.7Z"/>
<path class="s4" fill="#4f87b9" d="M947.5 670.7L959.9 679.8L937.7 684.8L925.5 675.6Z"/>
<path class="s4" fill="#5088bb" d="M925.5 675.6L937.7 684.8L915.4 689.1L903.2 679.9Z"/>
<path class="s4" fill="#5189bc" d="M903.2 679.9L915.4 689.1L892.9 692.6L880.8 683.3Z"/>
<path class="s4" fill="#518abe" d="M880.8 683.3L892.9 692.6L870.2 695.4L858.2 686.1Z"/>
<path class="s4" fill="#528bbf" d="M858.2 686.1L870.2 695.4L847.3 697.5L835.5 688.1Z"/>
<path class="s4" fill="#528cc1" d="M835.5 688.1L847.3 697.5L824.2 698.7L812.5 689.3Z"/>
<path class="s4" fill="#538dc2" d="M812.5 689.3L824.2 698.7L800.9 699.2L789.3 689.7Z"/>
<path class="s4" fill="#548ec3" d="M789.3 689.7L800.9 699.2L777.4 699L765.9 689.4Z"/>
<path class="s4" fill="#548fc4" d="M765.9 689.4L777.4 699L753.7 697.9L750.5 695.2L757.7 689Z"/>
<path class="s5" fill="#67a042" d="M750.5 695.2L742.3 688.3L757.7 689Z"/>
<path class="s4" fill="#5490c6" d="M750.5 695.2L753.7 697.9L748.5 697.5Z"/>
<path class="s5" fill="#68a042" d="M742.3 688.3L750.5 695.2L748.5 697.5L729.7 696L718.4 686.4Z"/>
<path class="s5" fill="#68a142" d="M718.4 686.4L729.7 696L705.5 693.3L694.3 683.7Z"/>
<path class="s5" fill="#69a242" d="M694.3 683.7L705.5 693.3L681.1 689.8L670 680.1Z"/>
<path class="s5" fill="#69a343" d="M670 680.1L681.1 689.8L656.4 685.4L645.4 675.8Z"/>
<path class="s5" fill="#6aa343" d="M645.4 675.8L656.4 685.4L631.4 680.2L620.5 670.5Z"/>
<path class="s5" fill="#6aa443" d="M620.5 670.5L631.4 680.2L606.2 674.1L595.4 664.4Z"/>
<path class="s5" fill="#6aa443" d="M595.4 664.4L606.2 674.1L591.1 670L590.5 663.1Z"/>
<path class="s6" fill="#99ace2" d="M591.1 670L580.6 667.2L570 657.5L590.5 663.1Z"/>
<path class="s6" fill="#99ace3" d="M570 657.5L580.6 667.2L554.8 659.3L544.3 649.6Z"/>
<path class="s6" fill="#9aade3" d="M544.3 649.6L554.8 659.3L528.7 650.5L518.3 640.9Z"/>
<path class="s6" fill="#9aade3" d="M518.3 640.9L528.7 650.5L502.2 640.8L492 631.2Z"/>
<path class="s8" fill="#969696" d="M1390.6 441.8L1389.7 442.7L1387.2 441.3Z"/>
<path class="s9" fill="#c3a162" d="M1395.2 415.5L1409.6 423.4L1390.6 441.8L1387.2 441.3L1375.4 434.7Z"/>
<path class="s8" fill="#989898" d="M1387.2 441.3L1389.7 442.7L1369.8 461.5L1355.5 453.3L1370.9 438.9Z"/>
<path class="s9" fill="#c5a363" d="M1375.4 434.7L1387.2 441.3L1370.9 438.9Z"/>
<path class="s8" fill="#9a9a9a" d="M1355.5 453.3L1369.8 461.5L1349.8 479.5L1335.6 471.2Z"/>
<path class="s7" fill="#c0856d" d="M1335.2 492.1L1329.7 496.9L1317 489.3Z"/>
<path class="s8" fill="#9c9c9c" d="M1335.6 471.2L1349.8 479.5L1335.2 492.1L1317 489.3L1315.6 488.4Z"/>
<path class="s7" fill="#c2876e" d="M1317 489.3L1329.7 496.9L1309.5 513.6L1295.6 505.1L1315 489Z"/>
<path class="s8" fill="#9d9d9d" d="M1315.6 488.4L1317 489.3L1315 489Z"/>
<path class="s7" fill="#c58970" d="M1295.6 505.1L1309.5 513.6L1289.3 529.7L1275.4 521Z"/>
<path class="s6" fill="#7887b1" d="M1270.2 544.2L1269 545.1L1266.5 543.6Z"/>
<path class="s7" fill="#c78a71" d="M1275.4 521L1289.3 529.7L1270.2 544.2L1266.5 543.6L1255.2 536.3Z"/>
<path class="s6" fill="#7988b3" d="M1266.5 543.6L1269 545.1L1248.5 559.9L1234.8 551L1248.9 540.8Z"/>
<path class="s7" fill="#ca8c73" d="M1255.2 536.3L1266.5 543.6L1248.9 540.8Z"/>
<path class="s6" fill="#7b8ab6" d="M1234.8 551L1248.5 559.9L1228 574L1214.4 565Z"/>
<path class="s6" fill="#7c8cb8" d="M1214.4 565L1228 574L1207.4 587.4L1193.9 578.3Z"/>
<path class="s5" fill="#588738" d="M1188.4 599.1L1186.7 600.2L1184.3 598.5Z"/>
<path class="s6" fill="#7e8eba" d="M1193.9 578.3L1207.4 587.4L1188.4 599.1L1184.3 598.5L1173.2 590.9Z"/>
<path class="s5" fill="#598938" d="M1184.3 598.5L1186.7 600.2L1165.8 612.3L1152.5 602.9L1164.8 595.8Z"/>
<path class="s6" fill="#808fbc" d="M1173.2 590.9L1184.3 598.5L1164.8 595.8Z"/>
<path class="s5" fill="#5a8b39" d="M1152.5 602.9L1165.8 612.3L1144.9 623.7L1131.6 614.2Z"/>
<path class="s5" fill="#5b8c3a" d="M1131.6 614.2L1144.9 623.7L1123.8 634.4L1110.6 624.8Z"/>
<path class="s5" fill="#5c8e3b" d="M1110.6 624.8L1123.8 634.4L1102.6 644.4L1089.5 634.8Z"/>
<path class="s5" fill="#5d903b" d="M1089.5 634.8L1102.6 644.4L1081.3 653.8L1068.3 644Z"/>
<path class="s4" fill="#4d82b3" d="M1063 661.2L1059.8 662.4L1057.5 660.7Z"/>
<path class="s5" fill="#5e913c" d="M1068.3 644L1081.3 653.8L1063 661.2L1057.5 660.7L1046.9 652.6Z"/>
<path class="s4" fill="#4e84b5" d="M1057.5 660.7L1059.8 662.4L1038.2 670.4L1025.4 660.5L1030 658.8Z"/>
<path class="s5" fill="#5f933d" d="M1046.9 652.6L1057.5 660.7L1030 658.8Z"/>
<path class="s4" fill="#4e85b7" d="M1025.4 660.5L1038.2 670.4L1016.4 677.6L1003.7 667.6Z"/>
<path class="s4" fill="#4f87b9" d="M1003.7 667.6L1016.4 677.6L994.5 684.1L981.9 674.1Z"/>
<path class="s4" fill="#5088ba" d="M981.9 674.1L994.5 684.1L972.4 689.9L959.9 679.8Z"/>
<path class="s4" fill="#5189bc" d="M959.9 679.8L972.4 689.9L950.2 695L937.7 684.8Z"/>
<path class="s4" fill="#518abe" d="M937.7 684.8L950.2 695L927.7 699.4L915.4 689.1Z"/>
<path class="s4" fill="#528bbf" d="M915.4 689.1L927.7 699.4L905.1 703L892.9 692.6Z"/>
<path class="s4" fill="#538cc1" d="M892.9 692.6L905.1 703L882.3 705.8L870.2 695.4Z"/>
<path class="s4" fill="#538dc2" d="M870.2 695.4L882.3 705.8L859.3 707.9L847.3 697.5Z"/>
<path class="s4" fill="#548ec4" d="M847.3 697.5L859.3 707.9L836.2 709.3L824.2 698.7Z"/>
<path class="s4" fill="#548fc5" d="M824.2 698.7L836.2 709.3L812.8 709.8L800.9 699.2Z"/>
<path class="s4" fill="#5590c6" d="M800.9 699.2L812.8 709.8L789.1 709.6L777.4 699Z"/>
<path class="s4" fill="#5591c7" d="M777.4 699L789.1 709.6L765.3 708.5L753.7 697.9Z"/>
<path class="s4" fill="#5692c8" d="M753.7 697.9L765.3 708.5L741.2 706.7L739.2 704.8L748.5 697.5Z"/>
<path class="s5" fill="#69a343" d="M739.2 704.8L729.7 696L748.5 697.5Z"/>
<path class="s4" fill="#5692c9" d="M739.2 704.8L741.2 706.7L737.7 706.3Z"/>
<path class="s5" fill="#6aa343" d="M729.7 696L739.2 704.8L737.7 706.3L716.9 704L705.5 693.3Z"/>
<path class="s5" fill="#6aa443" d="M705.5 693.3L716.9 704L692.4 700.5L681.1 689.8Z"/>
<path class="s5" fill="#6ba544" d="M681.1 689.8L692.4 700.5L667.5 696.2L656.4 685.4Z"/>
<path class="s5" fill="#6ba544" d="M656.4 685.4L667.5 696.2L642.5 691L631.4 680.2Z"/>
<path class="s5" fill="#6ba644" d="M631.4 680.2L642.5 691L617.1 684.9L606.2 674.1Z"/>
<path class="s5" fill="#6ca644" d="M606.2 674.1L617.1 684.9L591.4 678L589.5 676L591.1 670Z"/>
<path class="s6" fill="#9baee5" d="M589.5 676L580.6 667.2L591.1 670Z"/>
<path class="s5" fill="#6ca744" d="M589.5 676L591.4 678L589.3 677.3Z"/>
<path class="s6" fill="#9baee5" d="M580.6 667.2L589.5 676L589.3 677.3L565.5 670.1L554.8 659.3Z"/>
<path class="s6" fill="#9bafe6" d="M554.8 659.3L565.5 670.1L539.2 661.3L528.7 650.5Z"/>
<path class="s6" fill="#9cafe6" d="M528.7 650.5L539.2 661.3L512.7 651.6L502.2 640.8Z"/>
<path class="s8" fill="#989898" d="M1411.4 444.7L1404.2 451.8L1389.7 442.7L1390.6 441.8Z"/>
<path class="s9" fill="#c6a464" d="M1409.6 423.4L1424.1 432.3L1411.4 444.7L1390.6 441.8Z"/>
<path class="s8" fill="#9a9a9a" d="M1389.7 442.7L1404.2 451.8L1384.2 470.6L1369.8 461.5Z"/>
<path class="s8" fill="#9c9c9c" d="M1369.8 461.5L1384.2 470.6L1364.1 488.8L1349.8 479.5Z"/>
<path class="s7" fill="#c3886f" d="M1356.7 495.2L1343.9 506.3L1329.7 496.9L1335.2 492.1Z"/>
<path class="s8" fill="#9e9e9e" d="M1349.8 479.5L1364.1 488.8L1356.7 495.2L1335.2 492.1Z"/>
<path class="s7" fill="#c68970" d="M1329.7 496.9L1343.9 506.3L1323.7 523.2L1309.5 513.6Z"/>
<path class="s7" fill="#c88b72" d="M1309.5 513.6L1323.7 523.2L1303.3 539.4L1289.3 529.7Z"/>
<path class="s6" fill="#7a89b4" d="M1292.8 547.4L1282.9 555L1269 545.1L1270.2 544.2Z"/>
<path class="s7" fill="#cb8d73" d="M1289.3 529.7L1303.3 539.4L1292.8 547.4L1270.2 544.2Z"/>
<path class="s6" fill="#7b8bb6" d="M1269 545.1L1282.9 555L1262.4 569.8L1248.5 559.9Z"/>
<path class="s6" fill="#7d8cb9" d="M1248.5 559.9L1262.4 569.8L1241.8 584L1228 574Z"/>
<path class="s6" fill="#7f8ebb" d="M1228 574L1241.8 584L1221.1 597.6L1207.4 587.4Z"/>
<path class="s5" fill="#598a39" d="M1213.4 602.3L1200.3 610.5L1186.7 600.2L1188.4 599.1Z"/>
<path class="s6" fill="#8090bd" d="M1207.4 587.4L1221.1 597.6L1213.4 602.3L1188.4 599.1Z"/>
<path class="s5" fill="#5a8b3a" d="M1186.7 600.2L1200.3 610.5L1179.3 622.6L1165.8 612.3Z"/>
<path class="s5" fill="#5c8d3a" d="M1165.8 612.3L1179.3 622.6L1158.3 634.2L1144.9 623.7Z"/>
<path class="s5" fill="#5d8f3b" d="M1144.9 623.7L1158.3 634.2L1137.1 645L1123.8 634.4Z"/>
<path class="s5" fill="#5e913c" d="M1123.8 634.4L1137.1 645L1115.8 655.1L1102.6 644.4Z"/>
<path class="s4" fill="#4d83b4" d="M1097 663.4L1094.4 664.6L1092.6 663.1Z"/>
<path class="s5" fill="#5f923c" d="M1102.6 644.4L1115.8 655.1L1097 663.4L1092.6 663.1L1081.3 653.8Z"/>
<path class="s4" fill="#4e85b6" d="M1092.6 663.1L1094.4 664.6L1072.9 673.3L1059.8 662.4L1063 661.2Z"/>
<path class="s5" fill="#60943d" d="M1081.3 653.8L1092.6 663.1L1063 661.2Z"/>
<path class="s4" fill="#4f86b8" d="M1059.8 662.4L1072.9 673.3L1051.2 681.3L1038.2 670.4Z"/>
<path class="s4" fill="#5087ba" d="M1038.2 670.4L1051.2 681.3L1029.3 688.7L1016.4 677.6Z"/>
<path class="s4" fill="#5189bc" d="M1016.4 677.6L1029.3 688.7L1007.3 695.3L994.5 684.1Z"/>
<path class="s4" fill="#518abd" d="M994.5 684.1L1007.3 695.3L985.1 701.2L972.4 689.9Z"/>
<path class="s4" fill="#528bbf" d="M972.4 689.9L985.1 701.2L962.8 706.3L950.2 695Z"/>
<path class="s4" fill="#538cc1" d="M950.2 695L962.8 706.3L940.2 710.7L927.7 699.4Z"/>
<path class="s4" fill="#538ec2" d="M927.7 699.4L940.2 710.7L917.5 714.4L905.1 703Z"/>
<path class="s4" fill="#548fc4" d="M905.1 703L917.5 714.4L894.6 717.3L882.3 705.8Z"/>
<path class="s4" fill="#5490c5" d="M882.3 705.8L894.6 717.3L871.5 719.5L859.3 707.9Z"/>
<path class="s4" fill="#5591c6" d="M859.3 707.9L871.5 719.5L848.3 720.9L836.2 709.3Z"/>
<path class="s4" fill="#5591c8" d="M836.2 709.3L848.3 720.9L824.8 721.5L812.8 709.8Z"/>
<path class="s4" fill="#5692c9" d="M812.8 709.8L824.8 721.5L801 721.3L789.1 709.6Z"/>
<path class="s4" fill="#5693ca" d="M789.1 709.6L801 721.3L777.1 720.3L765.3 708.5Z"/>
<path class="s4" fill="#5794cb" d="M765.3 708.5L777.1 720.3L752.9 718.5L741.2 706.7Z"/>
<path class="s4" fill="#5794cc" d="M741.2 706.7L752.9 718.5L728.5 715.9L726.9 714.2L737.7 706.3Z"/>
<path class="s5" fill="#6ba644" d="M726.9 714.2L716.9 704L737.7 706.3Z"/>
<path class="s4" fill="#5795cd" d="M726.9 714.2L728.5 715.9L725.6 715.5Z"/>
<path class="s5" fill="#6ca644" d="M716.9 704L726.9 714.2L725.6 715.5L703.8 712.4L692.4 700.5Z"/>
<path class="s5" fill="#6ca745" d="M692.4 700.5L703.8 712.4L678.9 708.1L667.5 696.2Z"/>
<path class="s5" fill="#6ca745" d="M667.5 696.2L678.9 708.1L653.7 702.9L642.5 691Z"/>
<path class="s5" fill="#6da845" d="M642.5 691L653.7 702.9L628.2 696.9L617.1 684.9Z"/>
<path class="s5" fill="#6da845" d="M617.1 684.9L628.2 696.9L602.4 689.9L591.4 678Z"/>
<path class="s5" fill="#6da945" d="M591.4 678L602.4 689.9L586.1 685L589.3 677.3Z"/>
<path class="s6" fill="#9db1e8" d="M586.1 685L576.4 682.1L565.5 670.1L589.3 677.3Z"/>
<path class="s6" fill="#9db1e9" d="M565.5 670.1L576.4 682.1L550 673.3L539.2 661.3Z"/>
<path class="s6" fill="#9eb1e9" d="M539.2 661.3L550 673.3L523.3 663.6L512.7 651.6Z"/>
<path class="s8" fill="#9b9b9b" d="M1433.4 447.6L1418.8 461.9L1404.2 451.8L1411.4 444.7Z"/>
<path class="s9" fill="#c9a665" d="M1424.1 432.3L1438.8 442.2L1433.4 447.6L1411.4 444.7Z"/>
<path class="s8" fill="#9d9d9d" d="M1404.2 451.8L1418.8 461.9L1398.7 480.8L1384.2 470.6Z"/>
<path class="s7" fill="#c4886f" d="M1379.5 498.2L1378.5 499.1L1376.7 497.8Z"/>
<path class="s8" fill="#9f9f9f" d="M1384.2 470.6L1398.7 480.8L1379.5 498.2L1376.7 497.8L1364.1 488.8Z"/>
<path class="s7" fill="#c78a71" d="M1376.7 497.8L1378.5 499.1L1358.3 516.8L1343.9 506.3L1356.7 495.2Z"/>
<path class="s8" fill="#a1a1a1" d="M1364.1 488.8L1376.7 497.8L1356.7 495.2Z"/>
<path class="s7" fill="#c98c72" d="M1343.9 506.3L1358.3 516.8L1337.9 533.8L1323.7 523.2Z"/>
<path class="s7" fill="#cc8d74" d="M1323.7 523.2L1337.9 533.8L1317.5 550.1L1303.3 539.4Z"/>
<path class="s6" fill="#7c8bb7" d="M1317 550.5L1297 565.8L1282.9 555L1292.8 547.4Z"/>
<path class="s7" fill="#ce8f75" d="M1303.3 539.4L1317.5 550.1L1317 550.5L1292.8 547.4Z"/>
<path class="s6" fill="#7d8db9" d="M1282.9 555L1297 565.8L1276.4 580.8L1262.4 569.8Z"/>
<path class="s6" fill="#7f8fbc" d="M1262.4 569.8L1276.4 580.8L1255.7 595.1L1241.8 584Z"/>
<path class="s5" fill="#5a8a39" d="M1240.1 605.4L1234.9 608.8L1229.1 604.1Z"/>
<path class="s6" fill="#8191be" d="M1241.8 584L1255.7 595.1L1240.1 605.4L1229.1 604.1L1221.1 597.6Z"/>
<path class="s5" fill="#5b8c3a" d="M1229.1 604.1L1234.9 608.8L1214 621.8L1200.3 610.5L1213.4 602.3Z"/>
<path class="s6" fill="#8292c0" d="M1221.1 597.6L1229.1 604.1L1213.4 602.3Z"/>
<path class="s5" fill="#5c8e3b" d="M1200.3 610.5L1214 621.8L1193 634.1L1179.3 622.6Z"/>
<path class="s5" fill="#5d903b" d="M1179.3 622.6L1193 634.1L1171.9 645.7L1158.3 634.2Z"/>
<path class="s5" fill="#5e913c" d="M1158.3 634.2L1171.9 645.7L1150.6 656.6L1137.1 645Z"/>
<path class="s4" fill="#4e84b5" d="M1131.7 665.7L1129.2 666.8L1127.5 665.3Z"/>
<path class="s5" fill="#60933d" d="M1137.1 645L1150.6 656.6L1131.7 665.7L1127.5 665.3L1115.8 655.1Z"/>
<path class="s4" fill="#4f85b7" d="M1127.5 665.3L1129.2 666.8L1107.7 676.4L1094.4 664.6L1097 663.4Z"/>
<path class="s5" fill="#61953e" d="M1115.8 655.1L1127.5 665.3L1097 663.4Z"/>
<path class="s4" fill="#5087b9" d="M1094.4 664.6L1107.7 676.4L1086.1 685.2L1072.9 673.3Z"/>
<path class="s4" fill="#5188bb" d="M1072.9 673.3L1086.1 685.2L1064.3 693.4L1051.2 681.3Z"/>
<path class="s4" fill="#518abd" d="M1051.2 681.3L1064.3 693.4L1042.3 700.8L1029.3 688.7Z"/>
<path class="s4" fill="#528bbf" d="M1029.3 688.7L1042.3 700.8L1020.2 707.5L1007.3 695.3Z"/>
<path class="s4" fill="#538cc1" d="M1007.3 695.3L1020.2 707.5L998 713.4L985.1 701.2Z"/>
<path class="s4" fill="#548ec2" d="M985.1 701.2L998 713.4L975.5 718.7L962.8 706.3Z"/>
<path class="s4" fill="#548fc4" d="M962.8 706.3L975.5 718.7L952.9 723.2L940.2 710.7Z"/>
<path class="s4" fill="#5590c5" d="M940.2 710.7L952.9 723.2L930.1 726.9L917.5 714.4Z"/>
<path class="s4" fill="#5591c7" d="M917.5 714.4L930.1 726.9L907.1 729.9L894.6 717.3Z"/>
<path class="s4" fill="#5692c8" d="M894.6 717.3L907.1 729.9L883.9 732.1L871.5 719.5Z"/>
<path class="s4" fill="#5693c9" d="M871.5 719.5L883.9 732.1L860.5 733.6L848.3 720.9Z"/>
<path class="s4" fill="#5793ca" d="M848.3 720.9L860.5 733.6L836.9 734.2L824.8 721.5Z"/>
<path class="s4" fill="#5794cb" d="M824.8 721.5L836.9 734.2L813.1 734.1L801 721.3Z"/>
<path class="s4" fill="#5895cc" d="M801 721.3L813.1 734.1L789.1 733.2L777.1 720.3Z"/>
<path class="s4" fill="#5896cd" d="M777.1 720.3L789.1 733.2L764.8 731.4L752.9 718.5Z"/>
<path class="s4" fill="#5896ce" d="M752.9 718.5L764.8 731.4L740.2 728.8L728.5 715.9Z"/>
<path class="s4" fill="#5997cf" d="M728.5 715.9L740.2 728.8L715.5 725.4L714 723.7L725.6 715.5Z"/>
<path class="s5" fill="#6da845" d="M714 723.7L703.8 712.4L725.6 715.5Z"/>
<path class="s4" fill="#5997d0" d="M714 723.7L715.5 725.4L712.6 724.9Z"/>
<path class="s5" fill="#6da945" d="M703.8 712.4L714 723.7L712.6 724.9L690.4 721.1L678.9 708.1Z"/>
<path class="s5" fill="#6ea946" d="M678.9 708.1L690.4 721.1L665.1 716L653.7 702.9Z"/>
<path class="s5" fill="#6eaa46" d="M653.7 702.9L665.1 716L639.5 710L628.2 696.9Z"/>
<path class="s5" fill="#6eaa46" d="M628.2 696.9L639.5 710L613.6 703L602.4 689.9Z"/>
<path class="s5" fill="#6eab46" d="M602.4 689.9L613.6 703L587.4 695.2L582.8 689.7L586.1 685Z"/>
<path class="s6" fill="#9fb2eb" d="M582.8 689.7L576.4 682.1L586.1 685Z"/>
<path class="s5" fill="#6fab46" d="M582.8 689.7L587.4 695.2L580.9 693Z"/>
<path class="s6" fill="#9fb3eb" d="M576.4 682.1L582.8 689.7L580.9 693L560.9 686.4L550 673.3Z"/>
<path class="s6" fill="#9fb3eb" d="M550 673.3L560.9 686.4L534.1 676.7L523.3 663.6Z"/>
<path class="s8" fill="#9d9d9d" d="M1448.5 449.4L1453.7 453.2L1433.6 472.9L1418.8 461.9L1433.4 447.6Z"/>
<path class="s9" fill="#cda967" d="M1438.8 442.2L1448.5 449.4L1433.4 447.6Z"/>
<path class="s8" fill="#9f9f9f" d="M1418.8 461.9L1433.6 472.9L1413.4 492.1L1398.7 480.8Z"/>
<path class="s7" fill="#c78a71" d="M1403.4 501.1L1393.1 510.5L1378.5 499.1L1379.5 498.2Z"/>
<path class="s8" fill="#a1a1a1" d="M1398.7 480.8L1413.4 492.1L1403.4 501.1L1379.5 498.2Z"/>
<path class="s7" fill="#ca8c72" d="M1378.5 499.1L1393.1 510.5L1372.8 528.3L1358.3 516.8Z"/>
<path class="s7" fill="#cc8e74" d="M1358.3 516.8L1372.8 528.3L1352.3 545.4L1337.9 533.8Z"/>
<path class="s6" fill="#7c8cb8" d="M1342.3 553.5L1331.8 561.9L1318.1 550.6Z"/>
<path class="s7" fill="#cf9075" d="M1337.9 533.8L1352.3 545.4L1342.3 553.5L1318.1 550.6L1317.5 550.1Z"/>
<path class="s6" fill="#7e8dba" d="M1318.1 550.6L1331.8 561.9L1311.3 577.7L1297 565.8L1317 550.5Z"/>
<path class="s7" fill="#d19177" d="M1317.5 550.1L1318.1 550.6L1317 550.5Z"/>
<path class="s6" fill="#808fbc" d="M1297 565.8L1311.3 577.7L1290.6 592.8L1276.4 580.8Z"/>
<path class="s6" fill="#8191bf" d="M1276.4 580.8L1290.6 592.8L1269.8 607.3L1255.7 595.1Z"/>
<path class="s5" fill="#5b8d3a" d="M1268.2 608.3L1248.9 621L1234.9 608.8L1240.1 605.4Z"/>
<path class="s6" fill="#8393c1" d="M1255.7 595.1L1269.8 607.3L1268.2 608.3L1240.1 605.4Z"/>
<path class="s5" fill="#5d8e3b" d="M1234.9 608.8L1248.9 621L1227.9 634.1L1214 621.8Z"/>
<path class="s5" fill="#5e903c" d="M1214 621.8L1227.9 634.1L1206.8 646.5L1193 634.1Z"/>
<path class="s5" fill="#5f923d" d="M1193 634.1L1206.8 646.5L1185.6 658.3L1171.9 645.7Z"/>
<path class="s4" fill="#4e85b6" d="M1167.1 667.8L1164.3 669.3L1162.3 667.5Z"/>
<path class="s5" fill="#60943e" d="M1171.9 645.7L1185.6 658.3L1167.1 667.8L1162.3 667.5L1150.6 656.6Z"/>
<path class="s4" fill="#4f86b8" d="M1162.3 667.5L1164.3 669.3L1142.8 679.6L1129.2 666.8L1131.7 665.7Z"/>
<path class="s5" fill="#61963e" d="M1150.6 656.6L1162.3 667.5L1131.7 665.7Z"/>
<path class="s4" fill="#5088ba" d="M1129.2 666.8L1142.8 679.6L1121.2 689.3L1107.7 676.4Z"/>
<path class="s4" fill="#5189bc" d="M1107.7 676.4L1121.2 689.3L1099.5 698.2L1086.1 685.2Z"/>
<path class="s4" fill="#528bbe" d="M1086.1 685.2L1099.5 698.2L1077.6 706.5L1064.3 693.4Z"/>
<path class="s4" fill="#538cc0" d="M1064.3 693.4L1077.6 706.5L1055.5 714L1042.3 700.8Z"/>
<path class="s4" fill="#548ec2" d="M1042.3 700.8L1055.5 714L1033.3 720.7L1020.2 707.5Z"/>
<path class="s4" fill="#558fc4" d="M1020.2 707.5L1033.3 720.7L1011 726.8L998 713.4Z"/>
<path class="s4" fill="#5590c5" d="M998 713.4L1011 726.8L988.4 732.1L975.5 718.7Z"/>
<path class="s4" fill="#5691c7" d="M975.5 718.7L988.4 732.1L965.7 736.7L952.9 723.2Z"/>
<path class="s4" fill="#5692c8" d="M952.9 723.2L965.7 736.7L942.8 740.5L930.1 726.9Z"/>
<path class="s4" fill="#5793c9" d="M930.1 726.9L942.8 740.5L919.7 743.6L907.1 729.9Z"/>
<path class="s4" fill="#5794cb" d="M907.1 729.9L919.7 743.6L896.5 745.9L883.9 732.1Z"/>
<path class="s4" fill="#5895cc" d="M883.9 732.1L896.5 745.9L873 747.4L860.5 733.6Z"/>
<path class="s4" fill="#5895cd" d="M860.5 733.6L873 747.4L849.3 748.1L836.9 734.2Z"/>
<path class="s4" fill="#5896ce" d="M836.9 734.2L849.3 748.1L825.3 748.1L813.1 734.1Z"/>
<path class="s4" fill="#5997cf" d="M813.1 734.1L825.3 748.1L801.2 747.2L789.1 733.2Z"/>
<path class="s4" fill="#5997d0" d="M789.1 733.2L801.2 747.2L776.8 745.5L764.8 731.4Z"/>
<path class="s4" fill="#5998d1" d="M764.8 731.4L776.8 745.5L752.2 742.9L740.2 728.8Z"/>
<path class="s4" fill="#5a98d1" d="M740.2 728.8L752.2 742.9L727.3 739.6L715.5 725.4Z"/>
<path class="s4" fill="#5a99d2" d="M715.5 725.4L727.3 739.6L702.1 735.3L700.4 733.3L712.6 724.9Z"/>
<path class="s5" fill="#6fab46" d="M700.4 733.3L690.4 721.1L712.6 724.9Z"/>
<path class="s4" fill="#5a99d3" d="M700.4 733.3L702.1 735.3L698.8 734.7Z"/>
<path class="s5" fill="#6fab46" d="M690.4 721.1L700.4 733.3L698.8 734.7L676.7 730.2L665.1 716Z"/>
<path class="s5" fill="#6fac46" d="M665.1 716L676.7 730.2L651 724.2L639.5 710Z"/>
<path class="s5" fill="#6fac47" d="M639.5 710L651 724.2L625 717.3L613.6 703Z"/>
<path class="s5" fill="#70ac47" d="M613.6 703L625 717.3L598.7 709.5L587.4 695.2Z"/>
<path class="s5" fill="#70ad47" d="M587.4 695.2L598.7 709.5L574.1 701.4L580.9 693Z"/>
<path class="s6" fill="#a1b5ed" d="M574.1 701.4L572.1 700.8L560.9 686.4L580.9 693Z"/>
<path class="s6" fill="#a1b5ee" d="M560.9 686.4L572.1 700.8L545.1 691.1L534.1 676.7Z"/>
<path class="s8" fill="#a0a0a0" d="M1453.7 453.2L1468.7 465.1L1448.5 485.1L1433.6 472.9Z"/>
<path class="s7" fill="#c88b71" d="M1428.5 504L1428.2 504.3L1427.6 503.9Z"/>
<path class="s8" fill="#a2a2a2" d="M1433.6 472.9L1448.5 485.1L1428.5 504L1427.6 503.9L1413.4 492.1Z"/>
<path class="s7" fill="#ca8c73" d="M1427.6 503.9L1428.2 504.3L1407.8 522.9L1393.1 510.5L1403.4 501.1Z"/>
<path class="s8" fill="#a4a4a4" d="M1413.4 492.1L1427.6 503.9L1403.4 501.1Z"/>
<path class="s7" fill="#cd8e74" d="M1393.1 510.5L1407.8 522.9L1387.4 540.8L1372.8 528.3Z"/>
<path class="s6" fill="#7d8cb8" d="M1368.9 556.4L1366.9 558.1L1364.4 555.9Z"/>
<path class="s7" fill="#cf9076" d="M1372.8 528.3L1387.4 540.8L1368.9 556.4L1364.4 555.9L1352.3 545.4Z"/>
<path class="s6" fill="#7e8eba" d="M1364.4 555.9L1366.9 558.1L1346.3 574.7L1331.8 561.9L1342.3 553.5Z"/>
<path class="s7" fill="#d29277" d="M1352.3 545.4L1364.4 555.9L1342.3 553.5Z"/>
<path class="s6" fill="#8090bd" d="M1331.8 561.9L1346.3 574.7L1325.6 590.6L1311.3 577.7Z"/>
<path class="s6" fill="#8292bf" d="M1311.3 577.7L1325.6 590.6L1304.9 605.9L1290.6 592.8Z"/>
<path class="s5" fill="#5c8d3a" d="M1297.4 611.1L1284 620.4L1271.2 608.6Z"/>
<path class="s6" fill="#8393c2" d="M1290.6 592.8L1304.9 605.9L1297.4 611.1L1271.2 608.6L1269.8 607.3Z"/>
<path class="s5" fill="#5d8f3b" d="M1271.2 608.6L1284 620.4L1263.1 634.3L1248.9 621L1268.2 608.3Z"/>
<path class="s6" fill="#8595c4" d="M1269.8 607.3L1271.2 608.6L1268.2 608.3Z"/>
<path class="s5" fill="#5e913c" d="M1248.9 621L1263.1 634.3L1242 647.6L1227.9 634.1Z"/>
<path class="s5" fill="#5f933d" d="M1227.9 634.1L1242 647.6L1220.8 660.1L1206.8 646.5Z"/>
<path class="s4" fill="#4f85b6" d="M1203 670L1199.5 671.9L1197.1 669.6Z"/>
<path class="s5" fill="#61953e" d="M1206.8 646.5L1220.8 660.1L1203 670L1197.1 669.6L1185.6 658.3Z"/>
<path class="s4" fill="#5087b9" d="M1197.1 669.6L1199.5 671.9L1178.1 683.1L1164.3 669.3L1167.1 667.8Z"/>
<path class="s5" fill="#62963f" d="M1185.6 658.3L1197.1 669.6L1167.1 667.8Z"/>
<path class="s4" fill="#5189bb" d="M1164.3 669.3L1178.1 683.1L1156.5 693.5L1142.8 679.6Z"/>
<path class="s4" fill="#528abd" d="M1142.8 679.6L1156.5 693.5L1134.8 703.3L1121.2 689.3Z"/>
<path class="s4" fill="#538cbf" d="M1121.2 689.3L1134.8 703.3L1113 712.3L1099.5 698.2Z"/>
<path class="s4" fill="#548dc1" d="M1099.5 698.2L1113 712.3L1091 720.7L1077.6 706.5Z"/>
<path class="s4" fill="#558fc3" d="M1077.6 706.5L1091 720.7L1068.9 728.3L1055.5 714Z"/>
<path class="s4" fill="#5690c5" d="M1055.5 714L1068.9 728.3L1046.6 735.1L1033.3 720.7Z"/>
<path class="s4" fill="#5691c7" d="M1033.3 720.7L1046.6 735.1L1024.1 741.3L1011 726.8Z"/>
<path class="s3" fill="#efb503" d="M1005.2 745.8L1001.5 746.7L1001 746.2Z"/>
<path class="s4" fill="#5792c8" d="M1011 726.8L1024.1 741.3L1005.2 745.8L1001 746.2L988.4 732.1Z"/>
<path class="s3" fill="#f1b602" d="M1001 746.2L1001.5 746.7L978.7 751.4L976.5 748.8Z"/>
<path class="s4" fill="#5793ca" d="M988.4 732.1L1001 746.2L976.5 748.8L965.7 736.7Z"/>
<path class="s3" fill="#f3b702" d="M976.5 748.8L978.7 751.4L955.7 755.3L952.9 752Z"/>
<path class="s4" fill="#5894cb" d="M965.7 736.7L976.5 748.8L952.9 752L942.8 740.5Z"/>
<path class="s3" fill="#f4b802" d="M952.9 752L955.7 755.3L932.6 758.4L930.3 755.8Z"/>
<path class="s4" fill="#5895cc" d="M942.8 740.5L952.9 752L930.3 755.8L919.7 743.6Z"/>
<path class="s3" fill="#f6b902" d="M930.3 755.8L932.6 758.4L909.2 760.8L908.7 760.2Z"/>
<path class="s4" fill="#5996cd" d="M919.7 743.6L930.3 755.8L908.7 760.2L896.5 745.9Z"/>
<path class="s3" fill="#f7ba01" d="M908.7 760.2L909.2 760.8L905.4 761Z"/>
<path class="s4" fill="#5997ce" d="M896.5 745.9L908.7 760.2L905.4 761L885.6 762.4L873 747.4Z"/>
<path class="s4" fill="#5997cf" d="M873 747.4L885.6 762.4L861.8 763.2L849.3 748.1Z"/>
<path class="s4" fill="#5998d0" d="M849.3 748.1L861.8 763.2L837.8 763.2L825.3 748.1Z"/>
<path class="s4" fill="#5a98d1" d="M825.3 748.1L837.8 763.2L813.5 762.4L801.2 747.2Z"/>
<path class="s4" fill="#5a99d2" d="M801.2 747.2L813.5 762.4L789 760.7L776.8 745.5Z"/>
<path class="s4" fill="#5a9ad3" d="M776.8 745.5L789 760.7L764.3 758.2L752.2 742.9Z"/>
<path class="s4" fill="#5b9ad4" d="M752.2 742.9L764.3 758.2L739.3 754.9L727.3 739.6Z"/>
<path class="s4" fill="#5b9bd4" d="M727.3 739.6L739.3 754.9L714 750.7L702.1 735.3Z"/>
<path class="s4" fill="#5b9bd5" d="M702.1 735.3L714 750.7L688.5 745.7L686.4 743L698.8 734.7Z"/>
<path class="s5" fill="#70ad47" d="M686.4 743L676.7 730.2L698.8 734.7Z"/>
<path class="s4" fill="#5b9bd5" d="M686.4 743L688.5 745.7L684.2 744.7Z"/>
<path class="s5" fill="#70ad47" d="M676.7 730.2L686.4 743L684.2 744.7L662.7 739.7L651 724.2Z"/>
<path class="s5" fill="#70ad47" d="M651 724.2L662.7 739.7L636.5 732.9L625 717.3Z"/>
<path class="s5" fill="#70ad47" d="M625 717.3L636.5 732.9L610.1 725.1L598.7 709.5Z"/>
<path class="s5" fill="#70ad47" d="M598.7 709.5L610.1 725.1L583.4 716.4L573.2 702.3L574.1 701.4Z"/>
<path class="s6" fill="#a1b5ee" d="M573.2 702.3L572.1 700.8L574.1 701.4Z"/>
<path class="s5" fill="#70ad47" d="M573.2 702.3L583.4 716.4L566.1 710.2Z"/>
<path class="s6" fill="#a1b5ee" d="M572.1 700.8L573.2 702.3L566.1 710.2L556.3 706.7L545.1 691.1Z"/>
<path class="s8" fill="#a2a2a2" d="M1468.7 465.1L1483.8 478.2L1463.5 498.2L1448.5 485.1Z"/>
<path class="s7" fill="#cb8d73" d="M1454.6 506.8L1443.1 517.6L1428.2 504.3L1428.5 504Z"/>
<path class="s8" fill="#a4a4a4" d="M1448.5 485.1L1463.5 498.2L1454.6 506.8L1428.5 504Z"/>
<path class="s7" fill="#cd8e74" d="M1428.2 504.3L1443.1 517.6L1422.7 536.4L1407.8 522.9Z"/>
<path class="s7" fill="#d09076" d="M1407.8 522.9L1422.7 536.4L1402.2 554.4L1387.4 540.8Z"/>
<path class="s6" fill="#7f8ebb" d="M1396.5 559.2L1381.6 571.8L1366.9 558.1L1368.9 556.4Z"/>
<path class="s7" fill="#d29277" d="M1387.4 540.8L1402.2 554.4L1396.5 559.2L1368.9 556.4Z"/>
<path class="s6" fill="#8090bd" d="M1366.9 558.1L1381.6 571.8L1360.9 588.6L1346.3 574.7Z"/>
<path class="s6" fill="#8292c0" d="M1346.3 574.7L1360.9 588.6L1340.2 604.6L1325.6 590.6Z"/>
<path class="s5" fill="#5c8d3b" d="M1327.7 613.8L1319.3 620L1311.5 612.3Z"/>
<path class="s6" fill="#8494c2" d="M1325.6 590.6L1340.2 604.6L1327.7 613.8L1311.5 612.3L1304.9 605.9Z"/>
<path class="s5" fill="#5d8f3c" d="M1311.5 612.3L1319.3 620L1298.4 634.7L1284 620.4L1297.4 611.1Z"/>
<path class="s6" fill="#8596c4" d="M1304.9 605.9L1311.5 612.3L1297.4 611.1Z"/>
<path class="s5" fill="#5e913c" d="M1284 620.4L1298.4 634.7L1277.3 648.7L1263.1 634.3Z"/>
<path class="s5" fill="#60933d" d="M1263.1 634.3L1277.3 648.7L1256.2 662.1L1242 647.6Z"/>
<path class="s4" fill="#4f86b7" d="M1239.4 672.1L1234.9 674.7L1231.9 671.6Z"/>
<path class="s5" fill="#61953e" d="M1242 647.6L1256.2 662.1L1239.4 672.1L1231.9 671.6L1220.8 660.1Z"/>
<path class="s4" fill="#5188b9" d="M1231.9 671.6L1234.9 674.7L1213.5 686.7L1199.5 671.9L1203 670Z"/>
<path class="s5" fill="#63973f" d="M1220.8 660.1L1231.9 671.6L1203 670Z"/>
<path class="s4" fill="#5289bc" d="M1199.5 671.9L1213.5 686.7L1192 698L1178.1 683.1Z"/>
<path class="s4" fill="#538bbe" d="M1178.1 683.1L1192 698L1170.4 708.5L1156.5 693.5Z"/>
<path class="s4" fill="#548dc0" d="M1156.5 693.5L1170.4 708.5L1148.6 718.4L1134.8 703.3Z"/>
<path class="s4" fill="#558ec2" d="M1134.8 703.3L1148.6 718.4L1126.7 727.5L1113 712.3Z"/>
<path class="s4" fill="#5690c4" d="M1113 712.3L1126.7 727.5L1104.6 736L1091 720.7Z"/>
<path class="s3" fill="#edb304" d="M1090.9 740.7L1082.4 743.7L1080.1 741Z"/>
<path class="s4" fill="#5791c6" d="M1091 720.7L1104.6 736L1090.9 740.7L1080.1 741L1068.9 728.3Z"/>
<path class="s3" fill="#efb504" d="M1080.1 741L1082.4 743.7L1060 750.7L1052.7 742.2Z"/>
<path class="s4" fill="#5893c8" d="M1068.9 728.3L1080.1 741L1052.7 742.2L1046.6 735.1Z"/>
<path class="s3" fill="#f1b604" d="M1052.7 742.2L1060 750.7L1037.5 756.9L1026.4 744Z"/>
<path class="s4" fill="#5894ca" d="M1046.6 735.1L1052.7 742.2L1026.4 744L1024.1 741.3Z"/>
<path class="s3" fill="#f3b803" d="M1026.4 744L1037.5 756.9L1014.8 762.4L1001.5 746.7L1005.2 745.8Z"/>
<path class="s4" fill="#5995cb" d="M1024.1 741.3L1026.4 744L1005.2 745.8Z"/>
<path class="s3" fill="#f4b903" d="M1001.5 746.7L1014.8 762.4L991.9 767.2L978.7 751.4Z"/>
<path class="s3" fill="#f6ba03" d="M978.7 751.4L991.9 767.2L968.8 771.2L955.7 755.3Z"/>
<path class="s3" fill="#f7bb02" d="M955.7 755.3L968.8 771.2L945.5 774.4L932.6 758.4Z"/>
<path class="s3" fill="#f9bc02" d="M932.6 758.4L945.5 774.4L922.1 776.9L909.2 760.8Z"/>
<path class="s3" fill="#fabc02" d="M909.2 760.8L922.1 776.9L898.4 778.5L887.8 765.1L905.4 761Z"/>
<path class="s4" fill="#5a98d1" d="M887.8 765.1L885.6 762.4L905.4 761Z"/>
<path class="s3" fill="#fbbd01" d="M887.8 765.1L898.4 778.5L874.5 779.4L867.6 770.6Z"/>
<path class="s4" fill="#5a99d2" d="M885.6 762.4L887.8 765.1L867.6 770.6L861.8 763.2Z"/>
<path class="s3" fill="#fcbe01" d="M867.6 770.6L874.5 779.4L850.4 779.5L848.2 776.7Z"/>
<path class="s4" fill="#5b9ad3" d="M861.8 763.2L867.6 770.6L848.2 776.7L837.8 763.2Z"/>
<path class="s3" fill="#fdbf01" d="M848.2 776.7L850.4 779.5L841.1 779.2Z"/>
<path class="s4" fill="#5b9ad3" d="M837.8 763.2L848.2 776.7L841.1 779.2L826 778.7L813.5 762.4Z"/>
<path class="s4" fill="#5b9bd4" d="M813.5 762.4L826 778.7L801.4 777.2L789 760.7Z"/>
<path class="s4" fill="#5b9bd5" d="M789 760.7L801.4 777.2L776.6 774.7L764.3 758.2Z"/>
<path class="s4" fill="#5b9bd5" d="M764.3 758.2L776.6 774.7L751.5 771.5L739.3 754.9Z"/>
<path class="s4" fill="#5b9bd5" d="M739.3 754.9L751.5 771.5L726.1 767.3L714 750.7Z"/>
<path class="s4" fill="#5b9bd5" d="M714 750.7L726.1 767.3L700.5 762.3L688.5 745.7Z"/>
<path class="s4" fill="#5b9bd5" d="M688.5 745.7L700.5 762.3L674.5 756.4L672 752.8L684.2 744.7Z"/>
<path class="s5" fill="#70ad47" d="M672 752.8L662.7 739.7L684.2 744.7Z"/>
<path class="s4" fill="#5b9bd5" d="M672 752.8L674.5 756.4L669.1 755Z"/>
<path class="s5" fill="#70ad47" d="M662.7 739.7L672 752.8L669.1 755L648.3 749.6L636.5 732.9Z"/>
<path class="s5" fill="#70ad47" d="M636.5 732.9L648.3 749.6L621.8 741.9L610.1 725.1Z"/>
<path class="s5" fill="#70ad47" d="M610.1 725.1L621.8 741.9L594.9 733.2L583.4 716.4Z"/>
<path class="s5" fill="#70ad47" d="M583.4 716.4L594.9 733.2L567.7 723.5L561.5 714.4L566.1 710.2Z"/>
<path class="s6" fill="#a1b5ee" d="M561.5 714.4L556.3 706.7L566.1 710.2Z"/>
<path class="s7" fill="#cb8d73" d="M1481.7 509.5L1478.7 512.5L1474.7 508.7Z"/>
<path class="s8" fill="#a4a4a4" d="M1483.8 478.2L1499.1 492.3L1481.7 509.5L1474.7 508.7L1463.5 498.2Z"/>
<path class="s7" fill="#cd8f75" d="M1474.7 508.7L1478.7 512.5L1458.2 532L1443.1 517.6L1454.6 506.8Z"/>
<path class="s8" fill="#a6a6a6" d="M1463.5 498.2L1474.7 508.7L1454.6 506.8Z"/>
<path class="s7" fill="#d09076" d="M1443.1 517.6L1458.2 532L1437.7 550.9L1422.7 536.4Z"/>
<path class="s6" fill="#7f8ebb" d="M1425.2 562L1417.1 569.1L1408.2 560.3Z"/>
<path class="s7" fill="#d39278" d="M1422.7 536.4L1437.7 550.9L1425.2 562L1408.2 560.3L1402.2 554.4Z"/>
<path class="s6" fill="#8090bd" d="M1408.2 560.3L1417.1 569.1L1396.5 586.7L1381.6 571.8L1396.5 559.2Z"/>
<path class="s7" fill="#d59479" d="M1402.2 554.4L1408.2 560.3L1396.5 559.2Z"/>
<path class="s6" fill="#8292c0" d="M1381.6 571.8L1396.5 586.7L1375.7 603.5L1360.9 588.6Z"/>
<path class="s5" fill="#5c8e3b" d="M1359.1 616.5L1354.9 619.7L1351 615.8Z"/>
<path class="s6" fill="#8494c2" d="M1360.9 588.6L1375.7 603.5L1359.1 616.5L1351 615.8L1340.2 604.6Z"/>
<path class="s5" fill="#5d8f3c" d="M1351 615.8L1354.9 619.7L1333.9 635.2L1319.3 620L1327.7 613.8Z"/>
<path class="s6" fill="#8696c5" d="M1340.2 604.6L1351 615.8L1327.7 613.8Z"/>
<path class="s5" fill="#5f913d" d="M1319.3 620L1333.9 635.2L1312.9 650.1L1298.4 634.7Z"/>
<path class="s5" fill="#60933e" d="M1298.4 634.7L1312.9 650.1L1291.8 664.2L1277.3 648.7Z"/>
<path class="s4" fill="#5086b7" d="M1276.1 674.2L1270.5 677.7L1266.8 673.6Z"/>
<path class="s5" fill="#62953f" d="M1277.3 648.7L1291.8 664.2L1276.1 674.2L1266.8 673.6L1256.2 662.1Z"/>
<path class="s4" fill="#5188ba" d="M1266.8 673.6L1270.5 677.7L1249.2 690.5L1234.9 674.7L1239.4 672.1Z"/>
<path class="s5" fill="#639740" d="M1256.2 662.1L1266.8 673.6L1239.4 672.1Z"/>
<path class="s4" fill="#528abc" d="M1234.9 674.7L1249.2 690.5L1227.7 702.6L1213.5 686.7Z"/>
<path class="s4" fill="#548cbf" d="M1213.5 686.7L1227.7 702.6L1206.1 713.9L1192 698Z"/>
<path class="s4" fill="#558ec1" d="M1192 698L1206.1 713.9L1184.4 724.6L1170.4 708.5Z"/>
<path class="s4" fill="#568fc3" d="M1170.4 708.5L1184.4 724.6L1162.5 734.6L1148.6 718.4Z"/>
<path class="s3" fill="#ecb305" d="M1150.8 739.5L1140.5 743.9L1136.9 739.6Z"/>
<path class="s4" fill="#5791c6" d="M1148.6 718.4L1162.5 734.6L1150.8 739.5L1136.9 739.6L1126.7 727.5Z"/>
<path class="s3" fill="#eeb405" d="M1136.9 739.6L1140.5 743.9L1118.4 752.4L1108.1 740.1Z"/>
<path class="s4" fill="#5893c8" d="M1126.7 727.5L1136.9 739.6L1108.1 740.1L1104.6 736Z"/>
<path class="s3" fill="#f0b605" d="M1108.1 740.1L1118.4 752.4L1096.1 760.2L1082.4 743.7L1090.9 740.7Z"/>
<path class="s4" fill="#5994ca" d="M1104.6 736L1108.1 740.1L1090.9 740.7Z"/>
<path class="s3" fill="#f2b805" d="M1082.4 743.7L1096.1 760.2L1073.6 767.3L1060 750.7Z"/>
<path class="s3" fill="#f4b905" d="M1060 750.7L1073.6 767.3L1051 773.7L1037.5 756.9Z"/>
<path class="s3" fill="#f6ba04" d="M1037.5 756.9L1051 773.7L1028.2 779.3L1014.8 762.4Z"/>
<path class="s3" fill="#f8bb04" d="M1014.8 762.4L1028.2 779.3L1005.2 784.1L991.9 767.2Z"/>
<path class="s3" fill="#f9bc04" d="M991.9 767.2L1005.2 784.1L982 788.2L968.8 771.2Z"/>
<path class="s3" fill="#fabd03" d="M968.8 771.2L982 788.2L958.7 791.5L945.5 774.4Z"/>
<path class="s3" fill="#fbbe03" d="M945.5 774.4L958.7 791.5L935.1 794.1L922.1 776.9Z"/>
<path class="s3" fill="#fdbf02" d="M922.1 776.9L935.1 794.1L911.3 795.9L898.4 778.5Z"/>
<path class="s3" fill="#febf02" d="M898.4 778.5L911.3 795.9L887.3 796.8L874.5 779.4Z"/>
<path class="s3" fill="#ffc001" d="M874.5 779.4L887.3 796.8L863.1 797L850.4 779.5Z"/>
<path class="s3" fill="#ffc101" d="M850.4 779.5L863.1 797L838.7 796.3L829.2 783.2L841.1 779.2Z"/>
<path class="s4" fill="#5c9cd6" d="M829.2 783.2L826 778.7L841.1 779.2Z"/>
<path class="s3" fill="#ffc101" d="M829.2 783.2L838.7 796.3L814 794.8L810.7 790.2Z"/>
<path class="s4" fill="#5c9cd6" d="M826 778.7L829.2 783.2L810.7 790.2L801.4 777.2Z"/>
<path class="s3" fill="#ffc101" d="M810.7 790.2L814 794.8L802.4 793.7Z"/>
<path class="s4" fill="#5c9cd6" d="M801.4 777.2L810.7 790.2L802.4 793.7L789 792.4L776.6 774.7Z"/>
<path class="s4" fill="#5b9bd5" d="M776.6 774.7L789 792.4L763.8 789.2L751.5 771.5Z"/>
<path class="s4" fill="#5b9bd5" d="M751.5 771.5L763.8 789.2L738.4 785.2L726.1 767.3Z"/>
<path class="s4" fill="#5b9bd5" d="M726.1 767.3L738.4 785.2L712.6 780.2L700.5 762.3Z"/>
<path class="s4" fill="#5b9bd5" d="M700.5 762.3L712.6 780.2L686.6 774.4L674.5 756.4Z"/>
<path class="s4" fill="#5b9bd5" d="M674.5 756.4L686.6 774.4L660.2 767.6L657.1 762.9L669.1 755Z"/>
<path class="s5" fill="#70ad47" d="M657.1 762.9L648.3 749.6L669.1 755Z"/>
<path class="s4" fill="#5b9bd5" d="M657.1 762.9L660.2 767.6L653.3 765.6Z"/>
<path class="s5" fill="#70ad47" d="M648.3 749.6L657.1 762.9L653.3 765.6L633.6 759.9L621.8 741.9Z"/>
<path class="s5" fill="#70ad47" d="M621.8 741.9L633.6 759.9L606.6 751.3L594.9 733.2Z"/>
<path class="s5" fill="#70ad47" d="M594.9 733.2L606.6 751.3L579.3 741.6L567.7 723.5Z"/>
<path class="s7" fill="#ce8f75" d="M1509.8 512.1L1494 527.8L1478.7 512.5L1481.7 509.5Z"/>
<path class="s8" fill="#a7a7a7" d="M1499.1 492.3L1514.5 507.4L1509.8 512.1L1481.7 509.5Z"/>
<path class="s7" fill="#d09176" d="M1478.7 512.5L1494 527.8L1473.5 547.5L1458.2 532Z"/>
<path class="s6" fill="#7f8fbb" d="M1454.9 564.7L1452.9 566.5L1450.7 564.3Z"/>
<path class="s7" fill="#d39278" d="M1458.2 532L1473.5 547.5L1454.9 564.7L1450.7 564.3L1437.7 550.9Z"/>
<path class="s6" fill="#8090be" d="M1450.7 564.3L1452.9 566.5L1432.2 584.9L1417.1 569.1L1425.2 562Z"/>
<path class="s7" fill="#d59479" d="M1437.7 550.9L1450.7 564.3L1425.2 562Z"/>
<path class="s6" fill="#8292c0" d="M1417.1 569.1L1432.2 584.9L1411.5 602.6L1396.5 586.7Z"/>
<path class="s5" fill="#5c8e3b" d="M1391.3 619L1390.6 619.6L1390 618.9Z"/>
<path class="s6" fill="#8494c2" d="M1396.5 586.7L1411.5 602.6L1391.3 619L1390 618.9L1375.7 603.5Z"/>
<path class="s5" fill="#5d903c" d="M1390 618.9L1390.6 619.6L1369.7 635.9L1354.9 619.7L1359.1 616.5Z"/>
<path class="s6" fill="#8696c5" d="M1375.7 603.5L1390 618.9L1359.1 616.5Z"/>
<path class="s5" fill="#5f923d" d="M1354.9 619.7L1369.7 635.9L1348.7 651.6L1333.9 635.2Z"/>
<path class="s5" fill="#60943e" d="M1333.9 635.2L1348.7 651.6L1327.6 666.5L1312.9 650.1Z"/>
<path class="s4" fill="#5086b8" d="M1313.1 676.3L1306.4 680.8L1301.8 675.6Z"/>
<path class="s5" fill="#62963f" d="M1312.9 650.1L1327.6 666.5L1313.1 676.3L1301.8 675.6L1291.8 664.2Z"/>
<path class="s4" fill="#5188ba" d="M1301.8 675.6L1306.4 680.8L1285.1 694.4L1270.5 677.7L1276.1 674.2Z"/>
<path class="s5" fill="#639840" d="M1291.8 664.2L1301.8 675.6L1276.1 674.2Z"/>
<path class="s4" fill="#538abd" d="M1270.5 677.7L1285.1 694.4L1263.6 707.3L1249.2 690.5Z"/>
<path class="s4" fill="#548cbf" d="M1249.2 690.5L1263.6 707.3L1242.1 719.5L1227.7 702.6Z"/>
<path class="s4" fill="#558ec2" d="M1227.7 702.6L1242.1 719.5L1220.4 731.1L1206.1 713.9Z"/>
<path class="s3" fill="#eab105" d="M1203.4 739.5L1198.6 741.9L1196.5 739.4Z"/>
<path class="s4" fill="#5790c4" d="M1206.1 713.9L1220.4 731.1L1203.4 739.5L1196.5 739.4L1184.4 724.6Z"/>
<path class="s3" fill="#edb306" d="M1196.5 739.4L1198.6 741.9L1176.6 752L1166.4 739.3Z"/>
<path class="s4" fill="#5892c6" d="M1184.4 724.6L1196.5 739.4L1166.4 739.3L1162.5 734.6Z"/>
<path class="s3" fill="#efb506" d="M1166.4 739.3L1176.6 752L1154.6 761.3L1140.5 743.9L1150.8 739.5Z"/>
<path class="s4" fill="#5994c9" d="M1162.5 734.6L1166.4 739.3L1150.8 739.5Z"/>
<path class="s3" fill="#f2b706" d="M1140.5 743.9L1154.6 761.3L1132.3 770L1118.4 752.4Z"/>
<path class="s3" fill="#f4b906" d="M1118.4 752.4L1132.3 770L1109.9 777.9L1096.1 760.2Z"/>
<path class="s3" fill="#f6bb06" d="M1096.1 760.2L1109.9 777.9L1087.4 785.1L1073.6 767.3Z"/>
<path class="s3" fill="#f8bc06" d="M1073.6 767.3L1087.4 785.1L1064.7 791.6L1051 773.7Z"/>
<path class="s3" fill="#f9bd06" d="M1051 773.7L1064.7 791.6L1041.8 797.3L1028.2 779.3Z"/>
<path class="s3" fill="#fbbe05" d="M1028.2 779.3L1041.8 797.3L1018.7 802.3L1005.2 784.1Z"/>
<path class="s3" fill="#fcbf05" d="M1005.2 784.1L1018.7 802.3L995.4 806.5L982 788.2Z"/>
<path class="s3" fill="#fdc004" d="M982 788.2L995.4 806.5L972 809.9L958.7 791.5Z"/>
<path class="s3" fill="#fec003" d="M958.7 791.5L972 809.9L948.3 812.5L935.1 794.1Z"/>
<path class="s3" fill="#ffc103" d="M935.1 794.1L948.3 812.5L924.5 814.4L911.3 795.9Z"/>
<path class="s3" fill="#ffc102" d="M911.3 795.9L924.5 814.4L900.4 815.4L887.3 796.8Z"/>
<path class="s3" fill="#ffc202" d="M887.3 796.8L900.4 815.4L876.1 815.7L863.1 797Z"/>
<path class="s3" fill="#ffc101" d="M863.1 797L876.1 815.7L851.5 815.1L838.7 796.3Z"/>
<path class="s3" fill="#ffc101" d="M838.7 796.3L851.5 815.1L826.7 813.7L814 794.8Z"/>
<path class="s3" fill="#ffc101" d="M814 794.8L826.7 813.7L801.7 811.4L792.5 797.6L802.4 793.7Z"/>
<path class="s4" fill="#5c9cd6" d="M792.5 797.6L789 792.4L802.4 793.7Z"/>
<path class="s3" fill="#ffc101" d="M792.5 797.6L801.7 811.4L776.4 808.3L774.6 805.5Z"/>
<path class="s4" fill="#5c9cd6" d="M789 792.4L792.5 797.6L774.6 805.5L763.8 789.2Z"/>
<path class="s3" fill="#ffc000" d="M774.6 805.5L776.4 808.3L770.8 807.4Z"/>
<path class="s4" fill="#5b9bd5" d="M763.8 789.2L774.6 805.5L770.8 807.4L750.8 804.3L738.4 785.2Z"/>
<path class="s4" fill="#5b9bd5" d="M738.4 785.2L750.8 804.3L725 799.4L712.6 780.2Z"/>
<path class="s4" fill="#5b9bd5" d="M712.6 780.2L725 799.4L698.8 793.6L686.6 774.4Z"/>
<path class="s4" fill="#5b9bd5" d="M686.6 774.4L698.8 793.6L672.4 786.9L660.2 767.6Z"/>
<path class="s4" fill="#5b9bd5" d="M660.2 767.6L672.4 786.9L645.6 779.2L641.8 773.1L653.3 765.6Z"/>
<path class="s5" fill="#70ad47" d="M641.8 773.1L633.6 759.9L653.3 765.6Z"/>
<path class="s4" fill="#5b9bd5" d="M641.8 773.1L645.6 779.2L637 776.5Z"/>
<path class="s5" fill="#70ad47" d="M633.6 759.9L641.8 773.1L637 776.5L618.5 770.6L606.6 751.3Z"/>
<path class="s5" fill="#70ad47" d="M606.6 751.3L618.5 770.6L591.1 761.1L579.3 741.6Z"/>
<path class="s7" fill="#d09176" d="M1519.8 513L1530 523.7L1509.5 544.2L1494 527.8L1509.8 512.1Z"/>
<path class="s8" fill="#a9a9a9" d="M1514.5 507.4L1519.8 513L1509.8 512.1Z"/>
<path class="s7" fill="#d39378" d="M1494 527.8L1509.5 544.2L1488.9 564.1L1473.5 547.5Z"/>
<path class="s6" fill="#8190be" d="M1485.4 567.3L1468.2 583.3L1452.9 566.5L1454.9 564.7Z"/>
<path class="s7" fill="#d59479" d="M1473.5 547.5L1488.9 564.1L1485.4 567.3L1454.9 564.7Z"/>
<path class="s6" fill="#8292c0" d="M1452.9 566.5L1468.2 583.3L1447.4 601.8L1432.2 584.9Z"/>
<path class="s6" fill="#8494c2" d="M1432.2 584.9L1447.4 601.8L1426.6 619.6L1411.5 602.6Z"/>
<path class="s5" fill="#5d903c" d="M1424.2 621.5L1405.7 636.8L1390.6 619.6L1391.3 619Z"/>
<path class="s6" fill="#8696c5" d="M1411.5 602.6L1426.6 619.6L1424.2 621.5L1391.3 619Z"/>
<path class="s5" fill="#5f923d" d="M1390.6 619.6L1405.7 636.8L1384.7 653.2L1369.7 635.9Z"/>
<path class="s5" fill="#60943e" d="M1369.7 635.9L1384.7 653.2L1363.6 669L1348.7 651.6Z"/>
<path class="s4" fill="#5086b8" d="M1350.5 678.4L1342.4 684.1L1336.9 677.5Z"/>
<path class="s5" fill="#62963f" d="M1348.7 651.6L1363.6 669L1350.5 678.4L1336.9 677.5L1327.6 666.5Z"/>
<path class="s4" fill="#5188ba" d="M1336.9 677.5L1342.4 684.1L1321.1 698.6L1306.4 680.8L1313.1 676.3Z"/>
<path class="s5" fill="#649840" d="M1327.6 666.5L1336.9 677.5L1313.1 676.3Z"/>
<path class="s4" fill="#538abd" d="M1306.4 680.8L1321.1 698.6L1299.7 712.3L1285.1 694.4Z"/>
<path class="s4" fill="#548dbf" d="M1285.1 694.4L1299.7 712.3L1278.2 725.3L1263.6 707.3Z"/>
<path class="s4" fill="#568fc2" d="M1263.6 707.3L1278.2 725.3L1256.6 737.7L1242.1 719.5Z"/>
<path class="s3" fill="#eab206" d="M1252.2 740L1234.8 749.3L1227.1 739.6Z"/>
<path class="s4" fill="#5791c5" d="M1242.1 719.5L1256.6 737.7L1252.2 740L1227.1 739.6L1220.4 731.1Z"/>
<path class="s3" fill="#edb406" d="M1227.1 739.6L1234.8 749.3L1212.9 760.3L1198.6 741.9L1203.4 739.5Z"/>
<path class="s4" fill="#5993c7" d="M1220.4 731.1L1227.1 739.6L1203.4 739.5Z"/>
<path class="s3" fill="#f0b607" d="M1198.6 741.9L1212.9 760.3L1190.9 770.5L1176.6 752Z"/>
<path class="s3" fill="#f3b807" d="M1176.6 752L1190.9 770.5L1168.7 780L1154.6 761.3Z"/>
<path class="s3" fill="#f5ba07" d="M1154.6 761.3L1168.7 780L1146.4 788.8L1132.3 770Z"/>
<path class="s3" fill="#f7bc07" d="M1132.3 770L1146.4 788.8L1123.9 796.8L1109.9 777.9Z"/>
<path class="s3" fill="#f9bd07" d="M1109.9 777.9L1123.9 796.8L1101.3 804.1L1087.4 785.1Z"/>
<path class="s3" fill="#fbbf07" d="M1087.4 785.1L1101.3 804.1L1078.5 810.7L1064.7 791.6Z"/>
<path class="s3" fill="#fdc007" d="M1064.7 791.6L1078.5 810.7L1055.5 816.5L1041.8 797.3Z"/>
<path class="s3" fill="#fec106" d="M1041.8 797.3L1055.5 816.5L1032.4 821.6L1018.7 802.3Z"/>
<path class="s3" fill="#ffc106" d="M1018.7 802.3L1032.4 821.6L1009 825.9L995.4 806.5Z"/>
<path class="s3" fill="#ffc205" d="M995.4 806.5L1009 825.9L985.5 829.4L972 809.9Z"/>
<path class="s3" fill="#ffc304" d="M972 809.9L985.5 829.4L961.7 832.2L948.3 812.5Z"/>
<path class="s3" fill="#ffc304" d="M948.3 812.5L961.7 832.2L937.8 834.1L924.5 814.4Z"/>
<path class="s3" fill="#ffc303" d="M924.5 814.4L937.8 834.1L913.6 835.3L900.4 815.4Z"/>
<path class="s3" fill="#ffc202" d="M900.4 815.4L913.6 835.3L889.2 835.6L876.1 815.7Z"/>
<path class="s3" fill="#ffc202" d="M876.1 815.7L889.2 835.6L864.6 835.1L851.5 815.1Z"/>
<path class="s3" fill="#ffc101" d="M851.5 815.1L864.6 835.1L839.7 833.8L826.7 813.7Z"/>
<path class="s3" fill="#ffc101" d="M826.7 813.7L839.7 833.8L814.5 831.6L801.7 811.4Z"/>
<path class="s3" fill="#ffc101" d="M801.7 811.4L814.5 831.6L789.1 828.5L776.4 808.3Z"/>
<path class="s3" fill="#ffc101" d="M776.4 808.3L789.1 828.5L763.4 824.6L756.7 813.8L770.8 807.4Z"/>
<path class="s4" fill="#5c9cd6" d="M756.7 813.8L750.8 804.3L770.8 807.4Z"/>
<path class="s3" fill="#ffc000" d="M756.7 813.8L763.4 824.6L742.7 820.8Z"/>
<path class="s4" fill="#5b9bd5" d="M750.8 804.3L756.7 813.8L742.7 820.8L737.5 819.8L725 799.4Z"/>
<path class="s4" fill="#5b9bd5" d="M725 799.4L737.5 819.8L711.2 814.1L698.8 793.6Z"/>
<path class="s4" fill="#5b9bd5" d="M698.8 793.6L711.2 814.1L684.7 807.4L672.4 786.9Z"/>
<path class="s4" fill="#5b9bd5" d="M672.4 786.9L684.7 807.4L657.8 799.9L645.6 779.2Z"/>
<path class="s4" fill="#5b9bd5" d="M645.6 779.2L657.8 799.9L630.6 791.3L626.1 783.6L637 776.5Z"/>
<path class="s5" fill="#70ad47" d="M626.1 783.6L618.5 770.6L637 776.5Z"/>
<path class="s4" fill="#5b9bd5" d="M626.1 783.6L630.6 791.3L620.1 787.7Z"/>
<path class="s5" fill="#70ad47" d="M618.5 770.6L626.1 783.6L620.1 787.7L603.1 781.8L591.1 761.1Z"/>
<path class="s7" fill="#d39378" d="M1530 523.7L1545.7 541.1L1525.1 561.8L1509.5 544.2Z"/>
<path class="s6" fill="#8190be" d="M1516.7 569.8L1504.4 581.8L1492.1 567.8Z"/>
<path class="s7" fill="#d59479" d="M1509.5 544.2L1525.1 561.8L1516.7 569.8L1492.1 567.8L1488.9 564.1Z"/>
<path class="s6" fill="#8292c0" d="M1492.1 567.8L1504.4 581.8L1483.6 601.1L1468.2 583.3L1485.4 567.3Z"/>
<path class="s7" fill="#d8967b" d="M1488.9 564.1L1492.1 567.8L1485.4 567.3Z"/>
<path class="s6" fill="#8494c2" d="M1468.2 583.3L1483.6 601.1L1462.8 619.8L1447.4 601.8Z"/>
<path class="s5" fill="#5d903c" d="M1457.9 624L1441.9 637.8L1428.5 621.8Z"/>
<path class="s6" fill="#8696c5" d="M1447.4 601.8L1462.8 619.8L1457.9 624L1428.5 621.8L1426.6 619.6Z"/>
<path class="s5" fill="#5f913d" d="M1428.5 621.8L1441.9 637.8L1420.9 655.1L1405.7 636.8L1424.2 621.5Z"/>
<path class="s6" fill="#8898c7" d="M1426.6 619.6L1428.5 621.8L1424.2 621.5Z"/>
<path class="s5" fill="#60943e" d="M1405.7 636.8L1420.9 655.1L1399.8 671.7L1384.7 653.2Z"/>
<path class="s4" fill="#5086b8" d="M1388.2 680.5L1378.6 687.6L1372.1 679.5Z"/>
<path class="s5" fill="#62963f" d="M1384.7 653.2L1399.8 671.7L1388.2 680.5L1372.1 679.5L1363.6 669Z"/>
<path class="s4" fill="#5188ba" d="M1372.1 679.5L1378.6 687.6L1357.4 702.9L1342.4 684.1L1350.5 678.4Z"/>
<path class="s5" fill="#639840" d="M1363.6 669L1372.1 679.5L1350.5 678.4Z"/>
<path class="s4" fill="#538abd" d="M1342.4 684.1L1357.4 702.9L1336 717.4L1321.1 698.6Z"/>
<path class="s4" fill="#548dbf" d="M1321.1 698.6L1336 717.4L1314.5 731.3L1299.7 712.3Z"/>
<path class="s3" fill="#e7b005" d="M1298.8 740.9L1292.9 744.5L1290 740.6Z"/>
<path class="s4" fill="#568fc2" d="M1299.7 712.3L1314.5 731.3L1298.8 740.9L1290 740.6L1278.2 725.3Z"/>
<path class="s3" fill="#eab206" d="M1290 740.6L1292.9 744.5L1271.2 757L1258.4 740.1Z"/>
<path class="s4" fill="#5891c5" d="M1278.2 725.3L1290 740.6L1258.4 740.1L1256.6 737.7Z"/>
<path class="s3" fill="#edb407" d="M1258.4 740.1L1271.2 757L1249.4 768.7L1234.8 749.3L1252.2 740Z"/>
<path class="s4" fill="#5993c7" d="M1256.6 737.7L1258.4 740.1L1252.2 740Z"/>
<path class="s3" fill="#f0b707" d="M1234.8 749.3L1249.4 768.7L1227.4 779.8L1212.9 760.3Z"/>
<path class="s3" fill="#f3b908" d="M1212.9 760.3L1227.4 779.8L1205.3 790.2L1190.9 770.5Z"/>
<path class="s3" fill="#f6bb08" d="M1190.9 770.5L1205.3 790.2L1183 799.8L1168.7 780Z"/>
<path class="s3" fill="#f8bd09" d="M1168.7 780L1183 799.8L1160.6 808.7L1146.4 788.8Z"/>
<path class="s2" fill="#a5a5a5" d="M1150 812.6L1138.1 816.9L1135.7 813.4Z"/>
<path class="s3" fill="#fabf09" d="M1146.4 788.8L1160.6 808.7L1150 812.6L1135.7 813.4L1123.9 796.8Z"/>
<path class="s2" fill="#a6a6a6" d="M1135.7 813.4L1138.1 816.9L1115.4 824.3L1109.2 815.5Z"/>
<path class="s3" fill="#fcc009" d="M1123.9 796.8L1135.7 813.4L1109.2 815.5L1101.3 804.1Z"/>
<path class="s2" fill="#a7a7a7" d="M1109.2 815.5L1115.4 824.3L1092.5 831L1083.5 818Z"/>
<path class="s3" fill="#fec108" d="M1101.3 804.1L1109.2 815.5L1083.5 818L1078.5 810.7Z"/>
<path class="s2" fill="#a8a8a8" d="M1083.5 818L1092.5 831L1069.4 837L1058.5 820.8Z"/>
<path class="s3" fill="#ffc208" d="M1078.5 810.7L1083.5 818L1058.5 820.8L1055.5 816.5Z"/>
<path class="s2" fill="#a9a9a9" d="M1058.5 820.8L1069.4 837L1046.2 842.1L1034.1 824.1Z"/>
<path class="s3" fill="#ffc307" d="M1055.5 816.5L1058.5 820.8L1034.1 824.1L1032.4 821.6Z"/>
<path class="s2" fill="#a9a9a9" d="M1034.1 824.1L1046.2 842.1L1022.8 846.5L1010.3 827.8Z"/>
<path class="s3" fill="#ffc407" d="M1032.4 821.6L1034.1 824.1L1010.3 827.8L1009 825.9Z"/>
<path class="s2" fill="#a9a9a9" d="M1010.3 827.8L1022.8 846.5L999.1 850.2L987.2 832Z"/>
<path class="s3" fill="#ffc406" d="M1009 825.9L1010.3 827.8L987.2 832L985.5 829.4Z"/>
<path class="s2" fill="#aaaaaa" d="M987.2 832L999.1 850.2L975.3 853L964.6 836.6Z"/>
<path class="s3" fill="#ffc505" d="M985.5 829.4L987.2 832L964.6 836.6L961.7 832.2Z"/>
<path class="s2" fill="#a9a9a9" d="M964.6 836.6L975.3 853L951.3 855.1L942.6 841.6Z"/>
<path class="s3" fill="#ffc404" d="M961.7 832.2L964.6 836.6L942.6 841.6L937.8 834.1Z"/>
<path class="s2" fill="#a8a8a8" d="M942.6 841.6L951.3 855.1L927 856.3L921.1 847.1Z"/>
<path class="s3" fill="#ffc303" d="M937.8 834.1L942.6 841.6L921.1 847.1L913.6 835.3Z"/>
<path class="s2" fill="#a8a8a8" d="M921.1 847.1L927 856.3L902.5 856.8L900.2 853.1Z"/>
<path class="s3" fill="#ffc303" d="M913.6 835.3L921.1 847.1L900.2 853.1L889.2 835.6Z"/>
<path class="s2" fill="#a7a7a7" d="M900.2 853.1L902.5 856.8L889.5 856.6Z"/>
<path class="s3" fill="#ffc202" d="M889.2 835.6L900.2 853.1L889.5 856.6L877.8 856.4L864.6 835.1Z"/>
<path class="s3" fill="#ffc202" d="M864.6 835.1L877.8 856.4L852.8 855.1L839.7 833.8Z"/>
<path class="s3" fill="#ffc101" d="M839.7 833.8L852.8 855.1L827.5 853L814.5 831.6Z"/>
<path class="s3" fill="#ffc101" d="M814.5 831.6L827.5 853L802 850.1L789.1 828.5Z"/>
<path class="s3" fill="#ffc101" d="M789.1 828.5L802 850.1L776.3 846.2L763.4 824.6Z"/>
<path class="s3" fill="#ffc000" d="M763.4 824.6L776.3 846.2L750.2 841.5L739 822.5L742.7 820.8Z"/>
<path class="s4" fill="#5b9bd5" d="M739 822.5L737.5 819.8L742.7 820.8Z"/>
<path class="s3" fill="#ffc000" d="M739 822.5L750.2 841.5L723.8 835.9L721.3 831.5Z"/>
<path class="s4" fill="#5b9bd5" d="M737.5 819.8L739 822.5L721.3 831.5L711.2 814.1Z"/>
<path class="s3" fill="#ffc000" d="M721.3 831.5L723.8 835.9L716.6 834.1Z"/>
<path class="s4" fill="#5b9bd5" d="M711.2 814.1L721.3 831.5L716.6 834.1L697.2 829.3L684.7 807.4Z"/>
<path class="s4" fill="#5b9bd5" d="M684.7 807.4L697.2 829.3L670.2 821.8L657.8 799.9Z"/>
<path class="s4" fill="#5b9bd5" d="M657.8 799.9L670.2 821.8L642.9 813.3L630.6 791.3Z"/>
<path class="s4" fill="#5b9bd5" d="M630.6 791.3L642.9 813.3L615.2 803.9L609.9 794.2L620.1 787.7Z"/>
<path class="s5" fill="#70ad47" d="M609.9 794.2L603.1 781.8L620.1 787.7Z"/>
<path class="s6" fill="#8090be" d="M1548.8 572.3L1540.8 580.4L1532.9 571.1Z"/>
<path class="s7" fill="#d59479" d="M1545.7 541.1L1561.5 559.6L1548.8 572.3L1532.9 571.1L1525.1 561.8Z"/>
<path class="s6" fill="#8292c0" d="M1532.9 571.1L1540.8 580.4L1520 600.6L1504.4 581.8L1516.7 569.8Z"/>
<path class="s7" fill="#d8967b" d="M1525.1 561.8L1532.9 571.1L1516.7 569.8Z"/>
<path class="s6" fill="#8494c2" d="M1504.4 581.8L1520 600.6L1499.2 620.1L1483.6 601.1Z"/>
<path class="s5" fill="#5d8f3c" d="M1492.2 626.4L1478.3 638.9L1466.7 624.6Z"/>
<path class="s6" fill="#8696c5" d="M1483.6 601.1L1499.2 620.1L1492.2 626.4L1466.7 624.6L1462.8 619.8Z"/>
<path class="s5" fill="#5f913d" d="M1466.7 624.6L1478.3 638.9L1457.3 657.1L1441.9 637.8L1457.9 624Z"/>
<path class="s6" fill="#8798c7" d="M1462.8 619.8L1466.7 624.6L1457.9 624Z"/>
<path class="s5" fill="#60933e" d="M1441.9 637.8L1457.3 657.1L1436.2 674.5L1420.9 655.1Z"/>
<path class="s4" fill="#5086b7" d="M1426.1 682.5L1415.1 691.3L1407.4 681.5Z"/>
<path class="s5" fill="#62953f" d="M1420.9 655.1L1436.2 674.5L1426.1 682.5L1407.4 681.5L1399.8 671.7Z"/>
<path class="s4" fill="#5188ba" d="M1407.4 681.5L1415.1 691.3L1393.8 707.4L1378.6 687.6L1388.2 680.5Z"/>
<path class="s5" fill="#639840" d="M1399.8 671.7L1407.4 681.5L1388.2 680.5Z"/>
<path class="s4" fill="#538abd" d="M1378.6 687.6L1393.8 707.4L1372.5 722.8L1357.4 702.9Z"/>
<path class="s4" fill="#548cbf" d="M1357.4 702.9L1372.5 722.8L1351 737.5L1336 717.4Z"/>
<path class="s3" fill="#e7af05" d="M1344 742L1329.5 751.5L1322 741.4Z"/>
<path class="s4" fill="#568fc2" d="M1336 717.4L1351 737.5L1344 742L1322 741.4L1314.5 731.3Z"/>
<path class="s3" fill="#eab206" d="M1322 741.4L1329.5 751.5L1307.8 764.8L1292.9 744.5L1298.8 740.9Z"/>
<path class="s4" fill="#5891c5" d="M1314.5 731.3L1322 741.4L1298.8 740.9Z"/>
<path class="s3" fill="#edb407" d="M1292.9 744.5L1307.8 764.8L1286 777.4L1271.2 757Z"/>
<path class="s3" fill="#f0b708" d="M1271.2 757L1286 777.4L1264.1 789.4L1249.4 768.7Z"/>
<path class="s3" fill="#f3b909" d="M1249.4 768.7L1264.1 789.4L1242 800.6L1227.4 779.8Z"/>
<path class="s2" fill="#a3a3a3" d="M1224 809.1L1219.9 811L1218.6 809.2Z"/>
<path class="s3" fill="#f6bc09" d="M1227.4 779.8L1242 800.6L1224 809.1L1218.6 809.2L1205.3 790.2Z"/>
<path class="s2" fill="#a4a4a4" d="M1218.6 809.2L1219.9 811L1197.5 820.8L1190.3 810.3Z"/>
<path class="s3" fill="#f9be0a" d="M1205.3 790.2L1218.6 809.2L1190.3 810.3L1183 799.8Z"/>
<path class="s2" fill="#a6a6a6" d="M1190.3 810.3L1197.5 820.8L1175 829.8L1162.7 811.7Z"/>
<path class="s3" fill="#fbc00a" d="M1183 799.8L1190.3 810.3L1162.7 811.7L1160.6 808.7Z"/>
<path class="s2" fill="#a8a8a8" d="M1162.7 811.7L1175 829.8L1152.4 838.1L1138.1 816.9L1150 812.6Z"/>
<path class="s3" fill="#fdc10a" d="M1160.6 808.7L1162.7 811.7L1150 812.6Z"/>
<path class="s2" fill="#a9a9a9" d="M1138.1 816.9L1152.4 838.1L1129.6 845.7L1115.4 824.3Z"/>
<path class="s2" fill="#aaaaaa" d="M1115.4 824.3L1129.6 845.7L1106.7 852.5L1092.5 831Z"/>
<path class="s2" fill="#aaaaaa" d="M1092.5 831L1106.7 852.5L1083.5 858.6L1069.4 837Z"/>
<path class="s2" fill="#ababab" d="M1069.4 837L1083.5 858.6L1060.2 863.9L1046.2 842.1Z"/>
<path class="s2" fill="#ababab" d="M1046.2 842.1L1060.2 863.9L1036.7 868.4L1022.8 846.5Z"/>
<path class="s2" fill="#ababab" d="M1022.8 846.5L1036.7 868.4L1013 872.2L999.1 850.2Z"/>
<path class="s2" fill="#ababab" d="M999.1 850.2L1013 872.2L989 875.1L975.3 853Z"/>
<path class="s2" fill="#aaaaaa" d="M975.3 853L989 875.1L964.9 877.3L951.3 855.1Z"/>
<path class="s2" fill="#a9a9a9" d="M951.3 855.1L964.9 877.3L940.5 878.7L927 856.3Z"/>
<path class="s2" fill="#a8a8a8" d="M927 856.3L940.5 878.7L916 879.2L902.5 856.8Z"/>
<path class="s2" fill="#a8a8a8" d="M902.5 856.8L916 879.2L891.1 878.9L879.7 859.6L889.5 856.6Z"/>
<path class="s3" fill="#ffc303" d="M879.7 859.6L877.8 856.4L889.5 856.6Z"/>
<path class="s2" fill="#a7a7a7" d="M879.7 859.6L891.1 878.9L866.1 877.8L859.4 866.4Z"/>
<path class="s3" fill="#ffc202" d="M877.8 856.4L879.7 859.6L859.4 866.4L852.8 855.1Z"/>
<path class="s2" fill="#a6a6a6" d="M859.4 866.4L866.1 877.8L840.7 875.8L839.6 873.8Z"/>
<path class="s3" fill="#ffc101" d="M852.8 855.1L859.4 866.4L839.6 873.8L827.5 853Z"/>
<path class="s2" fill="#a6a6a6" d="M839.6 873.8L840.7 875.8L835.9 875.3Z"/>
<path class="s3" fill="#ffc101" d="M827.5 853L839.6 873.8L835.9 875.3L815.1 872.9L802 850.1Z"/>
<path class="s3" fill="#ffc101" d="M802 850.1L815.1 872.9L789.3 869.2L776.3 846.2Z"/>
<path class="s3" fill="#ffc101" d="M776.3 846.2L789.3 869.2L763.1 864.5L750.2 841.5Z"/>
<path class="s3" fill="#ffc000" d="M750.2 841.5L763.1 864.5L736.6 859L723.8 835.9Z"/>
<path class="s3" fill="#ffc000" d="M723.8 835.9L736.6 859L709.9 852.5L703.5 840.9L716.6 834.1Z"/>
<path class="s4" fill="#5b9bd5" d="M703.5 840.9L697.2 829.3L716.6 834.1Z"/>
<path class="s3" fill="#ffc000" d="M703.5 840.9L709.9 852.5L691.7 847.5Z"/>
<path class="s4" fill="#5b9bd5" d="M697.2 829.3L703.5 840.9L691.7 847.5L682.8 845.1L670.2 821.8Z"/>
<path class="s4" fill="#5b9bd5" d="M670.2 821.8L682.8 845.1L655.4 836.7L642.9 813.3Z"/>
<path class="s4" fill="#5b9bd5" d="M642.9 813.3L655.4 836.7L627.6 827.3L615.2 803.9Z"/>
<path class="s6" fill="#8292c0" d="M1573.3 574.2L1577.5 579.2L1556.7 600.3L1540.8 580.4L1548.8 572.3Z"/>
<path class="s7" fill="#d8967b" d="M1561.5 559.6L1573.3 574.2L1548.8 572.3Z"/>
<path class="s6" fill="#8494c2" d="M1540.8 580.4L1556.7 600.3L1535.8 620.6L1520 600.6Z"/>
<path class="s5" fill="#5d8f3c" d="M1527.1 628.8L1514.9 640.2L1504.8 627.2Z"/>
<path class="s6" fill="#8596c4" d="M1520 600.6L1535.8 620.6L1527.1 628.8L1504.8 627.2L1499.2 620.1Z"/>
<path class="s5" fill="#5f913d" d="M1504.8 627.2L1514.9 640.2L1493.9 659.2L1478.3 638.9L1492.2 626.4Z"/>
<path class="s6" fill="#8798c7" d="M1499.2 620.1L1504.8 627.2L1492.2 626.4Z"/>
<path class="s5" fill="#60933e" d="M1478.3 638.9L1493.9 659.2L1472.9 677.5L1457.3 657.1Z"/>
<path class="s4" fill="#5086b7" d="M1464.3 684.6L1451.7 695.1L1442.9 683.4Z"/>
<path class="s5" fill="#61953f" d="M1457.3 657.1L1472.9 677.5L1464.3 684.6L1442.9 683.4L1436.2 674.5Z"/>
<path class="s4" fill="#5188b9" d="M1442.9 683.4L1451.7 695.1L1430.5 712L1415.1 691.3L1426.1 682.5Z"/>
<path class="s5" fill="#639740" d="M1436.2 674.5L1442.9 683.4L1426.1 682.5Z"/>
<path class="s4" fill="#538abc" d="M1415.1 691.3L1430.5 712L1409.2 728.3L1393.8 707.4Z"/>
<path class="s3" fill="#e3ac05" d="M1388.4 743.3L1387.7 743.8L1387.3 743.3Z"/>
<path class="s4" fill="#548cbf" d="M1393.8 707.4L1409.2 728.3L1388.4 743.3L1387.3 743.3L1372.5 722.8Z"/>
<path class="s3" fill="#e7af05" d="M1387.3 743.3L1387.7 743.8L1366.2 758.7L1354.5 742.3Z"/>
<path class="s4" fill="#568ec2" d="M1372.5 722.8L1387.3 743.3L1354.5 742.3L1351 737.5Z"/>
<path class="s3" fill="#eab206" d="M1354.5 742.3L1366.2 758.7L1344.6 772.9L1329.5 751.5L1344 742Z"/>
<path class="s4" fill="#5791c4" d="M1351 737.5L1354.5 742.3L1344 742Z"/>
<path class="s3" fill="#edb407" d="M1329.5 751.5L1344.6 772.9L1322.8 786.3L1307.8 764.8Z"/>
<path class="s3" fill="#f0b708" d="M1307.8 764.8L1322.8 786.3L1300.9 799.1L1286 777.4Z"/>
<path class="s2" fill="#a0a0a0" d="M1285.3 807.7L1279 811.2L1276.6 807.8Z"/>
<path class="s3" fill="#f3b909" d="M1286 777.4L1300.9 799.1L1285.3 807.7L1276.6 807.8L1264.1 789.4Z"/>
<path class="s2" fill="#a3a3a3" d="M1276.6 807.8L1279 811.2L1256.8 822.5L1247.3 808.3Z"/>
<path class="s3" fill="#f6bc0a" d="M1264.1 789.4L1276.6 807.8L1247.3 808.3L1242 800.6Z"/>
<path class="s2" fill="#a5a5a5" d="M1247.3 808.3L1256.8 822.5L1234.6 833.1L1219.9 811L1224 809.1Z"/>
<path class="s3" fill="#f9be0a" d="M1242 800.6L1247.3 808.3L1224 809.1Z"/>
<path class="s2" fill="#a7a7a7" d="M1219.9 811L1234.6 833.1L1212.2 843L1197.5 820.8Z"/>
<path class="s2" fill="#a8a8a8" d="M1197.5 820.8L1212.2 843L1189.6 852.2L1175 829.8Z"/>
<path class="s2" fill="#aaaaaa" d="M1175 829.8L1189.6 852.2L1166.9 860.6L1152.4 838.1Z"/>
<path class="s2" fill="#ababab" d="M1152.4 838.1L1166.9 860.6L1144 868.3L1129.6 845.7Z"/>
<path class="s2" fill="#acacac" d="M1129.6 845.7L1144 868.3L1121 875.3L1106.7 852.5Z"/>
<path class="s2" fill="#acacac" d="M1106.7 852.5L1121 875.3L1097.7 881.5L1083.5 858.6Z"/>
<path class="s2" fill="#adadad" d="M1083.5 858.6L1097.7 881.5L1074.3 886.9L1060.2 863.9Z"/>
<path class="s2" fill="#adadad" d="M1060.2 863.9L1074.3 886.9L1050.7 891.6L1036.7 868.4Z"/>
<path class="s2" fill="#acacac" d="M1036.7 868.4L1050.7 891.6L1026.9 895.4L1013 872.2Z"/>
<path class="s2" fill="#ababab" d="M1013 872.2L1026.9 895.4L1002.9 898.5L989 875.1Z"/>
<path class="s2" fill="#aaaaaa" d="M989 875.1L1002.9 898.5L978.7 900.8L964.9 877.3Z"/>
<path class="s2" fill="#a9a9a9" d="M964.9 877.3L978.7 900.8L954.3 902.3L940.5 878.7Z"/>
<path class="s2" fill="#a9a9a9" d="M940.5 878.7L954.3 902.3L929.6 902.9L916 879.2Z"/>
<path class="s2" fill="#a8a8a8" d="M916 879.2L929.6 902.9L904.7 902.8L891.1 878.9Z"/>
<path class="s2" fill="#a7a7a7" d="M891.1 878.9L904.7 902.8L879.5 901.7L866.1 877.8Z"/>
<path class="s2" fill="#a7a7a7" d="M866.1 877.8L879.5 901.7L854.1 899.8L840.7 875.8Z"/>
<path class="s2" fill="#a6a6a6" d="M840.7 875.8L854.1 899.8L828.4 897.1L819.8 881.5L835.9 875.3Z"/>
<path class="s3" fill="#ffc101" d="M819.8 881.5L815.1 872.9L835.9 875.3Z"/>
<path class="s2" fill="#a6a6a6" d="M819.8 881.5L828.4 897.1L802.5 893.5L800.4 889.7Z"/>
<path class="s3" fill="#ffc101" d="M815.1 872.9L819.8 881.5L800.4 889.7L789.3 869.2Z"/>
<path class="s2" fill="#a6a6a6" d="M800.4 889.7L802.5 893.5L795 892.2Z"/>
<path class="s3" fill="#ffc101" d="M789.3 869.2L800.4 889.7L795 892.2L776.2 888.9L763.1 864.5Z"/>
<path class="s3" fill="#ffc000" d="M763.1 864.5L776.2 888.9L749.6 883.5L736.6 859Z"/>
<path class="s3" fill="#ffc000" d="M736.6 859L749.6 883.5L722.8 877.1L709.9 852.5Z"/>
<path class="s3" fill="#ffc000" d="M709.9 852.5L722.8 877.1L695.6 869.7L685.7 850.6L691.7 847.5Z"/>
<path class="s4" fill="#5b9bd5" d="M685.7 850.6L682.8 845.1L691.7 847.5Z"/>
<path class="s3" fill="#ffc000" d="M685.7 850.6L695.6 869.7L668.1 861.4L667.7 860.8Z"/>
<path class="s4" fill="#5b9bd5" d="M682.8 845.1L685.7 850.6L667.7 860.8L655.4 836.7Z"/>
<path class="s3" fill="#ffc000" d="M667.7 860.8L668.1 861.4L667.2 861.1Z"/>
<path class="s4" fill="#5b9bd5" d="M655.4 836.7L667.7 860.8L667.2 861.1L640.2 852.1L627.6 827.3Z"/>
<path class="s6" fill="#8394c2" d="M1577.5 579.2L1593.5 600.1L1572.7 621.2L1556.7 600.3Z"/>
<path class="s5" fill="#5d8f3b" d="M1562.5 631.1L1551.7 641.7L1542.8 629.8Z"/>
<path class="s6" fill="#8595c4" d="M1556.7 600.3L1572.7 621.2L1562.5 631.1L1542.8 629.8L1535.8 620.6Z"/>
<path class="s5" fill="#5e913c" d="M1542.8 629.8L1551.7 641.7L1530.8 661.5L1514.9 640.2L1527.1 628.8Z"/>
<path class="s6" fill="#8797c7" d="M1535.8 620.6L1542.8 629.8L1527.1 628.8Z"/>
<path class="s5" fill="#60933d" d="M1514.9 640.2L1530.8 661.5L1509.7 680.7L1493.9 659.2Z"/>
<path class="s4" fill="#4f85b7" d="M1502.8 686.7L1488.6 699.1L1478.6 685.4Z"/>
<path class="s5" fill="#61953e" d="M1493.9 659.2L1509.7 680.7L1502.8 686.7L1478.6 685.4L1472.9 677.5Z"/>
<path class="s4" fill="#5187b9" d="M1478.6 685.4L1488.6 699.1L1467.3 716.9L1451.7 695.1L1464.3 684.6Z"/>
<path class="s5" fill="#639740" d="M1472.9 677.5L1478.6 685.4L1464.3 684.6Z"/>
<path class="s4" fill="#5289bc" d="M1451.7 695.1L1467.3 716.9L1446 734L1430.5 712Z"/>
<path class="s3" fill="#e3ac04" d="M1431.9 744.8L1424.6 750.4L1420.4 744.4Z"/>
<path class="s4" fill="#548cbe" d="M1430.5 712L1446 734L1431.9 744.8L1420.4 744.4L1409.2 728.3Z"/>
<path class="s3" fill="#e6ae05" d="M1420.4 744.4L1424.6 750.4L1403.1 766.1L1387.7 743.8L1388.4 743.3Z"/>
<path class="s4" fill="#558ec1" d="M1409.2 728.3L1420.4 744.4L1388.4 743.3Z"/>
<path class="s3" fill="#e9b106" d="M1387.7 743.8L1403.1 766.1L1381.5 781.1L1366.2 758.7Z"/>
<path class="s3" fill="#ecb407" d="M1366.2 758.7L1381.5 781.1L1359.8 795.4L1344.6 772.9Z"/>
<path class="s2" fill="#9e9e9e" d="M1340.8 807.3L1338 809L1336.8 807.3Z"/>
<path class="s3" fill="#efb608" d="M1344.6 772.9L1359.8 795.4L1340.8 807.3L1336.8 807.3L1322.8 786.3Z"/>
<path class="s2" fill="#a0a0a0" d="M1336.8 807.3L1338 809L1316 822L1306.4 807.4Z"/>
<path class="s3" fill="#f3b909" d="M1322.8 786.3L1336.8 807.3L1306.4 807.4L1300.9 799.1Z"/>
<path class="s2" fill="#a2a2a2" d="M1306.4 807.4L1316 822L1294 834.2L1279 811.2L1285.3 807.7Z"/>
<path class="s3" fill="#f6bb0a" d="M1300.9 799.1L1306.4 807.4L1285.3 807.7Z"/>
<path class="s2" fill="#a5a5a5" d="M1279 811.2L1294 834.2L1271.8 845.7L1256.8 822.5Z"/>
<path class="s2" fill="#a7a7a7" d="M1256.8 822.5L1271.8 845.7L1249.4 856.4L1234.6 833.1Z"/>
<path class="s2" fill="#a9a9a9" d="M1234.6 833.1L1249.4 856.4L1226.9 866.5L1212.2 843Z"/>
<path class="s2" fill="#aaaaaa" d="M1212.2 843L1226.9 866.5L1204.3 875.8L1189.6 852.2Z"/>
<path class="s1" fill="#f1853b" d="M1186.1 882.6L1181.5 884.4L1180.7 883.1Z"/>
<path class="s2" fill="#ababab" d="M1189.6 852.2L1204.3 875.8L1186.1 882.6L1180.7 883.1L1166.9 860.6Z"/>
<path class="s1" fill="#f3863b" d="M1180.7 883.1L1181.5 884.4L1158.6 892.2L1154.6 885.7Z"/>
<path class="s2" fill="#adadad" d="M1166.9 860.6L1180.7 883.1L1154.6 885.7L1144 868.3Z"/>
<path class="s1" fill="#f4863b" d="M1154.6 885.7L1158.6 892.2L1135.4 899.3L1129 888.6Z"/>
<path class="s2" fill="#adadad" d="M1144 868.3L1154.6 885.7L1129 888.6L1121 875.3Z"/>
<path class="s1" fill="#f5863b" d="M1129 888.6L1135.4 899.3L1112.1 905.6L1104 892Z"/>
<path class="s2" fill="#aeaeae" d="M1121 875.3L1129 888.6L1104 892L1097.7 881.5Z"/>
<path class="s1" fill="#f6863b" d="M1104 892L1112.1 905.6L1088.7 911.2L1079.5 895.7Z"/>
<path class="s2" fill="#aeaeae" d="M1097.7 881.5L1104 892L1079.5 895.7L1074.3 886.9Z"/>
<path class="s1" fill="#f6863a" d="M1079.5 895.7L1088.7 911.2L1065 916L1055.6 899.8Z"/>
<path class="s2" fill="#aeaeae" d="M1074.3 886.9L1079.5 895.7L1055.6 899.8L1050.7 891.6Z"/>
<path class="s1" fill="#f58539" d="M1055.6 899.8L1065 916L1041.1 920L1032.1 904.3Z"/>
<path class="s2" fill="#adadad" d="M1050.7 891.6L1055.6 899.8L1032.1 904.3L1026.9 895.4Z"/>
<path class="s1" fill="#f48438" d="M1032.1 904.3L1041.1 920L1017 923.2L1009.1 909.3Z"/>
<path class="s2" fill="#acacac" d="M1026.9 895.4L1032.1 904.3L1009.1 909.3L1002.9 898.5Z"/>
<path class="s1" fill="#f38337" d="M1009.1 909.3L1017 923.2L992.7 925.6L986.5 914.6Z"/>
<path class="s2" fill="#ababab" d="M1002.9 898.5L1009.1 909.3L986.5 914.6L978.7 900.8Z"/>
<path class="s1" fill="#f28236" d="M986.5 914.6L992.7 925.6L968.2 927.2L964.4 920.4Z"/>
<path class="s2" fill="#aaaaaa" d="M978.7 900.8L986.5 914.6L964.4 920.4L954.3 902.3Z"/>
<path class="s1" fill="#f18135" d="M964.4 920.4L968.2 927.2L943.4 928L942.7 926.6Z"/>
<path class="s2" fill="#a9a9a9" d="M954.3 902.3L964.4 920.4L942.7 926.6L929.6 902.9Z"/>
<path class="s1" fill="#f08034" d="M942.7 926.6L943.4 928L938.5 928Z"/>
<path class="s2" fill="#a8a8a8" d="M929.6 902.9L942.7 926.6L938.5 928L918.4 927.9L904.7 902.8Z"/>
<path class="s2" fill="#a8a8a8" d="M904.7 902.8L918.4 927.9L893.2 927L879.5 901.7Z"/>
<path class="s2" fill="#a7a7a7" d="M879.5 901.7L893.2 927L867.7 925.2L854.1 899.8Z"/>
<path class="s2" fill="#a6a6a6" d="M854.1 899.8L867.7 925.2L841.9 922.6L828.4 897.1Z"/>
<path class="s2" fill="#a6a6a6" d="M828.4 897.1L841.9 922.6L815.8 919.1L802.5 893.5Z"/>
<path class="s2" fill="#a6a6a6" d="M802.5 893.5L815.8 919.1L789.5 914.6L781 898.2L795 892.2Z"/>
<path class="s3" fill="#ffc101" d="M781 898.2L776.2 888.9L795 892.2Z"/>
<path class="s2" fill="#a6a6a6" d="M781 898.2L789.5 914.6L762.8 909.3L761.8 907.3Z"/>
<path class="s3" fill="#ffc101" d="M776.2 888.9L781 898.2L761.8 907.3L749.6 883.5Z"/>
<path class="s2" fill="#a5a5a5" d="M761.8 907.3L762.8 909.3L759.4 908.5Z"/>
<path class="s3" fill="#ffc000" d="M749.6 883.5L761.8 907.3L759.4 908.5L735.8 903L722.8 877.1Z"/>
<path class="s3" fill="#ffc000" d="M722.8 877.1L735.8 903L708.6 895.8L695.6 869.7Z"/>
<path class="s3" fill="#ffc000" d="M695.6 869.7L708.6 895.8L680.9 887.5L668.1 861.4Z"/>
<path class="s3" fill="#ffc000" d="M668.1 861.4L680.9 887.5L653 878.3L649.5 871.2L667.2 861.1Z"/>
<path class="s4" fill="#5b9bd5" d="M649.5 871.2L640.2 852.1L667.2 861.1Z"/>
<path class="s5" fill="#5d8f3b" d="M1598.5 633.5L1588.8 643.4L1580.7 632.3Z"/>
<path class="s6" fill="#8595c4" d="M1593.5 600.1L1609.7 622L1598.5 633.5L1580.7 632.3L1572.7 621.2Z"/>
<path class="s5" fill="#5e903c" d="M1580.7 632.3L1588.8 643.4L1567.8 664L1551.7 641.7L1562.5 631.1Z"/>
<path class="s6" fill="#8697c6" d="M1572.7 621.2L1580.7 632.3L1562.5 631.1Z"/>
<path class="s5" fill="#5f923d" d="M1551.7 641.7L1567.8 664L1546.7 684L1530.8 661.5Z"/>
<path class="s4" fill="#4f85b6" d="M1541.5 688.8L1525.6 703.3L1514.3 687.3Z"/>
<path class="s5" fill="#61943e" d="M1530.8 661.5L1546.7 684L1541.5 688.8L1514.3 687.3L1509.7 680.7Z"/>
<path class="s4" fill="#5087b8" d="M1514.3 687.3L1525.6 703.3L1504.4 722L1488.6 699.1L1502.8 686.7Z"/>
<path class="s5" fill="#62963f" d="M1509.7 680.7L1514.3 687.3L1502.8 686.7Z"/>
<path class="s4" fill="#5289bb" d="M1488.6 699.1L1504.4 722L1483.1 739.9L1467.3 716.9Z"/>
<path class="s3" fill="#e2ab04" d="M1475 746.4L1461.7 757.1L1453.8 745.5Z"/>
<path class="s4" fill="#538bbd" d="M1467.3 716.9L1483.1 739.9L1475 746.4L1453.8 745.5L1446 734Z"/>
<path class="s3" fill="#e5ae05" d="M1453.8 745.5L1461.7 757.1L1440.2 773.7L1424.6 750.4L1431.9 744.8Z"/>
<path class="s4" fill="#558dc0" d="M1446 734L1453.8 745.5L1431.9 744.8Z"/>
<path class="s3" fill="#e8b006" d="M1424.6 750.4L1440.2 773.7L1418.7 789.6L1403.1 766.1Z"/>
<path class="s3" fill="#ebb307" d="M1403.1 766.1L1418.7 789.6L1397 804.7L1381.5 781.1Z"/>
<path class="s2" fill="#9d9d9d" d="M1392.8 807.5L1375.2 819.2L1367.5 807.3Z"/>
<path class="s3" fill="#efb507" d="M1381.5 781.1L1397 804.7L1392.8 807.5L1367.5 807.3L1359.8 795.4Z"/>
<path class="s2" fill="#9f9f9f" d="M1367.5 807.3L1375.2 819.2L1353.3 833L1338 809L1340.8 807.3Z"/>
<path class="s3" fill="#f2b808" d="M1359.8 795.4L1367.5 807.3L1340.8 807.3Z"/>
<path class="s2" fill="#a2a2a2" d="M1338 809L1353.3 833L1331.3 846L1316 822Z"/>
<path class="s2" fill="#a4a4a4" d="M1316 822L1331.3 846L1309.1 858.4L1294 834.2Z"/>
<path class="s2" fill="#a6a6a6" d="M1294 834.2L1309.1 858.4L1286.9 870L1271.8 845.7Z"/>
<path class="s1" fill="#ed823a" d="M1273.4 876.6L1264.4 881L1262.1 877.1Z"/>
<path class="s2" fill="#a8a8a8" d="M1271.8 845.7L1286.9 870L1273.4 876.6L1262.1 877.1L1249.4 856.4Z"/>
<path class="s1" fill="#ef843b" d="M1262.1 877.1L1264.4 881L1241.9 891.2L1234.4 878.8Z"/>
<path class="s2" fill="#aaaaaa" d="M1249.4 856.4L1262.1 877.1L1234.4 878.8L1226.9 866.5Z"/>
<path class="s1" fill="#f1853c" d="M1234.4 878.8L1241.9 891.2L1219.2 900.6L1207.3 880.8Z"/>
<path class="s2" fill="#acacac" d="M1226.9 866.5L1234.4 878.8L1207.3 880.8L1204.3 875.8Z"/>
<path class="s1" fill="#f3863c" d="M1207.3 880.8L1219.2 900.6L1196.3 909.3L1181.5 884.4L1186.1 882.6Z"/>
<path class="s2" fill="#adadad" d="M1204.3 875.8L1207.3 880.8L1186.1 882.6Z"/>
<path class="s1" fill="#f5873c" d="M1181.5 884.4L1196.3 909.3L1173.3 917.3L1158.6 892.2Z"/>
<path class="s1" fill="#f6873c" d="M1158.6 892.2L1173.3 917.3L1150.1 924.5L1135.4 899.3Z"/>
<path class="s1" fill="#f7883c" d="M1135.4 899.3L1150.1 924.5L1126.7 931L1112.1 905.6Z"/>
<path class="s1" fill="#f7873b" d="M1112.1 905.6L1126.7 931L1103.1 936.7L1088.7 911.2Z"/>
<path class="s1" fill="#f6863a" d="M1088.7 911.2L1103.1 936.7L1079.4 941.6L1065 916Z"/>
<path class="s1" fill="#f58539" d="M1065 916L1079.4 941.6L1055.4 945.8L1041.1 920Z"/>
<path class="s1" fill="#f48438" d="M1041.1 920L1055.4 945.8L1031.3 949.1L1017 923.2Z"/>
<path class="s1" fill="#f38337" d="M1017 923.2L1031.3 949.1L1006.9 951.7L992.7 925.6Z"/>
<path class="s1" fill="#f28236" d="M992.7 925.6L1006.9 951.7L982.3 953.4L968.2 927.2Z"/>
<path class="s1" fill="#f18135" d="M968.2 927.2L982.3 953.4L957.4 954.3L943.4 928Z"/>
<path class="s1" fill="#f08034" d="M943.4 928L957.4 954.3L932.3 954.4L921.2 933.2L938.5 928Z"/>
<path class="s2" fill="#a8a8a8" d="M921.2 933.2L918.4 927.9L938.5 928Z"/>
<path class="s1" fill="#f08034" d="M921.2 933.2L932.3 954.4L907 953.6L900.1 940.3Z"/>
<path class="s2" fill="#a8a8a8" d="M918.4 927.9L921.2 933.2L900.1 940.3L893.2 927Z"/>
<path class="s1" fill="#ef7f33" d="M900.1 940.3L907 953.6L881.4 952L879.3 947.8Z"/>
<path class="s2" fill="#a7a7a7" d="M893.2 927L900.1 940.3L879.3 947.8L867.7 925.2Z"/>
<path class="s1" fill="#ef7f33" d="M879.3 947.8L881.4 952L871.1 951Z"/>
<path class="s2" fill="#a7a7a7" d="M867.7 925.2L879.3 947.8L871.1 951L855.5 949.4L841.9 922.6Z"/>
<path class="s2" fill="#a6a6a6" d="M841.9 922.6L855.5 949.4L829.4 946L815.8 919.1Z"/>
<path class="s2" fill="#a6a6a6" d="M815.8 919.1L829.4 946L802.9 941.7L789.5 914.6Z"/>
<path class="s2" fill="#a6a6a6" d="M789.5 914.6L802.9 941.7L776.2 936.5L762.8 909.3Z"/>
<path class="s2" fill="#a5a5a5" d="M762.8 909.3L776.2 936.5L749.1 930.3L742.5 916.6L759.4 908.5Z"/>
<path class="s3" fill="#ffc000" d="M742.5 916.6L735.8 903L759.4 908.5Z"/>
<path class="s2" fill="#a5a5a5" d="M742.5 916.6L749.1 930.3L727 924.6Z"/>
<path class="s3" fill="#ffc000" d="M735.8 903L742.5 916.6L727 924.6L721.7 923.2L708.6 895.8Z"/>
<path class="s3" fill="#ffc000" d="M708.6 895.8L721.7 923.2L694 915.1L680.9 887.5Z"/>
<path class="s3" fill="#ffc000" d="M680.9 887.5L694 915.1L665.9 906L653 878.3Z"/>
<path class="s5" fill="#5e903c" d="M1618.7 634.7L1626.1 645.2L1605.1 666.7L1588.8 643.4L1598.5 633.5Z"/>
<path class="s6" fill="#8697c6" d="M1609.7 622L1618.7 634.7L1598.5 633.5Z"/>
<path class="s5" fill="#5f923d" d="M1588.8 643.4L1605.1 666.7L1584 687.6L1567.8 664Z"/>
<path class="s4" fill="#4f85b5" d="M1580.5 690.9L1562.8 707.7L1550.3 689.3Z"/>
<path class="s5" fill="#60943e" d="M1567.8 664L1584 687.6L1580.5 690.9L1550.3 689.3L1546.7 684Z"/>
<path class="s4" fill="#5086b8" d="M1550.3 689.3L1562.8 707.7L1541.6 727.2L1525.6 703.3L1541.5 688.8Z"/>
<path class="s5" fill="#62963f" d="M1546.7 684L1550.3 689.3L1541.5 688.8Z"/>
<path class="s4" fill="#5188ba" d="M1525.6 703.3L1541.6 727.2L1520.3 746L1504.4 722Z"/>
<path class="s3" fill="#e1aa04" d="M1517.9 748L1499 764.1L1487.6 746.8Z"/>
<path class="s4" fill="#538abd" d="M1504.4 722L1520.3 746L1517.9 748L1487.6 746.8L1483.1 739.9Z"/>
<path class="s3" fill="#e4ad04" d="M1487.6 746.8L1499 764.1L1477.5 781.5L1461.7 757.1L1475 746.4Z"/>
<path class="s4" fill="#548cbf" d="M1483.1 739.9L1487.6 746.8L1475 746.4Z"/>
<path class="s3" fill="#e7af05" d="M1461.7 757.1L1477.5 781.5L1456 798.2L1440.2 773.7Z"/>
<path class="s2" fill="#9a9a9a" d="M1442.6 808.1L1434.3 814.2L1430.3 807.9Z"/>
<path class="s3" fill="#eab206" d="M1440.2 773.7L1456 798.2L1442.6 808.1L1430.3 807.9L1418.7 789.6Z"/>
<path class="s2" fill="#9c9c9c" d="M1430.3 807.9L1434.3 814.2L1412.6 829.6L1398.7 807.5Z"/>
<path class="s3" fill="#edb407" d="M1418.7 789.6L1430.3 807.9L1398.7 807.5L1397 804.7Z"/>
<path class="s2" fill="#9e9e9e" d="M1398.7 807.5L1412.6 829.6L1390.7 844.2L1375.2 819.2L1392.8 807.5Z"/>
<path class="s3" fill="#f1b708" d="M1397 804.7L1398.7 807.5L1392.8 807.5Z"/>
<path class="s2" fill="#a1a1a1" d="M1375.2 819.2L1390.7 844.2L1368.8 858.1L1353.3 833Z"/>
<path class="s2" fill="#a3a3a3" d="M1353.3 833L1368.8 858.1L1346.7 871.4L1331.3 846Z"/>
<path class="s1" fill="#e98039" d="M1342.2 873.9L1324.4 883.9L1318.8 874.5Z"/>
<path class="s2" fill="#a6a6a6" d="M1331.3 846L1346.7 871.4L1342.2 873.9L1318.8 874.5L1309.1 858.4Z"/>
<path class="s1" fill="#ec823a" d="M1318.8 874.5L1324.4 883.9L1302.1 895.7L1290.2 875.7Z"/>
<path class="s2" fill="#a8a8a8" d="M1309.1 858.4L1318.8 874.5L1290.2 875.7L1286.9 870Z"/>
<path class="s1" fill="#ee833b" d="M1290.2 875.7L1302.1 895.7L1279.6 906.7L1264.4 881L1273.4 876.6Z"/>
<path class="s2" fill="#aaaaaa" d="M1286.9 870L1290.2 875.7L1273.4 876.6Z"/>
<path class="s1" fill="#f1853c" d="M1264.4 881L1279.6 906.7L1257 917.1L1241.9 891.2Z"/>
<path class="s1" fill="#f3863c" d="M1241.9 891.2L1257 917.1L1234.2 926.7L1219.2 900.6Z"/>
<path class="s1" fill="#f5873d" d="M1219.2 900.6L1234.2 926.7L1211.3 935.6L1196.3 909.3Z"/>
<path class="s1" fill="#f6883d" d="M1196.3 909.3L1211.3 935.6L1188.2 943.7L1173.3 917.3Z"/>
<path class="s1" fill="#f7883d" d="M1173.3 917.3L1188.2 943.7L1164.9 951.1L1150.1 924.5Z"/>
<path class="s1" fill="#f8883c" d="M1150.1 924.5L1164.9 951.1L1141.4 957.7L1126.7 931Z"/>
<path class="s1" fill="#f8883c" d="M1126.7 931L1141.4 957.7L1117.8 963.6L1103.1 936.7Z"/>
<path class="s1" fill="#f7873b" d="M1103.1 936.7L1117.8 963.6L1093.9 968.6L1079.4 941.6Z"/>
<path class="s1" fill="#f6863a" d="M1079.4 941.6L1093.9 968.6L1069.9 972.9L1055.4 945.8Z"/>
<path class="s1" fill="#f58539" d="M1055.4 945.8L1069.9 972.9L1045.7 976.4L1031.3 949.1Z"/>
<path class="s1" fill="#f38337" d="M1031.3 949.1L1045.7 976.4L1021.2 979.1L1006.9 951.7Z"/>
<path class="s1" fill="#f28236" d="M1006.9 951.7L1021.2 979.1L996.5 981L982.3 953.4Z"/>
<path class="s1" fill="#f18135" d="M982.3 953.4L996.5 981L971.6 982L957.4 954.3Z"/>
<path class="s1" fill="#f18135" d="M957.4 954.3L971.6 982L946.4 982.2L932.3 954.4Z"/>
<path class="s1" fill="#f08034" d="M932.3 954.4L946.4 982.2L921 981.6L907 953.6Z"/>
<path class="s1" fill="#ef7f33" d="M907 953.6L921 981.6L895.3 980.1L881.4 952Z"/>
<path class="s1" fill="#ef7f33" d="M881.4 952L895.3 980.1L869.4 977.7L858.6 955.7L871.1 951Z"/>
<path class="s2" fill="#a7a7a7" d="M858.6 955.7L855.5 949.4L871.1 951Z"/>
<path class="s1" fill="#ee7e32" d="M858.6 955.7L869.4 977.7L843.1 974.4L838.1 964Z"/>
<path class="s2" fill="#a6a6a6" d="M855.5 949.4L858.6 955.7L838.1 964L829.4 946Z"/>
<path class="s1" fill="#ee7e32" d="M838.1 964L843.1 974.4L821.9 971Z"/>
<path class="s2" fill="#a6a6a6" d="M829.4 946L838.1 964L821.9 971L816.6 970.2L802.9 941.7Z"/>
<path class="s2" fill="#a6a6a6" d="M802.9 941.7L816.6 970.2L789.7 965.1L776.2 936.5Z"/>
<path class="s2" fill="#a6a6a6" d="M776.2 936.5L789.7 965.1L762.6 959L749.1 930.3Z"/>
<path class="s2" fill="#a5a5a5" d="M749.1 930.3L762.6 959L735.1 952L723.2 926.4L727 924.6Z"/>
<path class="s3" fill="#ffc000" d="M723.2 926.4L721.7 923.2L727 924.6Z"/>
<path class="s2" fill="#a5a5a5" d="M723.2 926.4L735.1 952L707.3 944L703.9 936.6Z"/>
<path class="s3" fill="#ffc000" d="M721.7 923.2L723.2 926.4L703.9 936.6L694 915.1Z"/>
<path class="s2" fill="#a5a5a5" d="M703.9 936.6L707.3 944L696.6 940.6Z"/>
<path class="s3" fill="#ffc000" d="M694 915.1L703.9 936.6L696.6 940.6L679.1 935.1L665.9 906Z"/>
<path class="s5" fill="#5f913d" d="M1626.1 645.2L1642.5 669.6L1621.4 691.3L1605.1 666.7Z"/>
<path class="s4" fill="#4e84b5" d="M1619.7 693L1600.3 712.3L1586.4 691.2Z"/>
<path class="s5" fill="#60933d" d="M1605.1 666.7L1621.4 691.3L1619.7 693L1586.4 691.2L1584 687.6Z"/>
<path class="s4" fill="#4f86b7" d="M1586.4 691.2L1600.3 712.3L1579.1 732.6L1562.8 707.7L1580.5 690.9Z"/>
<path class="s5" fill="#61953e" d="M1584 687.6L1586.4 691.2L1580.5 690.9Z"/>
<path class="s3" fill="#dda703" d="M1560.5 749.7L1557.8 752.2L1556.1 749.5Z"/>
<path class="s4" fill="#5188b9" d="M1562.8 707.7L1579.1 732.6L1560.5 749.7L1556.1 749.5L1541.6 727.2Z"/>
<path class="s3" fill="#e0aa03" d="M1556.1 749.5L1557.8 752.2L1536.4 771.2L1521.7 748.1Z"/>
<path class="s4" fill="#528abc" d="M1541.6 727.2L1556.1 749.5L1521.7 748.1L1520.3 746Z"/>
<path class="s3" fill="#e3ac04" d="M1521.7 748.1L1536.4 771.2L1515 789.5L1499 764.1L1517.9 748Z"/>
<path class="s4" fill="#548cbe" d="M1520.3 746L1521.7 748.1L1517.9 748Z"/>
<path class="s3" fill="#e6ae05" d="M1499 764.1L1515 789.5L1493.5 807.1L1477.5 781.5Z"/>
<path class="s2" fill="#999999" d="M1491 809L1471.9 823.9L1462.3 808.4Z"/>
<path class="s3" fill="#e9b105" d="M1477.5 781.5L1493.5 807.1L1491 809L1462.3 808.4L1456 798.2Z"/>
<path class="s2" fill="#9b9b9b" d="M1462.3 808.4L1471.9 823.9L1450.1 840.1L1434.3 814.2L1442.6 808.1Z"/>
<path class="s3" fill="#ecb306" d="M1456 798.2L1462.3 808.4L1442.6 808.1Z"/>
<path class="s2" fill="#9d9d9d" d="M1434.3 814.2L1450.1 840.1L1428.3 855.6L1412.6 829.6Z"/>
<path class="s2" fill="#a0a0a0" d="M1412.6 829.6L1428.3 855.6L1406.4 870.4L1390.7 844.2Z"/>
<path class="s1" fill="#e57d37" d="M1403.1 872.6L1384.4 884.5L1377.5 872.9Z"/>
<path class="s2" fill="#a2a2a2" d="M1390.7 844.2L1406.4 870.4L1403.1 872.6L1377.5 872.9L1368.8 858.1Z"/>
<path class="s1" fill="#e87f38" d="M1377.5 872.9L1384.4 884.5L1362.2 897.9L1348 873.7Z"/>
<path class="s2" fill="#a4a4a4" d="M1368.8 858.1L1377.5 872.9L1348 873.7L1346.7 871.4Z"/>
<path class="s1" fill="#eb8139" d="M1348 873.7L1362.2 897.9L1339.9 910.6L1324.4 883.9L1342.2 873.9Z"/>
<path class="s2" fill="#a7a7a7" d="M1346.7 871.4L1348 873.7L1342.2 873.9Z"/>
<path class="s1" fill="#ed833a" d="M1324.4 883.9L1339.9 910.6L1317.5 922.6L1302.1 895.7Z"/>
<path class="s1" fill="#f0843b" d="M1302.1 895.7L1317.5 922.6L1294.9 933.8L1279.6 906.7Z"/>
<path class="s1" fill="#f2863c" d="M1279.6 906.7L1294.9 933.8L1272.2 944.3L1257 917.1Z"/>
<path class="s0" fill="#4f7ccc" d="M1265.6 947.2L1249.4 954.1L1246.5 948.9Z"/>
<path class="s1" fill="#f4873d" d="M1257 917.1L1272.2 944.3L1265.6 947.2L1246.5 948.9L1234.2 926.7Z"/>
<path class="s0" fill="#507dce" d="M1246.5 948.9L1249.4 954.1L1226.4 963.1L1220 951.6Z"/>
<path class="s1" fill="#f6883d" d="M1234.2 926.7L1246.5 948.9L1220 951.6L1211.3 935.6Z"/>
<path class="s0" fill="#507ecf" d="M1220 951.6L1226.4 963.1L1203.2 971.4L1194.1 954.7Z"/>
<path class="s1" fill="#f7893d" d="M1211.3 935.6L1220 951.6L1194.1 954.7L1188.2 943.7Z"/>
<path class="s0" fill="#507ed0" d="M1194.1 954.7L1203.2 971.4L1179.8 978.9L1168.6 958.1Z"/>
<path class="s1" fill="#f9893d" d="M1188.2 943.7L1194.1 954.7L1168.6 958.1L1164.9 951.1Z"/>
<path class="s0" fill="#507ed0" d="M1168.6 958.1L1179.8 978.9L1156.3 985.7L1143.6 961.9Z"/>
<path class="s1" fill="#f9893d" d="M1164.9 951.1L1168.6 958.1L1143.6 961.9L1141.4 957.7Z"/>
<path class="s0" fill="#4f7dcf" d="M1143.6 961.9L1156.3 985.7L1132.6 991.7L1119.1 966Z"/>
<path class="s1" fill="#f8883c" d="M1141.4 957.7L1143.6 961.9L1119.1 966L1117.8 963.6Z"/>
<path class="s0" fill="#4e7cce" d="M1119.1 966L1132.6 991.7L1108.7 996.9L1094.9 970.5Z"/>
<path class="s1" fill="#f7873b" d="M1117.8 963.6L1119.1 966L1094.9 970.5L1093.9 968.6Z"/>
<path class="s0" fill="#4d7bcd" d="M1094.9 970.5L1108.7 996.9L1084.6 1001.4L1071.2 975.4Z"/>
<path class="s1" fill="#f6863a" d="M1093.9 968.6L1094.9 970.5L1071.2 975.4L1069.9 972.9Z"/>
<path class="s0" fill="#4c7acc" d="M1071.2 975.4L1084.6 1001.4L1060.2 1005L1047.8 980.6Z"/>
<path class="s1" fill="#f58539" d="M1069.9 972.9L1071.2 975.4L1047.8 980.6L1045.7 976.4Z"/>
<path class="s0" fill="#4b79cb" d="M1047.8 980.6L1060.2 1005L1035.7 1007.8L1024.8 986.3Z"/>
<path class="s1" fill="#f48438" d="M1045.7 976.4L1047.8 980.6L1024.8 986.3L1021.2 979.1Z"/>
<path class="s0" fill="#4a78ca" d="M1024.8 986.3L1035.7 1007.8L1010.9 1009.9L1002.2 992.4Z"/>
<path class="s1" fill="#f38337" d="M1021.2 979.1L1024.8 986.3L1002.2 992.4L996.5 981Z"/>
<path class="s0" fill="#4977c9" d="M1002.2 992.4L1010.9 1009.9L985.9 1011.1L979.9 998.9Z"/>
<path class="s1" fill="#f28236" d="M996.5 981L1002.2 992.4L979.9 998.9L971.6 982Z"/>
<path class="s0" fill="#4876c8" d="M979.9 998.9L985.9 1011.1L960.7 1011.4L958 1005.8Z"/>
<path class="s1" fill="#f18135" d="M971.6 982L979.9 998.9L958 1005.8L946.4 982.2Z"/>
<path class="s0" fill="#4775c7" d="M958 1005.8L960.7 1011.4L942.7 1011Z"/>
<path class="s1" fill="#f08034" d="M946.4 982.2L958 1005.8L942.7 1011L935.2 1010.9L921 981.6Z"/>
<path class="s1" fill="#ef7f33" d="M921 981.6L935.2 1010.9L909.4 1009.5L895.3 980.1Z"/>
<path class="s1" fill="#ef7f33" d="M895.3 980.1L909.4 1009.5L883.4 1007.3L869.4 977.7Z"/>
<path class="s1" fill="#ee7e32" d="M869.4 977.7L883.4 1007.3L857 1004.1L843.1 974.4Z"/>
<path class="s1" fill="#ee7e32" d="M843.1 974.4L857 1004.1L830.4 1000.1L817.8 972.8L821.9 971Z"/>
<path class="s2" fill="#a6a6a6" d="M817.8 972.8L816.6 970.2L821.9 971Z"/>
<path class="s1" fill="#ee7e32" d="M817.8 972.8L830.4 1000.1L803.5 995.1L797.5 981.9Z"/>
<path class="s2" fill="#a6a6a6" d="M816.6 970.2L817.8 972.8L797.5 981.9L789.7 965.1Z"/>
<path class="s1" fill="#ee7e32" d="M797.5 981.9L803.5 995.1L780.4 990.1Z"/>
<path class="s2" fill="#a6a6a6" d="M789.7 965.1L797.5 981.9L780.4 990.1L776.2 989.2L762.6 959Z"/>
<path class="s2" fill="#a5a5a5" d="M762.6 959L776.2 989.2L748.7 982.3L735.1 952Z"/>
<path class="s2" fill="#a5a5a5" d="M735.1 952L748.7 982.3L720.7 974.5L707.3 944Z"/>
<path class="s2" fill="#a5a5a5" d="M707.3 944L720.7 974.5L692.5 965.6L684.4 947.1L696.6 940.6Z"/>
<path class="s3" fill="#ffc000" d="M684.4 947.1L679.1 935.1L696.6 940.6Z"/>
<path class="s4" fill="#4e84b4" d="M1659.1 695.1L1659.1 695.1L1638 717L1622.7 693.2Z"/>
<path class="s5" fill="#60933d" d="M1642.5 669.6L1659.1 695.1L1659.1 695.1L1622.7 693.2L1621.4 691.3Z"/>
<path class="s4" fill="#4f85b6" d="M1622.7 693.2L1638 717L1616.7 738.2L1600.3 712.3L1619.7 693Z"/>
<path class="s5" fill="#61943e" d="M1621.4 691.3L1622.7 693.2L1619.7 693Z"/>
<path class="s3" fill="#dda702" d="M1602.9 751.5L1595.5 758.7L1590.6 751Z"/>
<path class="s4" fill="#5087b9" d="M1600.3 712.3L1616.7 738.2L1602.9 751.5L1590.6 751L1579.1 732.6Z"/>
<path class="s3" fill="#dfa903" d="M1590.6 751L1595.5 758.7L1574.1 778.5L1557.8 752.2L1560.5 749.7Z"/>
<path class="s4" fill="#5289bb" d="M1579.1 732.6L1590.6 751L1560.5 749.7Z"/>
<path class="s3" fill="#e2ab03" d="M1557.8 752.2L1574.1 778.5L1552.7 797.7L1536.4 771.2Z"/>
<path class="s2" fill="#969696" d="M1538.2 810.1L1531.2 816.1L1527.3 809.8Z"/>
<path class="s3" fill="#e5ad04" d="M1536.4 771.2L1552.7 797.7L1538.2 810.1L1527.3 809.8L1515 789.5Z"/>
<path class="s2" fill="#989898" d="M1527.3 809.8L1531.2 816.1L1509.6 833.9L1494.7 809.1Z"/>
<path class="s3" fill="#e8b005" d="M1515 789.5L1527.3 809.8L1494.7 809.1L1493.5 807.1Z"/>
<path class="s2" fill="#9a9a9a" d="M1494.7 809.1L1509.6 833.9L1487.9 850.9L1471.9 823.9L1491 809Z"/>
<path class="s3" fill="#ebb206" d="M1493.5 807.1L1494.7 809.1L1491 809Z"/>
<path class="s2" fill="#9c9c9c" d="M1471.9 823.9L1487.9 850.9L1466.1 867.3L1450.1 840.1Z"/>
<path class="s1" fill="#e07a34" d="M1459.3 872.2L1444.2 883L1437.9 872.2Z"/>
<path class="s2" fill="#9f9f9f" d="M1450.1 840.1L1466.1 867.3L1459.3 872.2L1437.9 872.2L1428.3 855.6Z"/>
<path class="s1" fill="#e37c36" d="M1437.9 872.2L1444.2 883L1422.2 897.9L1407.6 872.5Z"/>
<path class="s2" fill="#a1a1a1" d="M1428.3 855.6L1437.9 872.2L1407.6 872.5L1406.4 870.4Z"/>
<path class="s1" fill="#e67e37" d="M1407.6 872.5L1422.2 897.9L1400.1 912.2L1384.4 884.5L1403.1 872.6Z"/>
<path class="s2" fill="#a3a3a3" d="M1406.4 870.4L1407.6 872.5L1403.1 872.6Z"/>
<path class="s1" fill="#e98038" d="M1384.4 884.5L1400.1 912.2L1377.9 925.8L1362.2 897.9Z"/>
<path class="s1" fill="#ec823a" d="M1362.2 897.9L1377.9 925.8L1355.5 938.6L1339.9 910.6Z"/>
<path class="s0" fill="#4d79c7" d="M1350.8 941.2L1333 950.7L1328.4 942.4Z"/>
<path class="s1" fill="#ef833b" d="M1339.9 910.6L1355.5 938.6L1350.8 941.2L1328.4 942.4L1317.5 922.6Z"/>
<path class="s0" fill="#4e7ac9" d="M1328.4 942.4L1333 950.7L1310.4 962.1L1300.6 944.2Z"/>
<path class="s1" fill="#f1853c" d="M1317.5 922.6L1328.4 942.4L1300.6 944.2L1294.9 933.8Z"/>
<path class="s0" fill="#4f7ccb" d="M1300.6 944.2L1310.4 962.1L1287.6 972.8L1273.4 946.4Z"/>
<path class="s1" fill="#f3863c" d="M1294.9 933.8L1300.6 944.2L1273.4 946.4L1272.2 944.3Z"/>
<path class="s0" fill="#507dcd" d="M1273.4 946.4L1287.6 972.8L1264.7 982.7L1249.4 954.1L1265.6 947.2Z"/>
<path class="s1" fill="#f5873d" d="M1272.2 944.3L1273.4 946.4L1265.6 947.2Z"/>
<path class="s0" fill="#507dce" d="M1249.4 954.1L1264.7 982.7L1241.6 991.9L1226.4 963.1Z"/>
<path class="s0" fill="#507ed0" d="M1226.4 963.1L1241.6 991.9L1218.4 1000.4L1203.2 971.4Z"/>
<path class="s0" fill="#507ed0" d="M1203.2 971.4L1218.4 1000.4L1194.9 1008.1L1179.8 978.9Z"/>
<path class="s0" fill="#4f7dcf" d="M1179.8 978.9L1194.9 1008.1L1171.3 1015L1156.3 985.7Z"/>
<path class="s0" fill="#4f7dcf" d="M1156.3 985.7L1171.3 1015L1147.6 1021.2L1132.6 991.7Z"/>
<path class="s0" fill="#4e7cce" d="M1132.6 991.7L1147.6 1021.2L1123.6 1026.6L1108.7 996.9Z"/>
<path class="s0" fill="#4d7bcd" d="M1108.7 996.9L1123.6 1026.6L1099.4 1031.2L1084.6 1001.4Z"/>
<path class="s0" fill="#4c7acc" d="M1084.6 1001.4L1099.4 1031.2L1075 1035L1060.2 1005Z"/>
<path class="s0" fill="#4b79cb" d="M1060.2 1005L1075 1035L1050.4 1037.9L1035.7 1007.8Z"/>
<path class="s0" fill="#4a78ca" d="M1035.7 1007.8L1050.4 1037.9L1025.5 1040.1L1010.9 1009.9Z"/>
<path class="s0" fill="#4977c9" d="M1010.9 1009.9L1025.5 1040.1L1000.5 1041.5L985.9 1011.1Z"/>
<path class="s0" fill="#4876c8" d="M985.9 1011.1L1000.5 1041.5L975.1 1042L960.7 1011.4Z"/>
<path class="s0" fill="#4775c7" d="M960.7 1011.4L975.1 1042L949.5 1041.6L936.3 1013.2L942.7 1011Z"/>
<path class="s1" fill="#f08034" d="M936.3 1013.2L935.2 1010.9L942.7 1011Z"/>
<path class="s0" fill="#4674c6" d="M936.3 1013.2L949.5 1041.6L923.7 1040.4L914.7 1020.9Z"/>
<path class="s1" fill="#ef7f33" d="M935.2 1010.9L936.3 1013.2L914.7 1020.9L909.4 1009.5Z"/>
<path class="s0" fill="#4674c6" d="M914.7 1020.9L923.7 1040.4L897.6 1038.3L893.4 1029.1Z"/>
<path class="s1" fill="#ef7f33" d="M909.4 1009.5L914.7 1020.9L893.4 1029.1L883.4 1007.3Z"/>
<path class="s0" fill="#4573c5" d="M893.4 1029.1L897.6 1038.3L876.7 1035.9Z"/>
<path class="s1" fill="#ee7e32" d="M883.4 1007.3L893.4 1029.1L876.7 1035.9L871.2 1035.3L857 1004.1Z"/>
<path class="s1" fill="#ee7e32" d="M857 1004.1L871.2 1035.3L844.4 1031.4L830.4 1000.1Z"/>
<path class="s1" fill="#ee7e32" d="M830.4 1000.1L844.4 1031.4L817.4 1026.6L803.5 995.1Z"/>
<path class="s1" fill="#ee7e32" d="M803.5 995.1L817.4 1026.6L790.1 1020.8L777.3 991.5L780.4 990.1Z"/>
<path class="s2" fill="#a6a6a6" d="M777.3 991.5L776.2 989.2L780.4 990.1Z"/>
<path class="s1" fill="#ed7d31" d="M777.3 991.5L790.1 1020.8L762.4 1014L757 1001.5Z"/>
<path class="s2" fill="#a5a5a5" d="M776.2 989.2L777.3 991.5L757 1001.5L748.7 982.3Z"/>
<path class="s1" fill="#ed7d31" d="M757 1001.5L762.4 1014L743.1 1008.7Z"/>
<path class="s2" fill="#a5a5a5" d="M748.7 982.3L757 1001.5L743.1 1008.7L734.4 1006.3L720.7 974.5Z"/>
<path class="s2" fill="#a5a5a5" d="M720.7 974.5L734.4 1006.3L706 997.6L692.5 965.6Z"/>
</g>
</svg>
<svg class="ov" style="top:180px" width="1920" height="920" viewBox="0 180 1920 920">
<text x="15" y="204" font-size="12.3" fill="#242424" textLength="35.5" lengthAdjust="spacingAndGlyphs">AE107</text>
<path d="M93.5 197l4.0 4l4.0 -4" fill="none" stroke="#444" stroke-width="1.2" stroke-linecap="round" stroke-linejoin="round"/>
<circle cx="119.500" cy="196" r="1" fill="#555"/><circle cx="119.500" cy="200" r="1" fill="#555"/><circle cx="119.500" cy="204" r="1" fill="#555"/>
<path d="M138 194l10 10m0-10l-10 10" stroke="#b4b4b4" stroke-width="1.200"/><path d="M159.500 199.500l4.500 4.500l10-10" fill="none" stroke="#b4b4b4" stroke-width="1.200"/>
<text x="185" y="204" font-size="15" fill="#333" textLength="13" lengthAdjust="spacingAndGlyphs" font-style="italic" style="font-family:Liberation Serif,serif">fx</text>
<path d="M204.5 197.5l3.5 3.5l3.5 -3.5" fill="none" stroke="#666" stroke-width="1" stroke-linecap="round" stroke-linejoin="round"/>
<path d="M1897.5 195.5l4.75 4.5l4.75 -4.5" fill="none" stroke="#444" stroke-width="1.2" stroke-linecap="round" stroke-linejoin="round"/>
<path d="M13.700 231.700h8.300v-8z" fill="#dcdcdc"/>
<text x="44.0" y="231.5" font-size="11" fill="#444" text-anchor="middle">B</text>
<text x="102.0" y="231.5" font-size="11" fill="#444" text-anchor="middle">C</text>
<text x="160.0" y="231.5" font-size="11" fill="#444" text-anchor="middle">D</text>
<text x="218.0" y="231.5" font-size="11" fill="#444" text-anchor="middle">E</text>
<text x="276.0" y="231.5" font-size="11" fill="#444" text-anchor="middle">F</text>
<text x="334.0" y="231.5" font-size="11" fill="#444" text-anchor="middle">G</text>
<text x="392.0" y="231.5" font-size="11" fill="#444" text-anchor="middle">H</text>
<text x="450.0" y="231.5" font-size="11" fill="#444" text-anchor="middle">I</text>
<text x="508.0" y="231.5" font-size="11" fill="#444" text-anchor="middle">J</text>
<text x="566.0" y="231.5" font-size="11" fill="#444" text-anchor="middle">K</text>
<text x="624.0" y="231.5" font-size="11" fill="#444" text-anchor="middle">L</text>
<text x="682.0" y="231.5" font-size="11" fill="#444" text-anchor="middle">M</text>
<text x="740.0" y="231.5" font-size="11" fill="#444" text-anchor="middle">N</text>
<text x="798.0" y="231.5" font-size="11" fill="#444" text-anchor="middle">O</text>
<text x="856.0" y="231.5" font-size="11" fill="#444" text-anchor="middle">P</text>
<text x="1444" y="231.5" font-size="11" fill="#444" text-anchor="middle">Q</text>
<path d="M73.5 221v14M131.5 221v14M189.5 221v14M247.5 221v14M305.5 221v14M363.5 221v14M421.5 221v14M479.5 221v14M537.5 221v14M595.5 221v14M653.5 221v14M711.5 221v14M769.5 221v14M827.5 221v14M885.5 221v14" stroke="#d4d4d4" stroke-width="1"/>
<path d="M0 235.500h1898" stroke="#c8c8c8" stroke-width="1"/>
<defs><clipPath id="rc14"><rect x="0" y="488" width="26" height="10"/></clipPath><clipPath id="rc16"><rect x="0" y="518" width="26" height="6"/></clipPath><clipPath id="rc18"><rect x="0" y="545" width="26" height="4"/></clipPath><clipPath id="rc22"><rect x="0" y="605" width="26" height="9"/></clipPath><clipPath id="rcl"><rect x="0" y="236" width="26" height="861"/></clipPath></defs>
<g clip-path="url(#rcl)">
<text x="12.5" y="249.5" font-size="11" fill="#444" text-anchor="middle">7</text>
<text x="12.5" y="267.5" font-size="11" fill="#444" text-anchor="middle">8</text>
<text x="12.5" y="285.5" font-size="11" fill="#444" text-anchor="middle">9</text>
<text x="12.5" y="303.5" font-size="11" fill="#444" text-anchor="middle">10</text>
<text x="12.5" y="321.5" font-size="11" fill="#444" text-anchor="middle">11</text>
<text x="12.5" y="339.5" font-size="11" fill="#444" text-anchor="middle">12</text>
<text x="12.5" y="357.5" font-size="11" fill="#444" text-anchor="middle">13</text>
<text x="12.5" y="375.5" font-size="11" fill="#444" text-anchor="middle">14</text>
<text x="12.5" y="393.5" font-size="11" fill="#444" text-anchor="middle">15</text>
<text x="12.5" y="411.5" font-size="11" fill="#444" text-anchor="middle">16</text>
<text x="12.5" y="429.5" font-size="11" fill="#444" text-anchor="middle">17</text>
<text x="12.5" y="447.5" font-size="11" fill="#444" text-anchor="middle">18</text>
<text x="12.5" y="465.5" font-size="11" fill="#444" text-anchor="middle">19</text>
<text x="12.5" y="483.5" font-size="11" fill="#444" text-anchor="middle">20</text>
<g clip-path="url(#rc14)"><text x="12.5" y="497.3" font-size="11" fill="#444" text-anchor="middle">21</text></g>
<text x="12.5" y="513.5" font-size="11" fill="#444" text-anchor="middle">25</text>
<g clip-path="url(#rc16)"><text x="12.5" y="523.3" font-size="11" fill="#444" text-anchor="middle">26</text></g>
<text x="12.5" y="540.5" font-size="11" fill="#444" text-anchor="middle">29</text>
<g clip-path="url(#rc18)"><text x="12.5" y="548.3" font-size="11" fill="#444" text-anchor="middle">30</text></g>
<text x="12.5" y="564.5" font-size="11" fill="#444" text-anchor="middle">41</text>
<text x="12.5" y="582.5" font-size="11" fill="#444" text-anchor="middle">42</text>
<text x="12.5" y="600.5" font-size="11" fill="#444" text-anchor="middle">43</text>
<g clip-path="url(#rc22)"><text x="12.5" y="613.3" font-size="11" fill="#444" text-anchor="middle">44</text></g>
<text x="12.5" y="631.5" font-size="11" fill="#444" text-anchor="middle">53</text>
<text x="12.5" y="649.5" font-size="11" fill="#444" text-anchor="middle">54</text>
<text x="12.5" y="667.5" font-size="11" fill="#444" text-anchor="middle">55</text>
<text x="12.5" y="685.5" font-size="11" fill="#444" text-anchor="middle">56</text>
<text x="12.5" y="703.5" font-size="11" fill="#444" text-anchor="middle">57</text>
<text x="12.5" y="721.5" font-size="11" fill="#444" text-anchor="middle">58</text>
<text x="12.5" y="739.5" font-size="11" fill="#444" text-anchor="middle">59</text>
<text x="12.5" y="757.5" font-size="11" fill="#444" text-anchor="middle">60</text>
<text x="12.5" y="775.5" font-size="11" fill="#444" text-anchor="middle">61</text>
<text x="12.5" y="793.5" font-size="11" fill="#444" text-anchor="middle">62</text>
<text x="12.5" y="811.5" font-size="11" fill="#444" text-anchor="middle">63</text>
<text x="12.5" y="829.5" font-size="11" fill="#444" text-anchor="middle">64</text>
<text x="12.5" y="847.5" font-size="11" fill="#444" text-anchor="middle">65</text>
<text x="12.5" y="865.5" font-size="11" fill="#444" text-anchor="middle">66</text>
<text x="12.5" y="883.5" font-size="11" fill="#444" text-anchor="middle">67</text>
<text x="12.5" y="901.5" font-size="11" fill="#444" text-anchor="middle">68</text>
<text x="12.5" y="919.5" font-size="11" fill="#444" text-anchor="middle">69</text>
<text x="12.5" y="937.5" font-size="11" fill="#444" text-anchor="middle">70</text>
<text x="12.5" y="955.5" font-size="11" fill="#444" text-anchor="middle">71</text>
<text x="12.5" y="973.5" font-size="11" fill="#444" text-anchor="middle">72</text>
<text x="12.5" y="991.5" font-size="11" fill="#444" text-anchor="middle">73</text>
<text x="12.5" y="1009.5" font-size="11" fill="#444" text-anchor="middle">74</text>
<text x="12.5" y="1027.5" font-size="11" fill="#444" text-anchor="middle">75</text>
<text x="12.5" y="1045.5" font-size="11" fill="#444" text-anchor="middle">76</text>
<text x="12.5" y="1063.5" font-size="11" fill="#444" text-anchor="middle">77</text>
<text x="12.5" y="1081.5" font-size="11" fill="#444" text-anchor="middle">78</text>
<text x="12.5" y="1099.5" font-size="11" fill="#444" text-anchor="middle">79</text>
<path d="M2 254h24M2 272h24M2 290h24M2 308h24M2 326h24M2 344h24M2 362h24M2 380h24M2 398h24M2 416h24M2 434h24M2 452h24M2 470h24M2 488h24M2 498h24M2 518h24M2 524h24M2 545h24M2 549h24M2 569h24M2 587h24M2 605h24M2 614h24M2 636h24M2 654h24M2 672h24M2 690h24M2 708h24M2 726h24M2 744h24M2 762h24M2 780h24M2 798h24M2 816h24M2 834h24M2 852h24M2 870h24M2 888h24M2 906h24M2 924h24M2 942h24M2 960h24M2 978h24M2 996h24M2 1014h24M2 1032h24M2 1050h24M2 1068h24M2 1086h24M2 1104h24M2 498.5h24M2 524.5h24M2 526h24M2 549.5h24M2 614.5h24M2 616.5h24" stroke="#e0e0e0" stroke-width="1"/>
</g>
<path d="M25.500 236v861" stroke="#c8c8c8" stroke-width="1"/>
<text x="947.5" y="249" font-size="12.6" fill="#fff" textLength="124.5" lengthAdjust="spacingAndGlyphs" font-weight="bold">Temp (A) vs. Press (B)</text>
<text x="970.8" y="279" font-size="15.4" fill="#000" textLength="76" lengthAdjust="spacingAndGlyphs" font-weight="bold">Yield Y-Hat</text>
<text x="892" y="299" font-size="15.4" fill="#000" textLength="236.3" lengthAdjust="spacingAndGlyphs" font-weight="bold">Surface Plot Temp (A) vs. Press (B)</text>
<rect x="158.500" y="357.5" width="9" height="9" fill="#fed280" stroke="#ba914b" stroke-width="1"/>
<text x="172.5" y="367.0" font-size="15.2" fill="#000" textLength="80.2" lengthAdjust="spacingAndGlyphs">101.2-101.5</text>
<rect x="158.500" y="429.9" width="9" height="9" fill="#c3c3c3" stroke="#8e8e8e" stroke-width="1"/>
<text x="172.5" y="439.4" font-size="15.2" fill="#000" textLength="80.2" lengthAdjust="spacingAndGlyphs">100.9-101.2</text>
<rect x="158.500" y="502.4" width="9" height="9" fill="#f1a789" stroke="#b3735a" stroke-width="1"/>
<text x="172.5" y="511.9" font-size="15.2" fill="#000" textLength="80.2" lengthAdjust="spacingAndGlyphs">100.6-100.9</text>
<rect x="158.500" y="574.8" width="9" height="9" fill="#91a3d6" stroke="#64729e" stroke-width="1"/>
<text x="172.5" y="584.3" font-size="15.2" fill="#000" textLength="80.2" lengthAdjust="spacingAndGlyphs">100.3-100.6</text>
<rect x="158.500" y="647.3" width="9" height="9" fill="#63993f" stroke="#467029" stroke-width="1"/>
<text x="172.5" y="656.8" font-size="15.2" fill="#000" textLength="67.7" lengthAdjust="spacingAndGlyphs">100-100.3</text>
<rect x="158.500" y="719.7" width="9" height="9" fill="#528cc1" stroke="#305f8c" stroke-width="1"/>
<text x="172.5" y="729.2" font-size="15.2" fill="#000" textLength="59.3" lengthAdjust="spacingAndGlyphs">99.7-100</text>
<rect x="158.500" y="792.1" width="9" height="9" fill="#e6ad00" stroke="#a77d00" stroke-width="1"/>
<text x="172.5" y="801.6" font-size="15.2" fill="#000" textLength="63.5" lengthAdjust="spacingAndGlyphs">99.4-99.7</text>
<rect x="158.500" y="864.6" width="9" height="9" fill="#959595" stroke="#6a6a6a" stroke-width="1"/>
<text x="172.5" y="874.1" font-size="15.2" fill="#000" textLength="63.5" lengthAdjust="spacingAndGlyphs">99.1-99.4</text>
<rect x="158.500" y="937.0" width="9" height="9" fill="#d6702c" stroke="#9b4f1d" stroke-width="1"/>
<text x="172.5" y="946.5" font-size="15.2" fill="#000" textLength="63.5" lengthAdjust="spacingAndGlyphs">98.8-99.1</text>
<rect x="158.500" y="1009.5" width="9" height="9" fill="#3d67b1" stroke="#294a82" stroke-width="1"/>
<text x="172.5" y="1019.0" font-size="15.2" fill="#000" textLength="63.5" lengthAdjust="spacingAndGlyphs">98.5-98.8</text>
<text x="1655.7" y="930.3" font-size="9.5" fill="#000" textLength="18.7" lengthAdjust="spacingAndGlyphs">98.5</text>
<text x="1658.3" y="884.7" font-size="9.5" fill="#000" textLength="18.7" lengthAdjust="spacingAndGlyphs">98.8</text>
<text x="1661.0" y="838.6" font-size="9.5" fill="#000" textLength="18.7" lengthAdjust="spacingAndGlyphs">99.1</text>
<text x="1663.7" y="792.2" font-size="9.5" fill="#000" textLength="18.7" lengthAdjust="spacingAndGlyphs">99.4</text>
<text x="1666.4" y="745.3" font-size="9.5" fill="#000" textLength="18.7" lengthAdjust="spacingAndGlyphs">99.7</text>
<text x="1669.1" y="698.1" font-size="9.5" fill="#000" textLength="16.1" lengthAdjust="spacingAndGlyphs">100</text>
<text x="1671.9" y="650.5" font-size="9.5" fill="#000" textLength="24.1" lengthAdjust="spacingAndGlyphs">100.3</text>
<text x="1674.7" y="602.5" font-size="9.5" fill="#000" textLength="24.1" lengthAdjust="spacingAndGlyphs">100.6</text>
<text x="1677.5" y="554.2" font-size="9.5" fill="#000" textLength="24.1" lengthAdjust="spacingAndGlyphs">100.9</text>
<text x="1680.3" y="505.3" font-size="9.5" fill="#000" textLength="24.1" lengthAdjust="spacingAndGlyphs">101.2</text>
<text x="1683.1" y="456.1" font-size="9.5" fill="#000" textLength="24.1" lengthAdjust="spacingAndGlyphs">101.5</text>
<text x="316.0" y="821.9" font-size="9.5" fill="#000" textLength="8.6" lengthAdjust="spacingAndGlyphs" text-anchor="end">-1</text>
<text x="345.2" y="851.4" font-size="9.5" fill="#000" textLength="22.0" lengthAdjust="spacingAndGlyphs" text-anchor="end">-0.75</text>
<text x="385.4" y="882.9" font-size="9.5" fill="#000" textLength="16.6" lengthAdjust="spacingAndGlyphs" text-anchor="end">-0.5</text>
<text x="428.4" y="916.5" font-size="9.5" fill="#000" textLength="22.0" lengthAdjust="spacingAndGlyphs" text-anchor="end">-0.25</text>
<text x="474.4" y="952.5" font-size="9.5" fill="#000" textLength="5.4" lengthAdjust="spacingAndGlyphs" text-anchor="end">0</text>
<text x="523.8" y="991.1" font-size="9.5" fill="#000" textLength="18.7" lengthAdjust="spacingAndGlyphs" text-anchor="end">0.25</text>
<text x="576.9" y="1032.7" font-size="9.5" fill="#000" textLength="13.4" lengthAdjust="spacingAndGlyphs" text-anchor="end">0.5</text>
<text x="634.3" y="1077.6" font-size="9.5" fill="#000" textLength="18.7" lengthAdjust="spacingAndGlyphs" text-anchor="end">0.75</text>
<text x="1645.7" y="945.8" font-size="9.5" fill="#000" textLength="8.6" lengthAdjust="spacingAndGlyphs" text-anchor="middle">-1</text>
<text x="1545.3" y="966.8" font-size="9.5" fill="#000" textLength="22.0" lengthAdjust="spacingAndGlyphs" text-anchor="middle">-0.75</text>
<text x="1440.7" y="988.7" font-size="9.5" fill="#000" textLength="16.6" lengthAdjust="spacingAndGlyphs" text-anchor="middle">-0.5</text>
<text x="1331.7" y="1011.5" font-size="9.5" fill="#000" textLength="22.0" lengthAdjust="spacingAndGlyphs" text-anchor="middle">-0.25</text>
<text x="1218.0" y="1035.3" font-size="9.5" fill="#000" textLength="5.4" lengthAdjust="spacingAndGlyphs" text-anchor="middle">0</text>
<text x="1099.3" y="1060.1" font-size="9.5" fill="#000" textLength="18.7" lengthAdjust="spacingAndGlyphs" text-anchor="middle">0.25</text>
<text x="975.2" y="1086.0" font-size="9.5" fill="#000" textLength="13.4" lengthAdjust="spacingAndGlyphs" text-anchor="middle">0.5</text>
<text x="845.3" y="1113.2" font-size="9.5" fill="#000" textLength="18.7" lengthAdjust="spacingAndGlyphs" text-anchor="middle">0.75</text>
<text x="407.5" y="992.5" font-size="15" fill="#000" textLength="61.7" lengthAdjust="spacingAndGlyphs" font-weight="bold">Temp (A)</text>
<text x="1257.5" y="1062.5" font-size="15" fill="#000" textLength="67.5" lengthAdjust="spacingAndGlyphs" font-weight="bold">Press (B)</text>
<text x="0" y="0" font-size="15" fill="#000" textLength="86" lengthAdjust="spacingAndGlyphs" font-weight="bold" text-anchor="middle" transform="translate(1755.500 692) rotate(-90)">Yield Y-Hat</text>
<path d="M1904.500 230.500l5-6l5 6z" fill="#666"/><path d="M1904.500 1089l5 6l5-6z" fill="#666"/><rect x="1905" y="236" width="8.500" height="267" rx="4.200" fill="#6e6e6e"/>
</svg>
<div id="tabsbar" class="abs"></div><div id="activetab" class="abs"></div><div id="hscroll" class="abs"></div><div id="status" class="abs"></div><div id="viewsel" class="abs"></div>
<svg class="ov" style="top:1098px" width="1920" height="54" viewBox="0 1098 1920 54">
<path d="M35 1108.500l-4.500 4.500l4.500 4.500M62 1108.500l4.500 4.500l-4.500 4.500" fill="none" stroke="#9a9a9a" stroke-width="1.200"/>
<text x="124" y="1119" font-size="13.3" fill="#333" textLength="74" lengthAdjust="spacingAndGlyphs">DOE Design</text>
<path d="M211.5 1105L211.5 1122" stroke="#c4c4c4" stroke-width="1" fill="none"/>
<text x="224" y="1119" font-size="13.3" fill="#333" textLength="67.5" lengthAdjust="spacingAndGlyphs">Regression</text>
<path d="M305.5 1105L305.5 1122" stroke="#c4c4c4" stroke-width="1" fill="none"/>
<text x="318" y="1116" font-size="13.3" fill="#111" textLength="77" lengthAdjust="spacingAndGlyphs" stroke="#111" stroke-width=".3">Surface Plot</text>
<rect x="318" y="1121.500" width="79.500" height="2" fill="#107c41"/>
<path d="M410.5 1105L410.5 1122" stroke="#c4c4c4" stroke-width="1" fill="none"/>
<path d="M452.500 1113h11M458 1107.500v11" stroke="#444" stroke-width="1.200"/>
<circle cx="1155" cy="1109" r="1" fill="#444"/><circle cx="1155" cy="1113" r="1" fill="#444"/><circle cx="1155" cy="1117" r="1" fill="#444"/>
<path d="M1183 1108.500l-6 4.500l6 4.500zM1889 1108.500l6 4.500l-6 4.500z" fill="#555"/><rect x="1190" y="1109" width="361" height="8.500" rx="4.200" fill="#6e6e6e"/>
<text x="11" y="1146" font-size="11.5" fill="#333" textLength="31" lengthAdjust="spacingAndGlyphs">Ready</text>
<circle cx="68.500" cy="1136.500" r="1.800" fill="none" stroke="#444" stroke-width="1"/><path d="M62.500 1139.500h12M68.500 1139.500v4l-3.500 4.500M68.500 1143.500l3.500 4.500" fill="none" stroke="#444" stroke-width="1.100"/><path d="M71.500 1143.500l4.500 4.500m0-4.500l-4.500 4.500" stroke="#444" stroke-width="1"/>
<text x="80" y="1145.5" font-size="11.5" fill="#222" textLength="126" lengthAdjust="spacingAndGlyphs" stroke="#222" stroke-width=".25">Accessibility: Investigate</text>
<rect x="1633" y="1134.500" width="13" height="12" fill="none" stroke="#222" stroke-width="1.200"/><path d="M1637.500 1134.500v12M1641.500 1134.500v12M1633 1138.500h13M1633 1142.500h13" stroke="#222" stroke-width="1"/>
<rect x="1673" y="1134.500" width="13" height="12" fill="none" stroke="#222" stroke-width="1.200"/><rect x="1676" y="1137.500" width="7" height="6" fill="none" stroke="#222" stroke-width="1"/><path d="M1677.500 1139.500h4M1677.500 1141.500h4" stroke="#222" stroke-width=".8"/>
<rect x="1713" y="1134.500" width="13" height="12" fill="none" stroke="#222" stroke-width="1.200"/><path d="M1717 1134.500v6.500h5v-6.500M1713 1141h13" fill="none" stroke="#222" stroke-width="1"/>
<path d="M1746 1140.500h7M1863 1140.500h8M1867 1136.500v8" stroke="#333" stroke-width="1.200"/><path d="M1759 1140.500h99" stroke="#777" stroke-width="1"/><path d="M1808.500 1137v7" stroke="#777"/><rect x="1802.500" y="1134.500" width="4" height="12" fill="#555"/>
<text x="1885" y="1145" font-size="11.5" fill="#333" textLength="21" lengthAdjust="spacingAndGlyphs">90%</text>
</svg>
</body></html>
